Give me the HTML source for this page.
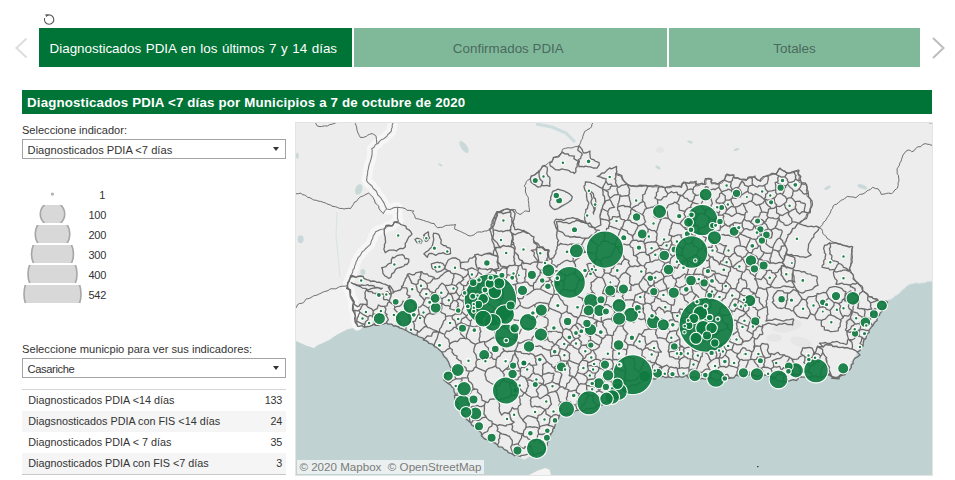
<!DOCTYPE html>
<html lang="es">
<head>
<meta charset="utf-8">
<title>Diagnosticados PDIA por Municipios</title>
<style>
html,body{margin:0;padding:0;background:#fff;}
body{width:955px;height:480px;position:relative;overflow:hidden;font-family:"Liberation Sans",sans-serif;color:#333;}
.abs{position:absolute;}
.tab{position:absolute;top:28px;height:39px;line-height:41px;overflow:hidden;text-align:center;font-size:13.4px;white-space:nowrap;}
.tab span{position:relative;}
.tab.on{background:#007336;color:#fff;}
.tab.off{background:#80b99a;color:#4b695d;}
#title{left:22px;top:90px;width:910px;height:24px;background:#007336;color:#fff;font-weight:bold;font-size:13.3px;line-height:25px;overflow:hidden;white-space:nowrap;letter-spacing:0.165px;}
#title span{position:absolute;left:5px;top:0;}
.lbl{font-size:11.05px;line-height:13px;color:#333;white-space:nowrap;}
.dd{left:22px;width:262px;height:18px;border:1px solid #a3a3a3;background:#fff;}
.dd span{position:absolute;left:4.6px;top:0;line-height:20px;font-size:11.15px;color:#333;white-space:nowrap;}
.dd i{position:absolute;right:5.8px;top:7px;width:0;height:0;border-left:3.5px solid transparent;border-right:3.5px solid transparent;border-top:4.5px solid #333;}
.leg{font-size:11.6px;color:#333;}
.row{position:absolute;left:22px;width:264px;height:21px;font-size:10.8px;line-height:21px;color:#333;white-space:nowrap;}
.row.s{background:#f5f5f5;}
.row b{font-weight:normal;position:absolute;left:6.3px;}
.row u{text-decoration:none;position:absolute;right:4.1px;letter-spacing:-0.3px;}
#map{left:295px;top:122px;width:638px;height:354px;overflow:hidden;background:#c1d2d3;}
#mapb{left:0;top:0;width:638px;height:354px;box-shadow:inset 0 0 0 1px #e3e5e5;pointer-events:none;}
</style>
</head>
<body>
<!-- reset icon -->
<svg class="abs" style="left:40px;top:11px" width="18" height="18" viewBox="0 0 18 18"><path d="M6.6 4.6 A4.7 4.7 0 1 1 4.6 7.2" fill="none" stroke="#555" stroke-width="1.1"/><path d="M5.2 3.2 L8.4 3.6 L6.3 6.2 Z" fill="#555"/></svg>
<!-- nav arrows -->
<svg class="abs" style="left:12px;top:34px" width="20" height="28" viewBox="0 0 20 28"><path d="M14.5 4.5 L4.5 14 L14.5 23.5" fill="none" stroke="#dedede" stroke-width="2.1"/></svg>
<svg class="abs" style="left:926px;top:34px" width="24" height="28" viewBox="0 0 24 28"><path d="M7 4 L17.5 14 L7 24" fill="none" stroke="#bdbdbd" stroke-width="2"/></svg>
<div class="tab on" style="left:39px;width:313px;"><span style="left:-2.2px;word-spacing:0.86px">Diagnosticados PDIA en los últimos 7 y 14 días</span></div>
<div class="tab off" style="left:354px;width:313px;"><span style="left:-2.2px">Confirmados PDIA</span></div>
<div class="tab off" style="left:669px;width:251px;"><span>Totales</span></div>
<div id="title" class="abs"><span>Diagnosticados PDIA &lt;7 días por Municipios a 7 de octubre de 2020</span></div>

<div class="abs lbl" style="left:22px;top:123.7px;">Seleccione indicador:</div>
<div class="abs dd" style="top:139px;"><span>Diagnosticados PDIA &lt;7 días</span><i></i></div>

<!-- size legend -->
<svg class="abs" style="left:20px;top:185px" width="120" height="125" viewBox="20 185 120 125" id="legend">
<defs>
<clipPath id="lc0"><rect x="20" y="205" width="70" height="18"/></clipPath>
<clipPath id="lc1"><rect x="20" y="225" width="70" height="18"/></clipPath>
<clipPath id="lc2"><rect x="20" y="245" width="70" height="18"/></clipPath>
<clipPath id="lc3"><rect x="20" y="265" width="70" height="18"/></clipPath>
<clipPath id="lc4"><rect x="20" y="285" width="70" height="18"/></clipPath>
</defs>
<circle cx="52.4" cy="194.1" r="1.7" fill="#b4b4b4"/>
<circle cx="52.5" cy="214" r="12.2" fill="#d8d8d8" stroke="#a6a6a6" stroke-width="1.6" clip-path="url(#lc0)"/>
<circle cx="52.5" cy="234" r="17.3" fill="#d8d8d8" stroke="#a6a6a6" stroke-width="1.6" clip-path="url(#lc1)"/>
<circle cx="52.5" cy="254" r="21.0" fill="#d8d8d8" stroke="#a6a6a6" stroke-width="1.6" clip-path="url(#lc2)"/>
<circle cx="52.5" cy="274" r="24.5" fill="#d8d8d8" stroke="#a6a6a6" stroke-width="1.6" clip-path="url(#lc3)"/>
<circle cx="52.5" cy="294" r="28.5" fill="#d8d8d8" stroke="#a6a6a6" stroke-width="1.6" clip-path="url(#lc4)"/>
<g font-family="Liberation Sans, sans-serif" font-size="11" fill="#333" text-anchor="end" letter-spacing="-0.3">
<text x="105.2" y="199">1</text>
<text x="106" y="219">100</text>
<text x="106" y="239">200</text>
<text x="106" y="259">300</text>
<text x="106" y="279">400</text>
<text x="106" y="299">542</text>
</g></svg>

<div class="abs lbl" style="left:22px;top:342.7px;font-size:11.17px;">Seleccione municpio para ver sus indicadores:</div>
<div class="abs dd" style="top:358px;"><span style="letter-spacing:-0.37px">Casariche</span><i></i></div>

<div class="abs" style="left:22px;top:389px;width:264px;height:1px;background:#d4d4d4;"></div>
<div class="row" style="top:390px;"><b>Diagnosticados PDIA &lt;14 días</b><u>133</u></div>
<div class="row s" style="top:411px;"><b>Diagsnosticados PDIA con FIS &lt;14 días</b><u>24</u></div>
<div class="row" style="top:432px;"><b>Diagnosticados PDIA &lt; 7 días</b><u>35</u></div>
<div class="row s" style="top:453px;"><b>Diagnosticados PDIA con FIS &lt;7 días</b><u>3</u></div>
<div class="abs" style="left:22px;top:474px;width:264px;height:1px;background:#c8c8c8;"></div>

<div id="map" class="abs">
<svg width="638" height="354" viewBox="0 0 638 354">
<rect width="638" height="354" fill="#ededed"/>
<path d="M0.1 216.8 1.7 217.8 3.6 218.8 6.0 219.4 7.7 220.6 9.3 221.4 11.7 222.1 13.3 223.2 14.8 223.7 17.0 224.4 18.9 225.4 20.7 224.0 22.0 222.0 24.3 221.5 26.7 221.1 28.3 220.1 29.6 219.2 31.7 218.4 34.2 217.6 35.9 216.5 37.5 215.1 39.3 213.7 41.0 212.6 43.3 211.2 45.5 210.1 46.8 209.3 48.4 208.5 50.6 207.6 52.8 206.4 54.8 205.6 56.8 205.6 59.8 204.8 62.2 203.6 63.9 203.8 66.4 203.6 69.1 204.0 71.0 203.9 73.6 203.1 76.3 202.8 77.9 202.2 79.9 202.3 82.7 202.2 85.0 201.5 87.0 201.3 89.6 200.9 91.7 200.9 93.4 201.2 96.3 201.6 98.7 202.5 101.0 202.7 103.4 203.8 105.0 204.6 106.8 205.2 109.3 206.4 110.9 207.0 112.5 207.8 114.7 208.9 116.4 209.5 117.8 210.5 120.0 211.4 121.9 212.0 123.4 213.1 125.8 214.2 127.9 215.2 129.3 216.6 131.5 217.4 133.4 218.7 134.6 219.9 136.6 221.0 138.6 222.5 139.8 223.7 141.3 224.6 143.1 226.0 144.3 227.2 145.8 228.4 147.9 230.2 149.0 232.0 150.1 233.7 152.3 235.8 153.2 237.8 153.6 239.1 154.7 240.7 155.9 242.9 156.8 245.2 157.0 247.6 156.6 249.6 154.9 251.2 152.0 252.1 151.5 253.6 150.9 255.7 150.1 258.1 152.1 260.0 153.9 261.1 156.0 262.9 157.3 264.7 159.5 266.4 159.9 269.2 160.5 271.7 160.4 273.5 160.7 275.5 161.2 278.1 162.2 280.0 163.3 281.8 163.5 283.5 164.1 285.3 165.5 287.4 166.3 289.5 166.8 291.3 168.5 292.4 170.6 294.0 171.8 295.8 173.2 297.3 175.6 299.3 177.0 301.1 178.0 302.4 180.0 304.2 181.7 305.5 182.7 306.6 184.3 308.2 186.0 309.9 187.2 311.8 188.4 314.2 190.2 316.2 191.8 316.7 194.0 317.8 196.5 318.2 198.2 319.1 200.4 319.8 202.4 321.0 203.5 322.7 205.1 323.8 207.3 325.0 208.8 326.5 210.7 327.5 212.8 328.9 214.1 330.3 216.1 331.4 218.5 332.6 220.0 333.4 222.0 334.2 224.3 335.4 226.0 336.0 228.6 337.4 231.1 336.7 232.6 335.5 234.7 334.5 237.2 334.4 239.3 334.6 240.9 335.2 243.1 335.1 244.4 333.1 246.2 331.1 247.4 330.0 248.8 328.2 250.2 326.0 250.8 324.5 252.1 322.5 252.6 320.1 253.8 318.5 254.2 316.2 255.3 313.2 255.7 311.2 257.0 309.2 257.5 307.0 258.7 305.6 259.4 303.9 260.4 301.6 261.3 300.0 262.0 298.4 263.2 296.0 264.0 293.5 265.0 290.6 266.7 290.8 269.2 291.5 271.0 291.7 272.8 290.9 275.6 290.8 278.2 289.5 279.8 288.3 281.7 288.2 284.5 287.8 286.8 287.8 288.4 287.3 290.5 286.3 293.0 286.2 294.9 286.1 296.8 285.4 298.8 284.6 300.7 283.6 302.6 282.7 304.3 282.4 306.1 281.9 308.1 280.6 310.2 279.5 312.0 278.9 313.3 277.8 315.4 275.8 317.7 274.6 319.4 274.0 321.3 272.3 322.8 270.6 324.2 269.9 326.4 269.0 328.4 267.4 329.7 266.0 331.4 265.3 332.8 264.3 334.7 263.2 337.1 262.2 339.2 262.2 340.9 261.8 342.8 260.5 345.1 259.7 347.3 259.3 349.0 258.6 350.9 257.9 353.2 256.9 355.4 255.9 357.1 255.6 359.2 255.8 361.5 255.1 363.2 254.8 365.1 254.6 367.8 254.3 370.7 254.5 372.9 253.6 375.7 253.9 377.7 253.9 379.9 254.0 382.7 254.6 385.0 254.0 387.6 253.7 390.3 252.4 392.0 253.4 393.7 254.6 396.4 254.2 398.3 254.7 400.1 254.9 402.8 255.1 404.9 255.5 406.6 255.3 409.0 255.5 411.2 255.7 412.7 255.5 415.0 256.1 417.4 256.3 419.0 256.5 421.0 257.3 423.4 257.0 425.2 256.5 426.7 256.3 428.9 255.6 431.4 255.5 433.2 255.8 435.1 255.3 437.2 254.5 439.2 254.0 440.8 253.3 442.8 253.1 445.3 253.2 447.7 252.8 449.4 252.7 452.1 252.5 454.4 252.3 456.1 252.8 458.7 252.8 461.1 252.9 462.9 253.1 465.2 252.5 467.7 252.5 469.3 252.5 473.4 253.6 475.4 254.4 477.4 255.5 480.1 256.6 481.7 257.3 484.0 258.7 486.7 258.5 488.6 258.8 491.1 258.4 493.7 258.0 495.3 258.2 497.6 257.4 500.5 257.0 502.4 256.1 504.0 254.7 506.5 254.5 509.3 254.0 510.9 253.7 512.7 253.8 515.2 253.6 517.0 253.4 518.5 253.9 520.9 253.9 523.2 253.9 524.9 254.1 527.0 253.4 529.5 253.0 531.3 253.0 532.7 252.6 534.9 252.8 536.9 254.6 537.8 256.1 540.3 256.0 542.9 255.9 544.7 254.1 546.8 252.8 548.9 252.1 550.8 249.9 552.5 247.6 554.1 246.3 554.9 243.1 556.2 240.6 557.7 238.4 559.6 235.7 560.6 233.9 561.9 231.1 562.9 229.2 564.3 227.6 565.3 225.3 566.9 223.8 567.5 221.1 568.5 218.0 569.5 216.6 570.7 214.4 571.5 212.2 572.8 210.5 573.4 208.2 574.8 205.7 575.4 204.2 576.9 202.4 577.9 200.5 579.2 199.3 580.6 197.7 581.4 195.5 583.2 193.6 584.2 192.0 585.9 189.7 586.9 188.3 588.6 186.7 589.4 184.3 590.4 182.6 591.5 180.9 592.2 178.5 594.7 177.3 596.7 176.9 598.2 175.6 600.0 173.8 601.8 173.0 603.8 171.7 606.1 169.1 607.8 167.5 609.6 166.3 610.9 164.6 613.1 163.3 615.3 162.0 617.4 161.9 618.9 161.2 621.3 160.8 623.9 161.2 625.8 161.0 627.8 160.8 630.2 160.6 632.2 159.5 634.1 159.3 636.9 159.2 639.4 158.6 639.0 160.5 638.9 162.2 638.8 164.6 638.6 167.0 639.0 168.7 638.9 170.4 639.3 172.8 639.3 174.9 639.1 176.4 639.2 178.2 638.6 180.7 638.9 182.8 638.6 184.5 639.0 186.7 639.2 189.2 639.1 191.0 639.4 192.6 638.9 194.8 639.0 197.0 638.7 198.6 638.6 200.3 639.0 202.8 638.9 205.1 639.4 206.8 639.2 208.8 639.2 211.3 639.0 213.3 638.6 214.8 638.9 216.8 638.6 219.1 639.1 220.9 639.1 222.5 639.2 224.8 639.4 227.3 638.9 229.1 639.0 230.9 638.6 233.3 638.8 235.5 638.9 237.1 639.0 238.8 639.4 241.2 639.1 243.2 639.3 244.8 638.9 246.9 638.7 249.4 638.8 251.4 638.6 253.1 639.2 255.4 639.1 257.7 639.3 259.3 639.3 260.9 638.9 263.2 639.0 265.4 638.5 267.1 638.9 269.0 638.9 271.5 639.1 273.7 639.4 275.3 639.1 277.4 639.3 279.8 638.8 281.6 638.8 283.1 638.8 285.2 638.7 287.6 639.2 289.4 639.1 291.2 639.4 293.6 639.2 296.0 639.0 297.6 638.9 299.5 638.5 301.9 638.9 303.9 638.8 305.3 639.2 307.3 639.3 309.7 639.1 311.7 639.3 313.4 638.7 315.7 638.9 318.2 638.7 319.9 638.8 321.6 639.2 323.9 639.1 326.1 639.5 327.6 639.1 329.4 639.0 331.8 638.8 334.0 638.6 335.6 638.9 337.8 638.8 340.3 639.3 342.2 639.2 343.8 639.2 345.9 639.2 348.2 638.7 349.9 638.9 351.5 638.6 353.9 636.8 354.3 635.1 354.4 632.8 354.0 630.8 354.0 629.3 353.8 627.3 353.5 624.9 354.0 623.0 354.1 621.3 354.1 618.8 354.4 616.6 354.1 615.0 353.7 613.1 353.9 610.7 353.7 609.1 353.9 607.5 354.4 605.1 354.2 602.8 354.2 601.2 354.2 599.0 353.6 596.5 353.7 594.8 353.9 593.2 353.8 590.9 354.3 588.9 354.4 587.4 354.0 585.3 354.1 582.8 353.8 581.0 353.6 579.2 354.0 576.7 354.1 574.6 354.2 573.1 354.5 571.1 354.0 568.8 353.8 567.2 353.9 565.5 353.6 563.0 353.9 560.8 354.3 559.1 354.1 557.0 354.3 554.5 354.1 552.9 353.6 551.3 353.8 548.9 353.9 546.9 353.9 545.4 354.4 543.3 354.3 540.7 354.0 538.9 354.1 537.1 353.7 534.7 353.6 532.6 354.0 531.2 354.0 529.2 354.2 526.9 354.4 525.2 354.0 523.4 353.8 520.9 353.9 518.7 353.6 517.1 354.0 514.9 354.3 512.6 354.1 511.0 354.3 509.3 354.1 507.0 353.6 505.0 353.8 503.4 353.8 501.2 353.9 498.7 354.4 496.9 354.3 495.1 354.0 492.7 354.1 490.7 353.6 489.3 353.6 487.2 354.0 484.9 354.0 483.2 354.3 481.4 354.4 478.8 353.9 476.7 353.9 475.1 353.8 472.9 353.6 470.6 354.1 469.1 354.2 467.4 354.1 465.0 354.4 463.0 354.0 461.4 353.6 459.0 353.9 456.6 353.8 454.9 353.9 453.1 354.4 450.7 354.2 448.8 354.1 447.4 354.1 445.2 353.6 442.9 353.7 441.2 354.0 439.3 353.9 436.7 354.3 434.7 354.4 433.1 353.9 430.9 353.9 428.7 353.8 427.2 353.6 425.4 354.1 423.0 354.2 421.0 354.2 419.3 354.4 416.9 354.0 414.5 353.7 412.9 353.9 411.1 353.7 408.8 354.0 406.9 354.4 405.4 354.2 403.2 354.2 400.8 354.1 399.1 353.6 397.2 353.8 394.6 354.0 392.7 353.9 391.2 354.4 389.0 354.3 386.8 353.9 385.3 354.0 383.4 353.7 380.9 353.6 378.9 354.1 377.2 354.1 374.9 354.2 372.5 354.4 371.0 353.9 369.2 353.7 366.8 353.9 365.0 353.7 363.5 354.0 361.1 354.4 358.8 354.1 357.1 354.2 355.1 354.0 352.6 353.6 350.7 353.8 349.2 353.9 347.0 353.9 344.9 354.4 343.3 354.3 341.4 353.9 338.8 354.0 336.9 353.6 335.2 353.7 332.8 354.1 330.6 354.1 329.1 354.2 327.2 354.4 324.9 353.9 323.1 353.8 321.5 353.8 319.0 353.6 316.7 354.1 315.0 354.3 313.0 354.1 310.6 354.3 308.8 354.0 307.3 353.6 305.1 353.9 302.9 353.9 301.3 354.0 299.3 354.5 296.7 354.2 294.8 354.0 293.1 354.0 290.8 353.6 288.6 353.7 287.2 354.1 285.3 354.0 282.9 354.3 281.1 354.4 279.4 353.8 276.9 353.8 274.6 353.8 273.0 353.6 271.0 354.2 268.6 354.3 266.9 354.1 265.4 354.3 263.1 353.9 260.9 353.6 259.3 353.9 257.2 353.8 254.6 354.0 252.8 354.5 251.1 354.2 248.8 354.0 246.7 354.0 245.3 353.6 243.3 353.8 240.9 354.1 239.1 354.0 237.3 354.4 234.8 354.3 232.6 353.8 231.0 353.9 229.0 353.7 226.7 353.7 225.0 354.2 223.4 354.2 221.1 354.2 218.9 354.3 217.3 353.8 215.1 353.6 212.6 353.9 210.8 353.8 209.1 354.1 206.8 354.5 204.8 354.1 203.4 354.1 201.3 354.0 198.9 353.5 197.1 353.8 195.3 354.1 192.7 354.0 190.6 354.4 189.1 354.3 187.1 353.8 184.7 353.9 183.1 353.7 181.5 353.7 179.0 354.2 176.8 354.2 175.2 354.2 173.0 354.3 170.5 353.8 168.9 353.7 167.2 353.9 164.9 353.7 162.9 354.1 161.4 354.4 159.3 354.1 156.8 354.1 155.0 353.9 153.2 353.5 150.7 353.9 148.6 354.0 147.2 354.0 145.1 354.5 142.8 354.2 141.2 353.9 139.5 353.9 136.9 353.6 134.8 353.7 133.2 354.2 130.9 354.1 128.5 354.3 126.9 354.3 125.3 353.7 122.9 353.7 121.0 353.9 119.4 353.7 117.2 354.2 114.7 354.4 113.0 354.1 111.1 354.2 108.6 353.9 106.7 353.5 105.2 353.9 103.2 354.0 100.9 354.1 99.2 354.5 97.4 354.1 94.8 353.9 92.7 353.9 91.1 353.6 88.9 353.8 86.6 354.2 85.0 354.1 83.3 354.3 81.0 354.3 79.0 353.7 77.4 353.8 75.1 353.8 72.6 353.7 70.9 354.3 69.1 354.3 66.7 354.1 64.8 354.2 63.3 353.8 61.2 353.6 58.9 353.9 57.2 353.9 55.3 354.1 52.7 354.5 50.7 354.1 49.1 353.9 46.9 353.9 44.6 353.5 43.1 353.9 41.4 354.2 39.0 354.1 37.0 354.4 35.4 354.2 33.0 353.7 30.6 353.8 28.9 353.8 27.1 353.7 24.7 354.3 22.9 354.3 21.4 354.1 19.2 354.2 16.9 353.7 15.2 353.6 13.2 353.9 10.7 353.9 8.7 354.2 7.1 354.5 4.9 354.0 2.7 354.0 1.2 353.9 -0.6 353.5Z" fill="#c1d2d3" stroke="#dde5e5" stroke-width="1"/>
<path d="M232.0 354.0 235.0 352.4 242.5 348.7 250.0 345.9 254.7 347.7 256.0 354.0Z" fill="#f4f4f4"/>
<polygon points="-1.0,184.0 8.0,180.0 22.0,173.0 34.0,168.0 45.0,165.0 52.5,163.2 54.4,168.8 57.2,176.3 59.0,188.0 62.0,205.0 52.0,207.5 43.0,212.0 33.0,218.5 22.0,223.5 19.0,226.0 11.0,223.5 -1.0,218.0" fill="#f1f1f1"/>
<ellipse cx="492.0" cy="204.0" rx="15" ry="6" fill="#e4e4e4" opacity="0.85" transform="rotate(-10 492.0 204.0)"/>
<ellipse cx="506.0" cy="220.0" rx="11" ry="5" fill="#e4e4e4" opacity="0.85" transform="rotate(15 506.0 220.0)"/>
<ellipse cx="479.0" cy="216.0" rx="8" ry="4" fill="#e4e4e4" opacity="0.85" transform="rotate(0 479.0 216.0)"/>
<ellipse cx="365.0" cy="28.0" rx="4" ry="3" fill="#e4e4e4" opacity="0.85" transform="rotate(0 365.0 28.0)"/>
<ellipse cx="556.0" cy="196.0" rx="5" ry="9" fill="#e4e4e4" opacity="0.85" transform="rotate(10 556.0 196.0)"/>
<ellipse cx="63.8" cy="67.5" rx="3.5" ry="5.5" fill="#c9d9d9" transform="rotate(20 63.8 67.5)"/>
<ellipse cx="2.3" cy="33.8" rx="1.5" ry="3.0" fill="#c9d9d9" transform="rotate(0 2.3 33.8)"/>
<ellipse cx="145.4" cy="42.8" rx="2.5" ry="1.0" fill="#c9d9d9" transform="rotate(30 145.4 42.8)"/>
<ellipse cx="67.9" cy="150.0" rx="2.5" ry="3.0" fill="#c9d9d9" transform="rotate(0 67.9 150.0)"/>
<ellipse cx="5.6" cy="117.2" rx="3.0" ry="4.0" fill="#c9d9d9" transform="rotate(0 5.6 117.2)"/>
<ellipse cx="169.0" cy="25.0" rx="3.0" ry="7.0" fill="#c9d9d9" transform="rotate(-35 169.0 25.0)"/>
<ellipse cx="532.5" cy="65.7" rx="3.5" ry="1.5" fill="#c9d9d9" transform="rotate(-30 532.5 65.7)"/>
<ellipse cx="567.2" cy="64.7" rx="5.0" ry="2.0" fill="#c9d9d9" transform="rotate(20 567.2 64.7)"/>
<ellipse cx="395.0" cy="20.0" rx="3.0" ry="1.2" fill="#c9d9d9" transform="rotate(20 395.0 20.0)"/>
<ellipse cx="441.5" cy="27.5" rx="3.0" ry="1.2" fill="#c9d9d9" transform="rotate(-20 441.5 27.5)"/>
<ellipse cx="363.0" cy="45.5" rx="3.0" ry="1.5" fill="#c9d9d9" transform="rotate(30 363.0 45.5)"/>
<path d="M241.0 2.0 L257.0 5.0 L271.0 11.0 L280.0 20.0" fill="none" stroke="#cddcdc" stroke-width="3"/>
<path d="M42.0 90.0 L41.0 113.0 L43.0 133.0 L45.0 155.0" fill="none" stroke="#d3dfdf" stroke-width="0.8"/>
<path d="M98.3 -1.0 98.2 0.5 97.2 2.9 97.2 5.5 96.4 7.0 96.4 9.1 94.6 11.0 93.0 12.4 92.1 13.8 90.1 15.8 88.5 16.9 86.5 17.6 84.2 19.6 83.2 21.4 81.8 21.9 80.2 22.9 79.0 25.2 76.8 26.8 77.2 28.4 77.1 31.1 76.9 33.5 76.5 35.0 75.8 37.8 75.0 40.4 74.4 42.0 73.6 44.9 73.3 47.4 72.7 49.0 72.6 52.0 72.0 54.3 71.9 55.8 71.5 58.3 73.0 60.7 74.7 62.2 77.0 64.0 77.8 65.8 78.8 67.0 81.2 69.0 82.2 71.3 82.8 73.0 84.7 74.7 86.4 76.7 86.9 77.8 87.8 79.1 89.2 81.4 90.2 84.0 91.1 85.8 91.6 87.0 94.9 87.5 97.2 86.5 98.9 85.6 102.4 85.3 102.7 87.3 102.6 90.1 102.3 92.1 102.6 93.7 102.4 96.3 103.5 99.1 100.8 99.8 99.1 101.0 97.7 103.6 95.9 104.2 93.8 104.0 91.8 104.7 90.1 106.3 88.4 107.0 86.5 107.2 84.4 107.9 82.4 108.9 80.6 109.8 79.8 111.6 78.0 114.3 77.7 116.7 76.7 118.1 76.1 119.8 75.4 122.4 73.7 123.9 72.6 124.9 70.3 127.0 68.9 128.6 67.0 130.0 65.7 132.7 64.5 134.4 63.1 135.5 62.3 137.8 61.1 139.8 60.8 141.4 59.6 144.1 59.3 146.3 58.0 147.6 57.7 149.9 56.7 152.2 55.9 153.5 55.4 155.5 54.3 158.1 54.0 159.6 52.8 161.1 52.5 163.6 53.0 166.1 55.0 168.3 55.4 170.6 55.4 173.0 56.4 174.7 57.1 176.0 58.7 180.0 58.1 182.6 58.4 184.4 58.4 185.6 58.8 187.7 60.1 190.1 60.1 192.2 60.5 193.9 60.7 195.9 60.8 198.3 61.8 200.2 61.9 201.5 62.5 203.5" fill="none" stroke="#f7f7f7" stroke-width="10" stroke-linejoin="round" stroke-linecap="round" opacity="0.95"/>
<path d="M98.3 -1.0 98.2 0.5 97.2 2.9 97.2 5.5 96.4 7.0 96.4 9.1 94.6 11.0 93.0 12.4 92.1 13.8 90.1 15.8 88.5 16.9 86.5 17.6 84.2 19.6 83.2 21.4 81.8 21.9 80.2 22.9 79.0 25.2 76.8 26.8 77.2 28.4 77.1 31.1 76.9 33.5 76.5 35.0 75.8 37.8 75.0 40.4 74.4 42.0 73.6 44.9 73.3 47.4 72.7 49.0 72.6 52.0 72.0 54.3 71.9 55.8 71.5 58.3 73.0 60.7 74.7 62.2 77.0 64.0 77.8 65.8 78.8 67.0 81.2 69.0 82.2 71.3 82.8 73.0 84.7 74.7 86.4 76.7 86.9 77.8 87.8 79.1 89.2 81.4 90.2 84.0 91.1 85.8 91.6 87.0 94.9 87.5 97.2 86.5 98.9 85.6 102.4 85.3 102.7 87.3 102.6 90.1 102.3 92.1 102.6 93.7 102.4 96.3 103.5 99.1 100.8 99.8 99.1 101.0 97.7 103.6 95.9 104.2 93.8 104.0 91.8 104.7 90.1 106.3 88.4 107.0 86.5 107.2 84.4 107.9 82.4 108.9 80.6 109.8 79.8 111.6 78.0 114.3 77.7 116.7 76.7 118.1 76.1 119.8 75.4 122.4 73.7 123.9 72.6 124.9 70.3 127.0 68.9 128.6 67.0 130.0 65.7 132.7 64.5 134.4 63.1 135.5 62.3 137.8 61.1 139.8 60.8 141.4 59.6 144.1 59.3 146.3 58.0 147.6 57.7 149.9 56.7 152.2 55.9 153.5 55.4 155.5 54.3 158.1 54.0 159.6 52.8 161.1 52.5 163.6 53.0 166.1 55.0 168.3 55.4 170.6 55.4 173.0 56.4 174.7 57.1 176.0 58.7 180.0 58.1 182.6 58.4 184.4 58.4 185.6 58.8 187.7 60.1 190.1 60.1 192.2 60.5 193.9 60.7 195.9 60.8 198.3 61.8 200.2 61.9 201.5 62.5 203.5" fill="none" stroke="#7d7d7d" stroke-width="1.1" stroke-linejoin="round"/>
<path d="M18.7 -1.4 20.5 0.5 21.2 2.2 22.1 3.9 25.0 4.6 26.6 4.5 29.4 3.9 32.4 4.0 34.3 2.8 37.3 2.1 40.3 1.0 41.9 0.4 43.6 -0.9" fill="none" stroke="#6e6e6e" stroke-width="1.0" stroke-linejoin="round"/>
<path d="M58.5 -1.2 60.5 1.8 61.1 3.7 61.6 5.0 62.0 8.3 63.4 11.9 64.3 13.5 65.3 15.4 68.6 15.4 71.6 14.2 72.8 13.1 74.6 12.3 77.2 11.5 78.9 12.6 80.6 13.5 81.2 14.9 81.4 17.3 81.8 20.0 81.7 21.8" fill="none" stroke="#6e6e6e" stroke-width="1.0" stroke-linejoin="round"/>
<path d="M-1.2 71.2 0.6 71.9 3.7 71.6 5.9 71.1 7.1 72.5 9.5 73.0 11.3 74.1 12.5 75.2 15.1 75.8 17.2 77.1 18.5 77.9 21.6 78.4 23.8 79.2 25.7 79.4 28.8 80.5 30.1 80.8 31.7 81.7 34.2 82.7 35.8 83.0 37.0 84.2 40.2 84.7 42.2 85.3 44.3 86.3 47.4 86.5 49.1 87.0 51.1 86.5 53.9 86.3 55.6 86.5 56.6 84.9 58.3 82.6 59.5 80.1 61.6 79.3 63.0 77.2 65.3 74.9 67.1 74.3 68.4 73.8 70.9 72.4 73.7 71.1 75.3 72.7 76.6 73.7 78.3 75.9 79.8 79.0 80.1 81.1 81.9 82.3 83.7 84.1 83.8 86.2 85.0 88.1 88.4 91.7 89.6 88.8 91.6 87.0" fill="none" stroke="#6e6e6e" stroke-width="1.0" stroke-linejoin="round"/>
<path d="M52.5 163.6 50.6 164.1 47.2 164.2 44.5 164.8 43.2 165.4 40.8 166.8 37.8 166.8 35.9 166.7 34.1 167.9 32.0 169.0 29.6 169.5 27.9 170.2 26.7 170.8 24.8 171.7 22.1 173.0 20.1 173.6 19.1 173.6 17.5 174.6 14.8 176.2 12.5 176.8 11.4 176.7 10.3 178.2 8.6 180.5 6.8 181.4 4.7 181.4 2.5 182.7 1.3 185.6 -0.8 186.7" fill="none" stroke="#6e6e6e" stroke-width="1.0" stroke-linejoin="round"/>
<path d="M102.4 85.3 105.2 85.6 108.0 85.9 110.8 86.9 112.1 88.4 114.9 88.3 117.2 89.0 118.7 88.8 117.6 90.4 118.8 92.3 119.7 93.9 120.4 96.4 121.9 96.7 124.7 97.2 127.1 98.1 128.6 98.4 131.6 99.6 133.8 100.0 136.1 101.2 139.3 101.6 140.4 103.8 142.6 105.7 145.2 105.4 147.4 105.3 150.4 103.6 152.3 103.3 153.6 103.4 155.7 103.0 158.5 103.0 160.5 102.4 159.6 105.3 159.8 107.2 162.1 108.0 164.2 109.0 165.3 109.3 167.3 110.4 169.6 111.4 170.8 111.9 172.7 113.3 175.3 114.0 176.8 113.5 178.6 113.0 180.5 111.5 182.5 110.1 184.8 109.9 186.6 110.1 189.2 109.1 191.9 108.9 193.4 108.3 195.3 107.4 197.5 106.1 197.6 103.5 198.3 102.0 198.3 99.9 199.2 97.1 199.7 95.8 201.1 94.4 201.8 91.8 202.8 90.0 205.4 89.6 207.8 89.2 209.3 87.8 212.6 86.7 215.5 87.6 217.3 87.4 220.4 87.7 221.1 90.3 222.3 91.0 225.0 92.5 227.3 91.3 229.1 89.5 230.5 88.9 234.5 89.6 234.4 87.9 234.1 85.2 233.7 82.8 233.8 81.3 233.3 78.7 233.3 75.4 231.8 73.4 231.1 71.9 230.3 69.0 230.7 65.8 229.3 63.8 230.7 61.9 231.4 59.5 232.5 58.2 234.5 57.7 235.4 55.9 236.8 54.1 238.6 53.5 240.0 52.3 242.5 50.0 244.1 48.6 245.7 47.0 247.2 45.4 248.1 44.5 249.9 43.8 252.2 42.2 254.0 40.3 256.0 39.7 257.5 38.4 258.7 36.0 261.0 34.9 262.8 34.4 264.6 32.5 266.6 30.5 267.5 27.4 269.1 26.6 270.7 26.3 273.2 25.7 275.3 25.9 277.0 25.9 279.6 24.8 282.2 24.4 283.7 24.2 284.6 22.9 285.6 20.6 286.2 18.1 287.5 16.9 287.8 14.3 289.0 11.3 289.5 9.6 291.2 8.6 293.0 7.4 295.1 6.3 296.5 4.9 296.9 2.4 298.1 0.3 298.8 -0.9" fill="none" stroke="#6e6e6e" stroke-width="1.0" stroke-linejoin="round"/>
<path d="M639.6 23.7 637.1 23.5 634.4 22.4 632.9 22.3 630.2 21.6 627.6 22.6 626.1 24.3 625.1 24.8 623.0 24.7 620.4 26.8 618.7 29.1 616.6 29.7 615.4 28.5 613.1 28.0 611.0 29.2 610.0 30.8 608.6 31.9 607.7 33.9 606.6 37.2 606.1 39.1 604.8 41.1 604.1 43.8 603.1 45.2 602.1 46.8 602.2 49.8 602.2 51.8 603.4 53.3 603.7 56.1 604.0 58.9 603.1 60.7 603.2 63.4 602.3 66.3 601.4 66.9 599.9 67.9 598.2 70.2 596.7 71.7 593.7 71.1 591.7 71.4 589.2 72.1 586.3 72.4 585.4 70.1 583.2 66.9 580.5 66.5 577.7 65.3 575.6 67.3 573.3 68.3 572.1 68.7 570.7 70.3 568.1 71.9 565.8 72.3 564.5 72.5 562.9 74.1 560.8 75.7 558.1 75.0 556.3 74.9 554.9 74.8 552.3 74.4 549.5 76.7 547.8 77.8 546.4 78.1 543.8 80.3 541.7 82.2 539.8 82.6 538.0 84.1 537.6 86.5 536.2 87.8 535.7 89.8 534.4 92.5 533.4 93.9 532.3 95.5 531.0 97.9 530.1 99.1 528.4 100.2 527.5 102.6 525.9 104.5 524.6 105.7 526.7 107.1 527.5 109.3 527.8 111.6 529.5 113.1 531.2 114.3 532.1 116.4 534.3 117.6 536.9 119.7 538.6 120.2 541.8 120.9 544.0 121.8 545.7 122.1 548.4 123.2 550.2 123.4 551.7 123.8 554.3 124.5 556.4 124.3 557.7 124.8 556.9 127.3 556.9 128.7 556.5 130.8 556.2 133.5 556.2 135.2 556.0 137.1 556.2 140.0 555.6 142.1 555.6 143.7 554.7 146.4 555.9 149.2 557.1 151.7 558.5 153.6 558.7 155.5 560.1 157.9 562.1 160.0 562.5 161.1 563.4 162.6 566.0 165.0 566.9 166.9 567.5 169.0 570.6 171.3 572.0 172.5 573.3 174.5 575.8 175.1 577.3 175.6 578.9 176.9 581.5 177.3 583.3 178.2 584.8 179.5 587.4 180.0 589.4 180.9 590.8 181.5" fill="none" stroke="#6e6e6e" stroke-width="1.0" stroke-linejoin="round"/>
<path d="M320.3 52.6 322.5 53.2 326.2 54.3 326.8 56.5 327.6 58.3 329.9 60.4 331.3 61.9 332.6 63.3 335.5 64.1 337.2 64.1 339.3 64.6 342.2 64.8 344.1 64.3 345.8 64.5 348.6 64.2 350.8 63.9 352.3 64.5 354.9 64.4 357.1 65.0 358.4 65.0 360.8 64.7 363.3 65.1 364.8 65.0 366.7 65.1 369.7 65.8 371.5 65.6 373.1 65.8 375.7 65.6 377.8 64.6 379.5 64.8 382.3 64.7 385.0 64.9 386.6 65.4 387.3 62.8 389.2 60.6 392.2 61.1 394.2 61.6 395.8 61.1 398.5 61.2 400.6 60.6 401.4 64.0 404.2 63.5 406.5 62.2 408.1 62.4 411.0 62.4 410.9 59.7 411.3 57.1 414.0 57.0 416.3 57.5 415.8 59.4 416.4 61.9 419.2 61.6 421.3 62.3 422.8 62.4 424.4 61.7 426.9 60.9 428.7 59.2 429.7 57.9 430.9 54.4 432.3 53.6 434.8 53.7 437.9 53.4 439.5 56.2 442.4 56.3 444.4 57.2 446.2 57.8 449.2 58.1 451.0 58.8 452.9 57.0 455.1 55.7 457.0 55.7 459.1 54.9 459.8 56.0 462.0 57.7 464.3 58.8 465.3 59.8 466.4 58.6 468.3 56.1 470.0 54.6 472.3 54.2 473.9 54.0 475.7 53.2 478.3 52.2 480.6 52.5 481.8 51.3 483.7 48.3 485.0 46.8 487.6 48.6 489.6 49.6 491.2 51.2 494.1 51.4 495.9 51.0 497.4 50.9 500.2 49.9 503.0 49.1 503.0 52.2 504.4 54.9 503.8 57.0 503.8 60.0 505.6 60.9 507.1 62.1 509.9 62.6 511.7 63.9 511.8 66.7 511.2 68.3 511.9 70.2 511.8 73.0 512.5 74.9 514.0 76.2 515.4 77.1 515.4 78.9 516.0 82.0 515.9 84.3 515.0 86.7 514.4 90.1 513.4 90.2 511.7 91.8 511.0 94.6 509.2 96.7 508.4 98.1 505.8 99.2 503.9 100.7 502.9 101.5" fill="none" stroke="#6e6e6e" stroke-width="1.0" stroke-linejoin="round"/>
<path d="M56.9 176.0 56.3 175.2 55.1 173.6 55.6 170.7 55.5 167.9 M55.4 170.7 55.5 167.9 M55.5 167.9 52.7 166.2 52.4 164.0 53.0 160.3 54.1 159.2 55.4 155.4 M54.9 171.0 55.3 174.9 55.8 175.8 58.5 180.3 M61.5 155.3 57.4 153.6 55.7 153.6 55.2 155.6 53.8 159.1 52.9 160.2 52.2 163.9 52.3 164.2 52.3 164.6 51.6 166.4 54.6 167.8 54.9 171.0 M56.9 176.0 56.2 175.2 55.1 173.7 55.4 170.7 M55.4 155.4 58.1 154.5 61.5 155.3 M55.4 155.4 57.0 154.2 59.7 155.1 61.7 155.3 61.5 155.3 M59.2 179.5 56.9 176.0 M59.2 179.6 56.9 176.0 M58.5 180.3 57.6 183.9 57.6 185.2 57.5 187.9 57.7 188.3 57.9 188.7 M59.2 179.6 58.5 180.3 M68.5 182.2 65.3 182.1 64.0 184.1 62.4 184.6 59.1 182.2 59.2 180.0 M57.9 188.7 61.1 188.3 62.3 189.0 63.7 188.4 M57.9 188.7 59.3 190.8 59.6 192.1 60.4 193.7 59.6 196.4 60.2 200.2 M60.2 200.2 60.7 201.0 62.3 203.1 62.4 203.5 62.4 203.9 62.6 203.8 62.7 204.3 62.8 204.3 63.0 204.3 64.0 204.3 67.2 203.7 69.4 205.3 M61.7 199.2 60.2 200.2 M61.5 155.3 62.5 154.5 65.4 154.0 68.2 154.5 68.8 156.3 71.7 157.6 74.7 158.4 75.5 159.5 78.2 159.0 80.9 159.6 81.7 160.4 84.0 160.1 87.0 161.3 87.9 161.8 89.8 162.1 92.9 163.7 94.1 163.8 93.3 165.1 95.2 168.6 96.4 171.9 M61.7 199.2 64.8 200.6 66.1 201.5 69.8 202.5 M65.0 190.3 63.4 193.2 63.4 194.2 62.3 195.9 61.7 199.2 M63.7 188.4 65.0 190.3 M68.5 182.2 66.4 184.7 65.5 187.3 63.7 188.4 M65.0 190.3 67.9 192.3 68.4 192.6 71.2 194.1 73.1 195.2 M72.2 182.4 68.5 182.2 M71.2 183.0 68.5 182.2 M69.8 202.5 69.4 205.3 M73.1 195.2 73.0 198.1 71.7 198.8 70.4 199.9 69.8 202.5 M69.4 205.3 70.1 205.1 70.3 205.0 74.1 204.3 77.3 203.4 78.2 202.1 80.6 203.4 M71.2 183.0 71.7 183.3 72.5 184.8 75.4 186.3 76.8 186.9 78.3 189.2 M72.2 182.4 71.2 183.0 M69.9 175.9 72.1 179.3 72.2 182.4 M69.9 175.9 71.9 178.1 72.2 182.4 M71.3 168.0 69.9 170.8 70.4 174.5 69.9 175.9 M89.4 172.4 86.2 171.9 84.1 172.5 83.1 171.4 79.8 171.5 77.7 170.9 76.7 169.6 73.4 169.6 71.3 168.0 M89.4 172.4 86.3 171.9 84.2 172.6 83.3 171.6 80.3 171.4 77.9 171.2 76.9 169.6 73.6 169.7 71.3 168.0 M73.1 195.2 74.7 193.4 77.4 194.1 M77.4 194.1 78.5 195.8 79.5 198.0 79.4 201.0 80.6 203.4 M77.9 192.4 77.4 194.1 M77.9 192.4 78.3 189.2 M78.3 189.2 79.3 188.0 82.1 186.6 83.4 183.0 84.8 183.7 86.1 184.4 89.4 184.4 M91.2 193.3 88.6 193.3 87.7 192.0 84.6 192.5 82.0 192.1 81.0 191.8 77.9 192.4 M80.6 203.4 83.0 203.4 84.8 202.5 87.9 202.2 91.7 200.8 M88.8 177.5 88.4 176.4 89.4 172.4 M88.8 177.5 88.4 176.3 89.4 172.4 M89.4 172.4 90.1 170.6 92.2 169.5 94.1 171.6 M94.1 171.6 91.2 170.8 90.4 171.6 89.4 172.4 M94.7 179.2 92.1 177.7 89.0 177.5 88.8 177.5 M94.7 179.2 91.9 177.6 88.8 177.5 M91.2 193.3 92.1 192.6 90.0 190.7 91.0 187.1 89.4 184.4 M89.4 184.4 92.0 183.9 92.7 181.0 94.6 179.7 M91.7 200.8 91.6 200.0 93.4 197.7 91.2 193.3 M91.7 200.8 93.0 202.2 96.7 202.2 98.6 204.0 100.6 203.8 103.7 205.1 M94.6 178.7 94.7 179.2 M94.6 178.7 94.7 179.2 M94.6 178.7 94.6 179.7 M96.1 173.0 95.9 174.5 94.5 178.1 M96.1 173.0 96.2 173.0 95.8 174.7 94.5 178.1 M94.6 179.7 94.8 180.1 97.7 182.1 99.5 183.8 99.9 185.4 M96.4 171.9 94.4 171.7 94.4 171.7 M96.4 171.9 94.4 171.7 M94.4 171.8 96.1 173.0 M106.6 164.4 106.8 166.3 105.3 168.0 102.1 168.9 99.9 169.3 98.0 171.1 97.9 171.2 98.1 168.4 96.8 166.4 95.8 164.8 95.5 164.6 95.4 164.4 95.2 164.2 95.0 164.1 94.8 163.9 94.6 163.8 94.4 163.5 94.3 165.3 95.8 169.5 96.4 171.9 M99.9 185.4 99.2 187.0 102.3 190.2 103.4 191.4 103.1 192.3 103.2 195.5 101.7 198.0 105.4 200.4 103.7 205.1 M107.8 179.7 107.2 182.0 104.6 184.3 102.6 184.2 99.9 185.4 M103.7 205.1 105.1 206.1 107.0 206.5 110.2 208.2 110.8 208.2 M114.1 174.8 115.3 174.0 113.3 173.4 111.7 172.0 112.6 168.7 111.6 165.8 108.1 165.7 106.6 164.4 M112.4 152.4 112.3 152.6 112.3 153.1 112.2 153.2 112.2 153.3 112.2 153.6 112.1 153.7 112.1 154.1 111.9 154.6 111.8 155.0 110.2 157.2 110.1 158.2 108.4 161.5 108.3 163.3 106.6 164.4 M111.6 189.6 112.1 187.8 111.6 186.7 110.0 185.3 108.9 182.7 107.8 179.7 M114.1 174.8 112.2 177.6 110.0 179.6 107.9 179.2 107.8 179.7 M110.8 208.2 111.5 208.8 114.4 210.5 115.9 210.6 116.8 211.8 120.0 213.0 122.0 213.1 M110.8 208.2 111.2 204.2 112.8 202.8 113.3 201.3 114.8 199.6 M111.2 190.6 113.6 194.0 114.3 195.9 115.1 197.1 114.8 199.6 M111.6 189.6 111.2 190.6 M114.8 199.6 115.1 197.1 114.4 195.9 114.0 193.9 111.5 190.7 M111.5 190.7 111.6 189.6 M111.6 189.6 115.0 189.6 117.8 188.8 118.4 187.9 119.4 186.6 122.5 185.6 M121.0 162.7 116.2 160.8 116.7 160.2 115.4 158.2 114.0 154.8 112.4 152.4 M125.3 149.9 122.8 150.3 120.8 150.8 119.6 152.5 117.3 152.8 114.1 151.7 112.4 152.4 M123.0 185.4 120.7 185.0 120.0 183.1 118.6 180.8 116.6 179.5 115.6 177.1 114.1 174.8 M114.8 199.6 118.1 199.6 M122.3 210.6 122.6 208.7 120.5 208.1 119.0 206.9 119.5 204.2 118.9 201.3 118.1 199.6 M118.1 199.6 120.4 199.0 120.6 197.7 122.4 194.4 122.7 193.3 124.2 192.0 M121.0 162.7 121.2 163.9 121.8 166.0 122.4 168.9 124.7 171.3 M125.7 157.2 123.3 158.2 123.0 161.7 121.0 162.7 M122.0 213.1 122.9 214.5 125.9 215.5 128.1 216.2 128.4 218.1 M122.0 213.1 122.3 210.6 M122.3 210.6 124.0 209.6 124.5 209.9 125.9 208.3 128.8 205.4 130.3 204.4 132.0 204.6 M124.2 192.0 123.4 187.8 122.5 185.6 M122.5 185.6 123.0 185.4 M127.6 182.6 125.5 184.8 123.0 185.4 M124.2 192.0 124.5 193.2 126.7 193.6 129.0 195.5 129.7 196.3 M124.7 171.3 124.6 171.3 125.0 172.3 124.8 173.2 127.7 175.9 129.4 178.7 M132.1 166.6 129.4 166.9 127.6 166.8 125.7 169.8 124.7 171.3 M125.7 157.2 124.9 155.4 126.2 152.1 125.3 149.9 M140.0 156.8 139.1 155.3 136.3 154.3 133.4 153.8 132.4 152.0 129.1 151.9 126.9 150.2 127.1 150.1 126.9 149.9 126.8 149.8 126.8 149.7 126.6 149.6 126.5 149.6 125.3 149.9 M131.4 161.3 129.8 159.3 128.8 158.9 125.7 157.2 M133.3 185.8 132.1 185.3 128.8 183.2 127.6 182.6 M129.4 178.7 128.3 181.2 127.6 182.6 M135.5 176.2 131.7 175.8 130.6 175.9 129.4 178.7 M128.4 218.1 130.9 218.6 132.9 219.9 133.6 221.3 137.4 222.1 139.3 224.3 M128.4 218.1 130.6 215.8 132.5 213.8 134.8 214.2 136.6 214.2 137.1 211.8 138.5 209.8 141.7 210.2 144.0 210.2 M132.0 204.6 129.3 200.5 129.4 197.5 129.7 196.3 M129.7 196.3 131.4 193.1 133.7 191.5 135.4 191.6 M144.0 210.2 140.7 208.6 138.6 207.9 137.6 207.5 134.5 205.8 132.6 205.6 132.0 204.6 M138.0 170.4 135.2 169.6 133.8 167.4 132.1 166.6 M132.1 166.6 132.5 163.6 131.4 161.3 M140.0 156.8 137.8 156.9 137.1 158.4 134.9 160.8 131.4 161.3 M133.3 185.8 134.6 188.7 135.4 191.6 M139.8 180.8 137.4 184.1 135.2 184.7 133.3 185.8 M135.5 176.2 136.5 177.0 137.7 178.8 139.8 180.8 M138.0 170.4 136.4 172.5 135.5 176.2 M135.4 191.6 137.9 192.3 140.7 191.3 144.2 189.6 145.5 189.0 M140.4 170.7 138.0 170.4 M139.3 224.3 139.7 224.7 142.4 225.9 143.9 227.6 146.7 230.0 M144.8 210.0 143.5 211.4 143.0 212.9 142.1 216.3 141.1 218.0 140.7 219.1 139.3 222.3 139.3 224.3 M147.0 181.2 143.9 181.6 142.5 180.2 139.8 180.8 M147.1 176.7 145.3 175.7 144.5 173.9 142.8 172.8 140.9 172.5 140.4 170.7 M150.2 163.5 149.6 163.1 146.9 161.1 144.3 164.0 143.3 166.0 142.1 166.6 140.4 168.7 140.4 170.7 M153.1 148.8 150.0 150.3 148.1 152.1 147.4 152.9 145.6 154.0 144.1 155.8 142.0 156.8 140.0 156.8 M150.5 194.7 150.6 197.4 149.0 198.7 148.5 199.2 147.9 201.6 146.5 204.1 146.5 204.9 144.7 206.9 144.4 210.0 M149.5 212.5 146.0 210.9 144.8 210.0 M145.5 189.0 146.4 190.7 148.8 191.7 150.4 192.4 150.5 194.7 M145.5 189.0 146.9 186.6 146.7 182.9 148.1 181.7 M148.1 181.7 147.0 181.2 M147.0 181.2 147.1 176.7 M146.7 230.0 148.3 232.9 149.0 234.5 151.7 236.7 152.6 238.7 153.2 239.3 153.8 240.9 155.0 244.4 156.5 246.0 156.4 248.2 M146.7 230.0 149.7 229.7 150.3 229.2 152.2 227.4 155.2 226.2 M152.9 171.3 152.7 172.6 150.6 174.9 148.9 175.5 147.1 176.7 M155.4 185.0 153.8 183.7 150.6 183.6 149.4 183.1 148.1 181.7 M154.7 221.9 153.9 219.1 153.7 217.5 152.1 216.4 149.9 214.7 149.6 213.4 149.5 212.5 M149.5 212.5 151.1 209.7 151.6 208.8 154.3 209.3 157.3 207.5 158.9 205.4 160.6 205.4 M152.9 171.3 153.6 170.0 151.5 166.8 150.2 163.5 M156.3 162.6 153.9 163.3 150.2 163.5 M150.5 194.7 153.5 193.9 157.4 193.9 M153.1 148.8 155.2 149.3 155.7 150.6 158.7 152.0 M166.0 146.3 165.5 144.2 165.4 140.5 164.5 138.0 163.0 137.2 162.6 137.3 160.9 135.9 157.1 136.0 153.2 138.0 152.5 139.5 151.1 142.3 149.7 145.9 150.1 146.9 153.1 148.8 M158.7 152.0 155.7 150.6 155.2 149.2 153.2 148.7 153.1 148.8 M153.4 171.3 152.9 171.3 M153.0 261.5 155.5 262.8 156.9 265.0 158.7 266.3 159.2 270.0 160.6 272.3 159.4 273.9 M156.4 248.2 155.8 248.8 155.1 250.6 151.9 251.6 151.4 251.6 151.3 251.8 150.9 251.8 150.8 252.0 150.3 252.8 150.0 255.1 148.9 258.2 149.1 258.4 149.3 258.5 149.5 258.7 149.9 258.7 150.1 258.8 152.1 260.8 153.0 261.5 M153.0 261.5 155.6 260.4 157.5 258.4 160.0 257.5 160.5 256.5 M158.1 178.4 157.8 176.2 156.6 173.0 153.4 171.3 M153.4 171.3 156.1 171.5 159.8 171.3 161.2 169.0 M161.6 178.8 163.5 181.6 162.6 182.7 163.7 183.9 162.3 184.8 160.7 187.3 159.2 188.2 157.4 187.5 154.7 186.7 155.4 185.0 M155.4 185.0 155.7 181.7 157.3 180.3 158.1 178.4 M174.3 249.1 171.3 248.7 171.3 246.9 170.6 245.3 167.4 244.2 166.1 241.4 166.1 239.2 163.8 238.1 161.5 236.0 161.8 235.5 162.1 234.2 159.3 233.0 157.0 230.0 157.4 227.7 155.2 226.2 M155.2 226.2 154.2 224.7 154.7 221.9 M170.4 216.7 168.8 216.1 165.3 216.4 162.9 219.0 162.1 219.7 160.1 219.1 156.8 220.4 154.7 221.9 M160.7 163.8 157.2 162.5 156.3 162.6 M156.3 162.6 157.8 159.0 157.6 157.7 158.9 155.5 158.7 152.0 M156.4 248.2 156.3 248.9 158.9 251.5 160.3 254.8 160.5 256.5 M161.4 204.7 160.8 201.9 159.9 198.6 157.5 196.9 157.1 195.9 157.4 193.9 M157.4 193.9 157.7 193.3 157.9 193.4 158.6 193.3 160.0 191.9 163.1 192.1 166.2 191.8 166.7 189.1 M158.7 152.0 160.6 151.5 162.5 152.2 165.2 153.2 167.0 154.2 167.6 156.0 M161.6 178.8 158.1 178.4 M159.4 273.9 159.9 276.5 159.6 278.8 161.2 280.0 163.3 281.5 162.7 283.5 162.8 285.8 164.6 287.8 M161.7 273.1 159.4 273.9 M161.2 169.0 162.4 167.0 162.6 165.8 160.7 163.8 M160.7 163.8 163.5 160.9 164.4 160.1 164.5 160.1 M164.5 160.1 163.6 160.9 160.7 163.8 M161.2 169.0 162.1 171.6 164.5 174.4 M160.6 205.4 161.3 206.1 164.6 207.9 165.7 210.8 166.0 212.3 168.8 214.7 170.4 216.7 M161.4 204.7 160.6 205.4 M160.5 256.5 162.6 256.9 165.8 256.8 166.9 256.0 M162.1 177.9 161.6 178.8 M166.2 200.6 162.5 202.3 161.4 204.7 M167.0 178.6 164.1 177.2 162.1 177.9 M164.5 174.4 164.2 176.1 162.1 177.9 M161.7 273.1 165.3 274.2 167.4 274.7 168.7 274.1 172.2 274.7 M166.9 256.0 167.0 259.1 165.4 260.2 165.4 261.9 164.0 265.2 163.8 266.6 162.8 268.0 162.2 271.4 161.7 273.1 M164.5 160.1 164.9 160.9 M167.1 171.8 164.5 174.4 M164.6 287.8 165.7 289.7 166.7 291.4 166.8 291.6 167.6 292.5 169.8 294.1 171.1 296.8 172.3 298.1 175.3 300.4 M164.6 287.8 167.3 286.6 168.4 285.7 169.8 284.9 172.5 285.1 175.1 284.4 M164.9 160.9 166.9 162.8 168.6 163.6 M164.9 160.9 166.3 159.4 168.7 157.0 M168.7 157.0 168.8 157.2 166.2 159.6 164.9 160.9 M174.2 203.9 172.1 203.3 169.1 201.8 168.4 201.9 166.2 200.6 M166.2 200.6 166.0 199.4 166.6 197.1 170.7 194.9 M172.3 147.6 170.3 148.0 169.2 146.9 166.0 146.3 M182.1 146.1 180.9 142.6 180.7 139.5 180.5 138.4 181.4 137.0 179.7 134.1 177.0 136.2 174.7 136.2 173.8 137.8 173.0 139.9 169.5 140.1 166.3 140.5 165.7 141.5 165.4 144.6 166.0 146.3 M167.1 171.8 167.9 174.0 170.7 175.0 M168.7 167.0 167.3 169.6 167.1 171.8 M166.7 189.1 168.9 191.8 171.7 194.0 M169.0 183.9 168.4 185.4 166.7 189.1 M174.7 170.6 173.0 169.1 169.7 168.7 168.7 167.0 M168.6 163.6 168.7 167.0 M169.0 183.9 169.1 180.9 167.0 178.6 M167.0 178.6 169.7 178.0 170.7 175.0 M166.9 256.0 169.0 255.8 172.6 255.6 M172.7 161.3 171.5 163.7 170.6 163.7 168.6 163.6 M167.6 156.0 168.7 157.0 M167.6 156.0 170.9 154.3 173.2 151.5 M174.8 180.9 172.1 181.3 170.6 181.9 169.0 183.9 M170.4 216.7 171.6 216.3 M170.7 194.9 171.6 195.5 173.5 197.7 175.6 199.1 M170.7 194.9 171.7 194.0 M170.7 175.0 172.5 174.1 M171.7 194.0 173.2 191.6 174.1 190.5 M175.1 284.4 173.2 281.4 172.9 279.1 172.2 278.1 172.4 277.0 172.2 274.7 M172.2 274.7 173.3 272.1 175.2 271.3 176.1 269.9 177.2 267.9 180.1 267.2 M180.1 267.2 177.8 265.9 177.7 263.1 176.4 261.1 173.6 258.9 173.3 256.3 172.6 255.6 M172.6 255.6 172.5 254.2 173.8 251.0 174.3 249.1 M171.6 216.3 174.4 218.0 175.5 219.4 175.5 219.6 177.9 221.1 180.7 222.4 M171.6 216.3 171.4 212.9 172.5 210.6 172.7 209.5 174.0 206.1 174.2 203.9 M173.2 151.5 174.7 155.0 175.5 156.9 M172.3 147.6 173.3 149.7 173.2 151.5 M172.5 174.1 173.0 176.9 175.9 178.8 M174.7 170.6 173.9 173.0 172.5 174.1 M172.3 147.6 176.5 145.9 176.8 145.9 M176.8 145.9 172.3 147.6 M172.5 160.4 172.8 160.3 174.7 158.6 175.5 156.9 M172.5 160.4 172.7 161.3 M172.7 161.3 172.4 160.8 172.5 160.4 M175.5 156.9 174.6 158.6 172.5 160.4 M172.7 161.3 175.1 162.9 177.3 163.3 178.3 162.5 181.8 162.7 M175.1 203.6 174.2 203.9 M174.3 249.1 174.7 249.1 176.4 249.2 178.2 248.3 179.2 246.0 180.6 244.9 M184.6 204.0 182.5 204.1 181.7 204.0 179.2 205.0 176.2 204.1 175.1 203.6 M175.6 199.1 175.4 202.1 175.1 203.6 M175.1 284.4 176.9 285.0 M176.9 285.0 175.5 287.2 175.5 288.1 174.8 290.7 174.6 293.8 174.9 295.0 174.5 296.9 175.3 300.4 M180.6 169.0 176.8 169.5 174.9 170.1 174.7 170.6 M176.5 183.0 174.8 180.9 M175.9 178.8 174.8 180.9 M175.7 300.8 176.4 302.3 176.6 303.0 179.5 304.6 181.8 305.9 181.7 306.2 183.0 308.1 186.5 311.0 186.4 313.7 M175.7 300.8 177.6 299.6 178.0 297.7 179.9 298.1 183.3 298.7 185.6 297.4 186.3 296.4 188.0 295.7 191.0 295.0 M175.6 199.1 177.3 197.0 178.7 194.9 M175.9 178.8 178.3 177.5 179.6 177.3 M182.2 186.9 181.1 186.6 179.4 186.8 176.4 188.2 175.0 187.8 M174.1 190.5 175.0 188.2 175.0 187.8 M175.0 187.8 176.5 183.0 M174.1 190.5 177.6 191.9 179.3 193.2 M182.8 148.3 180.2 147.5 177.5 146.1 176.8 145.9 M176.5 183.0 178.3 183.9 181.9 183.8 M180.5 156.1 175.5 156.9 M176.9 285.0 177.8 284.3 180.3 284.1 182.8 283.4 184.0 284.3 186.2 284.7 189.5 283.1 M178.7 194.9 179.5 197.5 182.9 198.3 184.2 200.6 185.3 202.4 M179.3 193.2 178.7 194.9 M183.2 190.8 179.9 192.4 179.3 193.2 M179.6 177.3 180.4 176.3 180.0 172.8 180.6 169.0 M182.1 169.4 180.6 169.0 M183.1 162.5 181.4 160.6 179.6 158.4 180.5 156.1 M183.4 150.1 182.1 153.2 181.1 154.5 180.5 156.1 M180.7 222.4 179.6 224.6 178.9 227.7 179.0 228.8 178.6 229.7 181.0 232.8 181.6 236.4 182.2 237.9 M184.9 220.5 181.5 221.7 180.7 222.4 M190.5 279.6 188.9 278.9 187.1 278.3 186.7 276.0 186.3 273.3 184.1 271.6 182.4 270.1 182.7 268.2 181.8 267.1 180.1 267.2 M179.6 177.3 180.8 177.4 M181.9 183.8 182.2 186.9 M180.8 177.4 181.7 180.9 181.9 183.8 M184.1 178.1 180.8 177.4 M180.6 244.9 184.0 246.7 185.1 247.2 187.9 248.3 191.0 249.6 M180.6 244.9 181.3 243.9 180.8 241.2 181.5 238.8 182.2 237.9 M181.8 162.7 183.3 166.1 182.1 169.4 M181.8 162.7 183.1 162.5 M184.7 145.9 182.1 146.1 M182.1 146.1 181.0 142.3 180.5 139.2 180.8 138.2 181.2 136.3 179.6 133.0 182.8 132.1 184.1 132.9 186.6 133.6 189.4 132.2 190.2 132.0 M182.2 237.9 183.2 237.4 186.3 237.4 189.1 235.7 190.5 235.0 192.9 236.1 195.7 235.6 196.7 235.1 M183.1 162.5 185.6 162.5 186.2 160.2 M182.1 169.4 184.7 169.9 188.1 172.5 M183.4 150.1 182.8 148.3 M184.7 145.9 182.8 148.3 M182.2 186.9 182.6 187.2 M193.8 192.9 192.2 193.9 188.2 194.0 185.8 194.7 185.6 192.4 183.2 190.8 M183.2 190.8 182.6 187.2 M186.2 160.2 186.5 157.6 187.4 156.8 186.8 155.6 187.1 152.7 183.4 150.1 M184.1 178.1 184.9 179.6 187.6 180.0 M187.9 172.7 186.1 173.9 186.0 176.9 184.1 178.1 M182.6 187.2 187.8 186.4 M192.3 148.0 191.1 146.9 189.4 147.1 186.0 146.9 184.7 145.9 M184.9 220.5 184.1 217.7 184.2 216.4 185.0 214.6 184.8 211.4 186.0 209.2 185.2 208.5 185.1 206.9 184.6 204.0 M185.3 202.4 184.6 204.0 M189.6 219.7 188.4 219.6 184.9 220.5 M194.6 205.4 191.6 204.3 189.0 204.4 188.1 202.8 185.3 202.4 M185.3 202.4 187.9 201.7 189.1 199.6 190.4 197.5 192.0 197.3 192.1 196.1 193.8 192.9 M195.5 190.6 194.7 190.4 193.4 189.4 190.3 188.0 189.3 188.0 187.8 186.4 M187.8 186.4 187.0 183.0 187.6 180.0 M190.9 162.1 186.2 160.2 M188.1 172.5 188.5 171.4 189.9 169.7 193.5 169.0 196.1 168.5 M192.4 175.9 189.9 174.4 187.9 172.9 187.9 172.7 M186.4 313.7 189.9 317.2 190.2 317.1 190.4 317.3 190.6 317.2 191.6 317.5 193.9 319.2 197.1 319.2 197.9 320.3 200.2 321.2 202.4 323.0 M186.4 313.7 188.4 311.3 189.6 310.6 192.5 309.5 193.7 306.1 195.5 304.6 196.7 304.3 197.2 302.1 M187.6 180.0 189.8 180.9 191.7 180.0 M191.0 295.0 190.8 294.2 188.9 292.0 189.2 289.0 189.5 287.1 189.3 285.6 189.5 283.1 M189.5 283.1 190.5 279.6 M196.7 235.1 197.2 232.1 195.7 230.5 193.2 229.5 193.3 228.0 193.5 226.1 191.3 224.4 189.7 222.2 189.6 219.7 M198.9 215.7 197.5 216.1 196.8 216.4 193.6 218.7 190.5 220.2 189.6 219.7 M190.9 162.1 191.5 164.0 191.9 166.0 195.6 167.7 M193.8 158.8 191.9 159.6 190.9 162.1 M201.5 276.4 200.6 277.2 197.9 276.8 194.8 277.5 193.5 279.8 192.7 280.6 190.5 279.6 M200.2 263.9 199.0 262.4 198.1 262.3 195.2 260.7 193.9 259.8 192.9 259.4 191.2 257.7 191.0 255.8 189.9 252.6 190.5 250.3 191.0 249.6 M191.0 249.6 191.5 248.1 193.9 246.3 196.8 245.7 198.7 244.9 200.8 243.5 M197.2 302.1 197.0 299.3 194.0 298.3 192.2 296.6 191.0 295.0 M199.3 94.8 198.6 96.3 198.5 96.3 197.0 99.6 197.2 101.4 196.2 102.4 196.2 105.5 194.7 107.0 194.5 107.2 194.3 107.3 194.2 107.4 195.6 109.4 196.7 113.7 197.3 116.2 196.8 116.9 197.1 118.7 199.0 122.4 199.3 125.2 199.8 126.5 198.4 129.9 198.5 132.3 197.3 132.3 195.3 131.0 192.0 131.3 190.2 132.0 M190.2 132.0 192.8 131.5 196.2 132.2 197.3 132.8 M190.2 132.0 192.6 131.6 195.9 132.1 197.0 132.9 197.3 132.8 M199.3 186.2 199.3 186.2 197.7 184.5 197.2 184.0 194.7 182.8 191.9 180.8 191.7 180.0 M191.7 180.0 191.9 180.8 194.7 182.9 197.2 184.0 197.7 184.5 199.3 186.2 M192.4 175.9 191.7 180.0 M196.1 173.8 193.9 175.0 192.4 175.9 M203.9 146.1 200.8 147.1 198.6 147.9 197.3 146.8 194.9 146.7 192.3 148.0 M197.7 147.4 195.5 146.6 192.3 148.0 M199.9 158.8 197.6 159.5 194.7 159.7 193.8 158.8 M197.7 147.7 197.0 147.6 195.6 150.0 192.4 152.2 190.7 152.3 192.1 154.3 192.7 156.7 193.8 158.8 M193.8 192.9 194.9 191.9 M194.6 205.4 195.1 206.8 197.9 207.4 200.3 209.3 200.0 210.2 M194.9 191.9 194.1 194.9 195.2 197.9 194.7 199.1 195.5 202.0 194.6 205.4 M196.1 168.5 195.2 169.8 196.1 173.8 M195.6 167.7 196.1 168.5 M195.6 167.7 197.6 165.2 199.1 164.2 M195.7 191.6 194.9 191.9 M194.9 191.9 195.7 191.6 195.7 191.6 M205.7 179.0 204.4 178.0 201.5 177.4 200.8 175.5 199.4 175.1 196.1 173.8 M195.7 191.6 195.8 191.3 195.5 190.6 M195.5 190.6 198.3 188.2 199.1 186.4 199.3 186.2 M200.5 190.5 197.0 191.2 195.7 191.6 M196.7 235.1 198.0 237.0 201.3 237.6 M215.8 107.1 214.0 108.7 212.6 108.3 210.3 108.8 207.5 109.8 206.7 108.8 204.3 109.3 201.3 108.3 200.5 108.1 198.1 108.0 M198.5 117.5 197.8 115.5 198.7 111.9 198.3 110.0 198.1 108.0 M198.1 108.0 197.9 104.9 199.1 103.1 199.3 102.2 200.0 99.2 200.8 96.8 201.0 96.0 M198.1 108.0 197.9 104.9 199.1 103.1 199.4 102.2 200.1 99.2 201.0 96.9 201.1 96.1 M203.9 146.1 199.9 147.6 197.7 147.4 M201.5 303.1 198.0 301.7 197.2 302.1 M199.0 148.6 197.7 147.7 M197.3 132.8 202.4 134.4 M197.3 132.8 202.7 133.9 M204.9 125.4 203.0 122.4 202.0 120.5 200.7 119.5 198.5 117.5 M204.9 125.4 203.0 122.4 202.0 120.5 200.7 119.5 198.5 117.5 M199.9 158.8 199.0 162.5 199.1 164.2 M202.0 156.7 199.9 158.8 M199.1 164.2 201.9 164.8 204.3 165.4 204.7 167.1 206.9 167.3 M199.3 186.2 201.3 187.0 M200.5 190.5 200.3 192.4 201.4 194.1 203.7 196.0 204.5 196.9 205.2 198.8 206.7 202.2 208.3 204.5 M201.3 187.0 200.5 190.5 M200.0 210.2 200.0 213.0 198.9 215.7 M198.8 215.8 202.1 215.9 204.7 216.6 205.8 215.4 208.9 215.8 211.7 215.6 212.6 215.5 215.3 216.9 218.0 216.9 218.8 217.8 221.1 218.2 M210.4 229.1 208.2 227.4 208.3 226.3 207.2 224.0 204.2 221.1 203.5 219.7 203.5 218.5 200.9 216.6 198.8 215.8 M199.3 94.8 201.0 96.0 M228.6 109.4 233.7 111.4 230.0 109.4 229.6 109.1 229.4 108.8 229.2 108.7 228.9 108.6 228.7 108.3 228.5 108.3 228.5 108.3 227.9 108.8 225.5 107.8 222.7 107.0 221.6 107.7 219.8 107.5 219.4 105.0 218.4 104.0 218.8 102.2 217.9 99.3 218.9 97.6 219.1 96.9 219.5 94.8 220.1 91.7 219.0 90.1 219.0 89.9 219.0 89.8 218.6 89.5 218.7 89.4 218.3 89.0 218.4 88.9 218.0 88.7 217.6 88.4 217.3 88.3 217.0 88.1 216.8 88.0 216.5 88.0 215.1 88.2 212.0 86.9 208.7 87.7 207.8 88.1 207.7 88.1 205.1 89.3 202.6 89.7 202.3 89.7 202.2 89.8 201.9 89.7 201.8 89.8 200.6 92.1 199.3 94.8 M199.0 148.6 201.2 150.1 201.3 153.8 202.0 156.7 M212.0 146.5 209.8 146.1 207.3 145.6 205.9 147.2 204.7 148.7 202.1 148.4 199.0 148.6 M201.3 237.6 201.1 239.0 201.0 240.3 200.8 243.5 M201.3 237.6 202.4 235.1 204.4 234.2 205.0 234.1 206.1 231.5 208.9 229.0 210.4 229.1 M200.8 243.5 201.4 245.7 204.4 246.4 205.8 248.6 207.6 249.8 M202.7 133.9 202.8 133.9 202.2 131.3 200.7 128.0 200.9 126.2 200.2 125.4 M202.7 133.9 202.1 131.3 200.6 128.0 200.9 126.2 200.2 125.4 M200.2 125.4 204.9 125.4 M200.2 125.4 204.9 125.5 204.9 125.4 M201.3 187.0 203.8 185.0 204.4 181.8 M208.3 204.5 207.4 205.2 205.1 206.0 203.0 208.2 202.1 209.5 200.0 210.2 M200.2 263.9 201.6 267.4 201.5 270.1 202.5 271.1 201.6 273.5 201.5 276.4 M208.6 258.6 207.6 258.5 205.3 261.4 203.6 263.7 200.2 263.9 M205.3 310.9 203.1 309.3 202.0 308.8 203.0 306.7 201.5 303.1 M201.5 303.1 203.2 303.3 204.7 302.7 208.1 303.4 210.9 304.2 211.7 302.9 213.7 302.7 216.6 302.0 M211.4 159.4 208.4 159.2 207.4 158.2 203.8 157.3 202.0 156.7 M201.5 276.4 202.2 277.1 M201.0 96.0 202.3 93.5 202.0 90.6 M201.1 96.1 202.4 93.5 202.0 90.6 M202.4 134.4 202.7 133.9 M202.4 134.4 203.2 134.8 202.7 137.4 M202.7 137.4 202.9 135.6 202.3 134.5 202.4 134.4 M202.2 277.1 205.4 277.9 207.5 276.6 208.5 276.6 208.7 276.7 211.7 275.7 214.9 274.8 215.6 273.1 M213.5 291.5 209.6 290.6 208.5 291.3 206.7 293.1 204.5 289.3 204.4 286.9 204.0 286.1 204.6 284.0 204.2 280.9 202.4 278.8 202.2 277.1 M202.4 323.0 203.5 324.8 207.4 325.2 208.6 327.0 209.7 327.7 212.4 328.8 213.2 330.7 215.6 331.3 216.0 331.3 219.3 333.5 M202.4 323.0 203.9 320.3 203.6 317.3 204.9 316.2 204.4 314.2 205.3 310.9 M202.0 90.6 205.7 90.1 207.6 91.4 209.3 91.3 212.7 90.3 214.5 90.1 215.2 88.9 M202.0 90.6 206.1 90.3 208.0 91.8 211.0 90.7 214.3 90.3 215.2 88.9 M202.7 137.4 202.0 140.3 203.1 141.8 202.7 143.0 203.9 146.1 M202.6 137.6 202.2 140.5 203.1 141.9 202.7 143.1 203.9 146.1 M205.5 144.0 205.2 142.5 203.0 140.2 202.6 137.6 M205.5 144.0 205.2 142.4 202.9 139.9 202.9 137.1 202.6 137.6 M214.6 314.2 213.5 314.2 211.5 313.0 208.3 312.1 207.2 312.2 205.3 310.9 M205.3 310.9 207.2 312.2 208.1 312.1 211.3 312.9 213.4 314.2 214.3 314.2 214.6 314.2 M215.9 124.7 214.7 124.6 214.0 124.1 211.4 124.3 208.6 123.7 207.2 124.2 205.3 125.8 204.9 125.4 M204.9 125.4 207.3 124.0 208.5 123.4 211.1 124.3 213.9 124.0 214.7 124.5 215.9 124.7 M213.8 144.2 212.0 145.1 208.7 144.3 206.7 144.2 205.5 144.0 M215.7 190.7 215.5 189.1 214.2 187.4 211.4 187.0 210.3 185.3 208.8 183.9 205.7 183.5 204.4 181.8 M204.4 181.8 205.8 180.9 205.7 179.0 M205.7 179.0 208.0 176.0 M206.9 167.3 208.3 170.2 208.3 174.1 207.9 175.9 208.0 176.0 M208.0 176.0 208.2 174.2 208.3 170.3 206.9 167.3 M206.9 167.3 208.5 166.5 209.4 164.0 211.3 161.6 211.8 161.2 M207.6 249.8 207.8 250.6 209.2 252.4 208.9 256.1 208.6 258.6 M211.0 246.8 207.6 249.8 M209.3 203.8 208.3 204.5 M215.3 261.7 214.4 260.3 210.8 259.4 208.6 258.6 M220.6 216.8 219.6 214.5 219.6 212.0 216.6 211.1 214.3 209.4 214.6 207.9 212.9 207.6 209.9 205.8 209.3 203.8 M209.3 203.8 211.2 201.2 212.2 200.8 214.9 200.1 218.0 196.9 M210.4 229.1 212.7 229.8 213.5 229.1 215.9 229.4 219.2 228.8 220.7 227.9 M211.0 246.8 212.5 247.3 214.7 246.8 218.4 248.3 220.0 248.4 222.1 248.8 225.7 249.0 M219.8 230.2 219.6 232.6 218.1 233.3 217.6 235.8 216.6 238.9 215.5 239.9 215.0 241.9 213.3 244.8 213.1 245.4 211.0 246.8 M211.8 161.2 211.4 159.4 M211.4 159.4 211.2 155.7 212.1 154.1 211.9 152.3 M211.8 161.2 213.1 161.9 214.4 161.7 217.6 162.8 219.4 162.5 220.4 162.4 M211.9 152.3 211.8 149.0 212.1 147.1 212.0 146.5 M213.8 144.2 212.0 146.5 M221.0 154.7 217.8 153.9 216.5 153.2 215.1 153.5 211.9 152.3 M219.5 143.1 217.0 143.7 214.5 143.4 213.8 144.2 M213.5 291.5 214.8 292.1 215.2 294.9 216.5 298.5 219.1 300.1 219.1 300.3 M219.1 300.3 217.2 299.2 215.3 296.7 215.1 293.6 214.6 291.9 213.5 291.5 M222.8 286.6 219.0 287.0 217.3 285.5 215.9 288.8 213.5 291.5 M216.9 322.9 217.3 321.4 217.3 318.5 215.0 315.7 214.6 314.2 M215.6 273.1 216.7 270.2 216.2 269.0 215.8 267.2 215.5 264.2 214.4 262.5 215.3 261.7 M215.3 261.7 216.1 261.1 M215.6 273.1 216.8 273.5 220.4 273.1 222.1 274.5 223.7 274.3 M215.2 88.9 216.0 91.7 215.6 94.6 217.1 95.9 216.7 97.9 217.1 101.5 216.4 103.6 215.7 104.6 215.8 107.1 M215.8 107.1 215.4 109.9 216.9 110.9 216.8 112.7 217.8 116.3 216.6 118.7 216.8 120.1 216.0 123.2 218.7 122.1 218.1 120.3 217.1 119.6 218.2 117.5 217.9 114.0 218.0 111.6 M215.8 107.1 215.3 109.8 216.8 110.8 216.7 112.1 217.6 115.3 217.1 118.1 216.5 119.4 216.5 121.5 215.9 124.7 M219.5 309.8 219.4 309.7 216.9 307.6 217.7 304.5 216.6 302.0 M216.6 302.0 217.6 304.6 216.9 307.8 219.5 309.8 M219.1 300.3 216.6 302.0 M229.0 271.0 226.6 268.8 225.7 267.8 225.2 267.1 222.4 265.3 220.0 264.6 219.9 264.1 218.8 262.2 216.1 261.1 M216.1 261.1 218.0 258.6 221.3 257.8 223.0 257.7 223.3 255.7 225.8 253.7 M218.0 196.9 216.7 194.6 216.6 193.7 215.7 190.7 M215.7 190.7 218.2 188.1 219.6 187.5 222.5 185.7 224.1 183.8 225.2 183.2 M215.9 124.7 218.8 126.2 219.4 127.3 219.4 129.6 M225.7 199.8 223.9 198.3 220.7 198.2 219.4 198.0 218.0 196.9 M219.4 129.6 219.9 127.7 220.3 125.9 218.9 122.9 218.6 120.6 217.1 119.8 218.1 117.9 217.9 114.2 218.0 111.6 M218.0 111.6 219.9 112.7 220.7 112.5 222.7 111.2 225.4 110.7 227.0 109.8 228.6 109.4 M216.9 322.9 216.8 323.5 215.7 324.9 216.4 327.7 217.7 330.2 218.1 331.7 219.3 333.5 M223.2 321.7 219.2 322.7 216.9 322.9 M219.3 333.5 219.5 333.7 220.3 332.9 222.6 333.7 225.1 334.5 226.1 333.5 227.9 333.3 231.4 332.7 233.7 331.6 234.5 332.5 236.5 333.1 239.2 332.5 M219.4 142.6 219.5 143.1 M219.4 129.6 219.4 132.8 218.6 135.3 219.5 136.2 218.9 138.4 220.1 141.4 219.4 142.6 M219.5 142.6 219.5 143.1 M228.3 311.6 225.9 311.7 222.9 311.0 222.1 309.8 219.9 309.8 219.5 309.8 M219.5 309.8 222.0 309.8 222.8 311.0 225.8 311.8 228.3 311.6 M223.9 143.9 221.0 143.4 219.5 142.6 M219.4 129.6 219.4 132.8 218.7 135.3 219.6 136.2 219.0 138.4 220.2 141.4 219.5 142.6 M228.5 141.7 228.0 139.6 226.8 138.3 224.7 137.9 223.6 136.0 223.1 133.2 221.3 131.5 219.4 129.6 M227.4 138.8 225.5 138.2 223.8 136.8 223.3 133.7 221.5 131.7 219.4 129.6 M223.3 161.1 221.4 159.0 222.1 157.3 221.0 154.7 M223.9 143.9 223.0 145.1 223.3 146.4 222.0 149.5 222.3 151.5 221.3 152.3 221.0 154.7 M223.0 220.1 222.9 222.2 221.8 225.3 221.1 226.5 220.7 227.9 M220.4 228.6 222.5 229.9 225.6 229.7 226.5 231.1 229.1 231.6 232.4 231.6 233.9 232.5 235.0 231.4 M220.4 228.6 219.8 230.2 M225.3 247.8 223.6 245.0 223.3 243.2 222.2 241.4 223.4 238.7 222.8 236.3 221.6 235.2 220.9 233.6 219.8 230.2 M220.4 162.4 220.9 165.4 220.7 166.6 220.9 168.4 221.4 171.8 220.8 173.8 221.4 174.8 221.7 175.2 223.2 176.7 M223.3 161.1 220.4 162.4 M221.1 218.2 221.0 217.9 220.6 216.8 M228.5 206.0 226.6 206.7 225.9 208.0 224.7 211.1 223.1 212.7 222.6 213.8 220.6 216.8 M223.0 220.1 221.1 218.2 M222.8 286.6 223.2 288.2 223.3 290.2 224.2 292.7 225.4 295.1 227.3 297.2 228.0 298.7 M223.7 274.3 225.1 277.3 225.0 280.8 225.8 282.4 223.6 284.1 222.8 286.6 M223.2 321.7 223.5 322.9 226.1 325.5 229.2 326.5 229.7 325.0 232.0 324.5 236.0 324.0 235.8 325.4 236.4 327.8 237.6 330.2 239.0 332.3 239.2 332.5 M228.2 313.2 226.6 313.5 226.6 315.9 224.9 318.5 224.5 319.4 223.2 321.7 M236.7 218.1 233.0 217.8 231.2 218.4 230.0 218.7 227.2 220.4 224.6 221.3 223.0 220.1 M229.8 159.8 227.5 160.7 226.6 160.9 223.3 161.1 M225.2 183.2 225.3 180.8 223.2 176.7 M223.2 176.7 226.7 176.7 228.0 175.9 228.9 173.5 230.9 172.4 232.7 172.5 235.3 170.8 237.9 168.6 238.4 168.2 238.7 167.9 M226.5 142.7 223.9 143.9 M225.7 249.0 225.3 247.8 M225.3 247.8 226.4 245.4 228.0 245.4 229.9 245.7 231.8 243.4 234.6 241.3 235.3 243.0 237.2 243.4 M225.8 253.7 225.1 251.7 225.2 250.8 225.7 249.0 M223.7 274.3 227.2 273.8 229.0 271.0 M239.5 183.5 239.1 182.7 236.9 184.2 233.5 186.1 231.5 186.2 231.1 186.1 228.9 185.7 225.6 183.7 225.2 183.2 M225.7 199.8 225.1 201.4 225.9 203.5 228.5 206.0 M242.7 193.6 241.2 195.8 240.0 197.6 237.2 197.4 234.2 195.5 233.5 195.1 230.6 193.6 228.6 193.8 227.7 196.6 225.8 199.1 225.7 199.8 M226.5 142.7 227.0 145.1 227.5 146.9 230.9 147.5 231.1 148.5 230.7 151.0 230.9 154.3 229.5 156.0 230.1 157.2 229.8 159.8 M227.4 138.8 226.5 142.7 M225.8 253.7 228.7 255.0 229.9 255.0 230.6 256.4 M228.5 141.7 227.4 138.8 M228.5 206.0 230.3 206.9 231.6 206.2 235.0 206.9 236.7 206.5 238.0 206.6 239.3 206.4 242.6 206.6 244.0 206.6 246.2 207.0 249.7 205.7 251.2 205.7 M228.3 311.6 228.2 313.2 M230.9 305.6 230.3 307.0 228.9 308.2 228.3 311.6 M242.2 316.5 239.5 319.2 238.4 318.4 235.1 317.6 233.1 316.8 232.0 315.0 229.1 314.7 228.2 313.2 M230.9 305.6 231.1 301.5 228.5 299.3 228.0 298.7 M228.0 298.7 229.3 296.3 232.7 293.7 235.1 294.1 M228.6 109.4 232.0 111.3 234.0 111.4 235.5 112.9 237.0 114.2 239.0 114.9 238.4 117.4 M242.8 139.3 241.9 140.0 239.2 140.0 236.7 141.0 235.3 142.3 233.2 141.6 230.1 141.1 228.5 141.7 M229.6 270.7 230.4 271.3 232.6 273.2 235.9 275.0 236.4 275.8 M231.6 258.2 233.0 261.4 232.7 262.9 233.6 263.7 231.7 267.2 231.5 269.5 229.6 270.7 M229.8 159.8 232.5 160.3 233.7 162.1 235.0 163.5 238.3 164.0 M244.4 306.5 241.7 305.4 238.8 304.8 237.8 305.3 235.5 304.6 232.2 305.2 230.9 305.6 M231.6 258.2 230.6 256.4 M230.6 256.4 233.3 256.1 234.8 255.1 236.7 252.2 238.9 250.5 M248.1 262.5 245.9 261.2 242.9 261.2 241.9 260.2 240.3 259.1 237.1 259.2 235.7 258.1 234.6 257.9 231.6 258.2 M235.1 294.1 235.3 294.2 236.2 294.3 238.8 295.3 241.7 296.4 242.6 296.3 M242.6 296.3 241.7 296.4 238.6 295.2 236.1 294.4 235.1 294.1 M240.0 234.7 239.8 234.2 238.1 232.3 235.0 231.4 M235.0 231.4 236.0 227.8 237.9 226.8 239.2 224.1 M239.2 224.1 238.0 221.2 237.3 220.2 236.7 218.1 M236.7 218.1 237.2 215.6 239.2 213.6 239.5 213.7 M239.5 213.7 237.4 215.6 236.7 218.1 M236.4 275.8 235.3 278.6 236.1 279.9 235.5 281.6 236.5 284.8 239.0 284.6 239.8 284.0 242.1 284.9 245.0 284.5 245.8 285.2 250.2 287.6 M236.4 275.8 238.2 275.1 240.7 274.9 242.7 274.4 M238.7 167.9 238.3 164.0 M238.3 164.0 238.8 160.9 240.8 160.2 241.0 158.8 243.0 155.8 243.2 154.8 244.9 153.2 245.3 149.7 M238.9 250.5 239.9 252.2 243.2 252.2 245.7 254.0 247.0 254.1 M237.2 243.4 238.6 246.3 238.1 249.3 238.9 250.5 M237.2 243.4 241.8 242.8 240.6 239.8 240.9 237.1 239.9 236.1 240.0 234.7 M239.5 213.7 240.5 213.9 242.3 215.4 245.3 216.3 246.1 217.0 248.9 218.7 252.9 216.9 M239.2 332.5 240.4 332.7 241.7 331.8 245.0 330.5 247.8 331.2 248.3 331.0 249.3 328.7 250.7 325.8 250.6 325.6 250.5 325.0 M254.1 129.1 254.2 128.8 254.1 128.6 254.1 128.3 253.9 128.2 253.8 127.9 253.6 127.9 253.2 127.6 250.0 127.3 248.9 126.1 247.9 124.8 244.9 124.6 243.7 122.9 243.8 122.6 242.5 121.3 239.6 120.0 238.4 117.4 M238.4 117.4 239.2 121.0 242.0 122.8 242.1 123.4 M238.4 117.4 238.4 117.0 238.9 120.7 241.9 122.8 242.1 123.4 M238.7 167.9 241.5 167.2 245.6 167.1 M247.3 225.1 244.0 223.7 242.7 224.4 239.2 224.1 M239.5 183.5 240.3 185.0 241.2 187.2 243.3 189.8 242.5 191.9 242.7 193.6 M253.9 182.6 252.1 181.5 248.5 180.8 247.3 181.0 244.8 180.3 241.3 181.4 239.5 183.5 M251.4 239.3 250.8 237.6 249.4 235.6 247.3 233.0 246.4 232.2 244.2 232.9 240.0 234.7 M242.1 123.4 242.1 124.9 244.1 125.6 M242.1 123.4 242.1 125.0 M242.1 125.0 241.5 128.7 241.9 131.4 242.7 132.8 243.2 135.7 243.7 138.5 242.8 139.3 M242.8 139.3 242.7 138.9 241.2 136.9 238.8 133.5 239.4 131.1 238.9 130.0 236.2 128.5 240.6 127.7 242.1 125.0 M242.1 125.0 244.1 125.6 M251.6 272.8 251.2 272.9 249.0 274.2 245.2 276.7 242.7 274.4 M242.7 274.4 243.3 271.9 241.4 268.9 241.5 267.7 242.8 266.4 245.4 263.4 247.8 262.4 248.2 262.8 M242.6 296.3 242.0 298.1 243.6 300.0 244.3 303.4 244.6 305.9 M242.6 296.3 243.2 293.4 246.0 292.6 247.2 291.3 250.2 287.6 M250.5 325.0 250.2 324.7 248.7 323.2 246.7 321.6 245.7 320.8 244.4 318.9 242.2 316.5 M242.2 316.5 242.6 313.5 243.6 312.0 M245.2 148.3 242.9 146.5 241.8 144.5 242.9 141.2 242.8 139.3 M252.7 138.4 252.4 138.5 250.8 138.6 248.4 140.2 244.3 140.3 242.8 139.3 M252.7 138.4 251.1 138.6 249.9 139.3 246.9 140.7 243.8 140.0 242.8 139.3 M243.6 312.0 243.1 308.4 244.4 306.5 M244.6 305.9 244.4 306.5 M244.7 49.1 244.0 50.9 244.2 54.5 245.1 57.2 246.2 58.3 247.7 59.8 246.6 62.8 M249.3 195.0 248.2 194.5 245.9 193.5 242.7 193.6 M253.5 303.3 253.0 302.5 251.3 302.8 247.6 303.7 245.1 304.5 244.6 305.9 M255.8 312.2 255.0 311.8 252.1 311.9 249.9 311.1 249.1 312.0 246.7 312.5 243.6 312.0 M245.2 148.3 245.3 149.7 M256.6 142.0 255.4 143.3 254.9 143.9 252.4 144.4 249.0 145.1 247.6 146.2 247.3 147.8 245.2 148.3 M245.6 167.1 246.1 167.7 248.3 168.5 250.9 170.1 251.5 170.2 254.4 171.8 257.1 172.4 258.1 173.2 M245.6 167.1 246.3 165.0 247.0 164.1 248.7 162.7 249.3 160.2 251.4 159.4 253.8 159.3 254.9 157.0 M244.1 125.6 247.1 125.7 248.3 126.9 249.7 128.3 253.0 128.4 M245.3 149.7 246.3 150.4 249.5 152.4 251.5 153.0 251.9 154.4 254.5 156.1 M248.0 226.6 248.1 226.4 247.3 225.1 M247.3 225.1 248.0 226.6 M247.8 252.4 247.7 252.0 247.7 249.0 247.5 247.9 248.0 246.7 247.8 243.3 M247.8 243.3 247.6 242.9 249.0 241.6 250.9 240.9 251.4 239.3 M251.4 239.3 250.9 240.9 248.9 241.7 247.8 243.3 M246.6 62.8 245.9 64.6 242.6 65.0 240.1 63.0 239.1 62.4 236.3 60.4 235.7 58.8 235.3 56.8 236.3 53.8 238.4 53.4 240.0 52.7 243.4 50.0 244.7 48.7 246.2 46.8 247.3 44.2 249.7 43.4 249.9 44.5 252.1 45.2 252.4 47.8 251.8 51.4 252.7 53.4 252.8 54.1 254.8 55.6 255.0 58.7 254.5 61.4 255.0 62.8 254.8 64.4 253.0 63.7 251.8 63.3 248.5 63.8 246.6 62.8 M248.1 262.5 248.9 258.7 247.0 255.3 247.0 254.1 M247.0 254.1 247.8 252.4 M255.1 228.1 252.5 228.0 249.1 226.7 248.0 226.6 M249.1 263.4 248.2 262.8 M247.8 252.4 251.2 251.7 253.4 250.7 255.4 251.1 258.5 251.3 258.8 251.2 M258.8 251.2 256.3 251.5 254.1 250.6 252.7 251.1 250.6 251.8 247.8 252.4 M250.2 287.6 250.9 289.2 251.0 291.9 253.7 293.4 256.1 294.9 M250.2 287.6 251.7 286.8 253.0 286.6 254.8 283.8 256.5 282.3 256.5 282.2 256.1 281.4 255.6 279.1 255.1 275.5 253.7 273.4 251.6 272.8 M249.1 263.4 251.1 264.1 252.1 266.0 253.0 269.0 253.0 271.4 M256.9 259.5 256.6 260.0 254.8 260.9 251.3 262.0 249.1 263.4 M251.2 205.7 251.1 204.6 252.7 203.7 253.0 200.9 253.1 197.7 251.9 196.0 249.3 195.0 M249.3 195.0 251.3 191.7 251.6 189.5 253.5 188.7 254.2 185.9 M251.8 210.1 251.2 205.7 M250.5 325.0 252.1 323.6 252.5 320.1 254.2 318.8 254.2 317.2 255.5 313.7 255.8 312.2 M252.9 216.9 253.3 218.5 254.7 219.7 257.5 220.0 258.4 221.8 260.0 222.5 M252.9 216.9 252.2 213.3 252.9 211.9 251.8 210.1 M253.0 128.4 253.1 129.0 M253.0 128.4 252.9 129.1 M252.9 129.1 252.5 131.9 252.8 135.3 251.6 137.0 252.7 138.4 M251.4 239.3 251.7 239.2 254.6 241.8 256.7 242.7 256.5 244.0 258.4 245.9 M253.1 129.0 252.5 131.9 252.8 135.3 251.6 137.0 252.7 138.4 M254.1 129.1 253.1 129.0 M251.8 210.1 254.8 209.4 256.0 209.8 257.7 209.0 261.2 209.2 263.1 210.3 264.3 210.2 267.4 211.2 M253.0 271.4 251.6 272.8 M255.7 136.9 254.3 137.2 253.7 133.8 253.2 131.2 254.1 129.1 M254.2 185.9 253.3 183.4 253.9 182.6 M258.1 173.2 257.1 175.6 255.8 176.2 255.7 178.0 254.0 181.2 253.9 182.6 M253.0 271.4 256.6 270.0 259.2 269.7 259.9 269.1 M254.9 157.0 254.5 156.1 M254.5 156.1 257.1 153.7 257.7 152.9 259.5 150.8 260.2 148.9 261.0 148.7 262.7 149.0 265.6 150.1 266.7 151.7 268.3 151.9 270.8 153.3 M253.5 303.3 257.8 304.3 259.2 306.4 M256.1 294.9 254.7 296.6 254.7 299.4 253.5 303.3 M256.7 159.4 254.9 157.0 M266.6 192.0 264.5 190.2 263.9 190.1 260.9 188.9 258.6 187.8 257.6 187.6 254.2 185.9 M255.1 228.1 255.4 230.5 255.9 234.6 259.5 233.0 261.0 233.3 263.7 233.1 M260.0 222.5 258.9 223.7 256.9 224.9 256.7 227.4 255.1 228.1 M264.8 293.3 263.4 293.6 261.2 292.5 258.3 293.1 256.9 294.7 256.1 294.9 M255.7 136.9 257.2 138.6 256.6 142.0 M262.6 123.8 261.8 125.7 262.2 126.5 260.8 128.8 260.9 131.7 259.9 132.9 259.1 134.2 259.2 134.5 258.5 135.7 255.7 136.9 M255.8 312.2 255.9 311.8 257.7 309.7 257.7 307.0 259.2 306.4 M268.8 159.0 265.0 158.6 262.9 158.5 261.7 158.2 258.5 159.7 256.7 159.4 M259.0 172.3 259.0 170.2 259.3 169.0 258.8 167.2 258.9 164.7 256.9 162.7 256.1 161.3 256.7 159.4 M278.0 139.0 275.6 139.7 272.5 138.3 271.6 138.3 269.6 139.0 266.6 141.0 264.9 142.3 262.5 143.2 261.8 145.4 259.4 143.0 256.6 142.0 M264.6 263.8 263.0 262.0 260.4 261.5 256.9 259.5 M256.9 259.5 256.8 259.4 258.2 257.0 258.2 253.9 259.1 252.8 258.8 251.2 M258.1 173.2 259.0 172.3 M258.4 245.9 260.2 246.6 259.9 248.5 261.0 249.6 264.9 250.2 M266.0 239.3 264.4 240.4 263.2 240.6 261.5 243.8 258.4 245.9 M259.2 306.4 259.6 305.0 260.4 301.9 261.7 300.6 261.9 299.3 263.7 296.0 263.7 295.6 264.8 293.3 M259.0 172.3 262.1 172.2 M262.4 105.4 261.0 105.7 M261.0 105.7 262.5 108.7 261.7 110.4 262.1 111.0 261.5 113.0 262.1 116.3 263.6 118.8 262.6 120.0 262.6 123.8 M289.9 101.0 289.9 100.4 288.2 99.2 285.5 98.3 282.1 96.7 282.0 96.8 281.9 96.7 281.8 96.9 281.7 97.0 281.7 97.1 280.5 96.7 277.7 95.7 275.6 96.2 274.5 96.3 271.9 96.7 268.6 98.3 267.3 98.0 266.5 97.3 264.0 97.6 261.5 97.2 261.3 97.1 261.0 97.4 260.9 97.4 260.5 97.8 260.4 97.9 260.2 98.3 260.1 98.3 259.9 98.7 259.7 99.1 259.4 99.6 259.3 99.9 259.2 100.2 259.2 100.5 260.1 102.7 261.0 105.7 M265.8 280.5 264.0 278.7 264.2 277.5 263.6 276.1 263.1 273.7 261.9 270.8 259.9 269.1 M259.9 269.1 262.0 268.7 263.8 266.3 265.5 264.7 M264.9 226.4 263.9 226.0 263.9 224.0 260.6 222.2 M267.5 214.0 265.7 216.9 264.2 217.6 262.7 218.8 260.6 222.2 M276.2 121.9 272.8 123.0 271.0 122.3 270.2 122.4 267.9 122.2 265.4 121.5 264.4 122.8 262.6 123.8 M263.0 108.6 262.4 105.4 M262.4 105.4 262.6 103.9 262.0 102.8 261.5 99.7 M273.8 114.3 270.2 113.7 268.5 111.4 267.6 110.4 264.0 109.2 263.0 108.6 M263.0 108.6 262.5 105.5 262.7 104.0 262.1 102.8 261.5 99.7 M272.6 184.2 271.6 183.4 269.6 182.9 268.4 181.0 267.6 179.1 265.9 177.8 264.4 175.5 263.6 173.1 262.1 172.2 M262.1 172.2 264.8 171.5 265.6 170.2 266.5 168.3 269.1 167.5 M261.5 99.7 265.0 99.5 266.2 99.6 268.2 100.6 271.6 100.4 273.5 101.5 275.0 101.4 277.8 99.8 279.9 99.3 281.4 98.3 M263.7 233.1 265.1 235.2 266.0 239.3 M263.7 233.1 263.5 232.1 265.0 229.0 264.9 226.4 M264.6 263.8 264.2 262.0 265.1 258.7 265.3 257.1 265.9 255.9 266.9 252.8 266.8 252.4 264.9 250.2 M264.9 250.2 266.7 252.4 266.8 252.8 265.7 255.8 265.3 257.0 265.0 258.7 264.1 262.0 264.6 263.8 M264.9 250.2 267.2 248.8 267.8 247.6 269.3 244.8 270.2 243.9 270.9 243.0 272.4 239.7 M265.5 264.7 264.6 263.8 M264.8 293.3 265.3 292.2 M265.5 264.7 267.9 264.8 269.3 266.7 M265.8 280.5 263.8 283.2 264.5 285.9 265.9 287.3 264.8 289.4 265.3 292.2 M265.3 292.2 265.3 291.9 265.4 291.7 268.9 292.4 271.3 292.5 271.3 292.3 271.4 292.1 272.4 291.2 276.0 291.9 279.0 290.5 279.7 289.2 279.6 288.8 284.2 288.1 M270.1 228.0 269.9 228.1 268.6 227.7 264.9 226.4 M272.0 279.1 269.9 279.8 268.2 280.5 265.8 280.5 M272.4 239.7 271.4 239.2 268.2 238.8 266.0 239.3 M267.5 214.0 268.4 215.2 269.7 216.8 272.2 219.2 273.0 220.0 275.5 222.1 M267.4 211.2 267.5 214.0 M266.6 192.0 265.9 195.6 264.9 196.6 264.8 200.0 265.8 202.7 265.7 203.5 267.0 204.9 268.3 208.0 M271.9 189.2 270.7 189.9 269.6 190.5 266.6 192.0 M268.3 208.0 267.4 211.2 M268.8 159.0 269.0 160.5 268.8 163.3 267.9 166.3 269.1 167.5 M270.8 153.3 269.9 156.6 268.8 159.0 M268.3 208.0 271.1 206.6 274.0 207.9 M269.1 167.5 272.3 167.6 273.8 168.9 274.8 168.5 277.7 168.4 279.8 168.9 M280.4 150.3 277.1 151.7 273.8 152.7 272.9 154.0 270.8 153.3 M269.3 266.7 271.7 267.2 273.8 267.9 M269.3 266.7 271.3 265.0 271.9 261.6 274.3 260.3 274.9 258.4 277.2 255.3 277.9 254.5 M273.6 238.2 274.6 236.9 274.3 232.9 274.9 231.4 272.3 229.3 270.1 228.0 M270.1 228.0 272.1 225.1 273.0 223.0 275.8 223.0 M282.8 196.9 282.0 195.0 279.0 194.5 277.5 193.3 276.1 191.5 273.0 191.0 271.9 189.2 M271.9 189.2 272.6 184.2 M272.6 184.2 272.6 184.4 271.9 189.2 M280.8 283.1 278.0 282.6 276.3 281.0 275.5 279.8 272.0 279.1 M273.8 267.9 272.5 271.2 272.4 274.5 271.3 275.8 272.0 279.1 M272.8 239.2 272.4 239.7 M285.2 115.2 281.5 115.3 280.4 114.6 276.8 115.0 274.8 115.0 273.8 114.3 M285.2 115.2 282.1 115.1 280.9 115.3 279.6 114.4 276.4 115.1 274.7 114.9 273.8 114.3 M281.3 268.0 279.4 268.3 276.2 269.1 274.2 269.1 273.8 267.9 M277.9 254.5 274.1 253.5 275.0 251.8 274.6 248.5 275.3 246.0 274.1 244.6 273.0 242.1 272.8 239.2 M272.8 239.2 273.6 238.2 M280.1 216.8 278.4 215.3 277.2 212.3 276.4 209.7 275.5 208.8 274.0 207.9 M274.0 207.9 275.9 206.9 278.0 203.9 280.0 202.8 280.3 203.3 M273.6 238.2 277.2 239.8 278.4 240.3 280.6 241.2 284.0 242.4 M275.8 223.0 275.5 222.1 M275.5 222.1 276.7 219.5 279.4 217.9 280.1 216.8 M275.8 223.0 278.2 224.0 278.4 225.1 281.5 226.8 283.8 227.2 M286.4 123.3 285.0 123.1 283.2 121.9 279.7 122.5 278.2 122.0 276.5 122.1 M276.5 122.1 276.8 124.4 276.9 125.4 275.7 127.5 276.6 131.1 276.4 133.5 277.9 134.4 278.3 136.2 278.0 139.0 M279.2 255.8 277.9 254.5 M278.0 139.0 279.2 140.8 M279.8 168.9 280.0 171.3 280.7 173.0 283.7 175.0 284.8 175.3 286.8 176.2 M279.8 168.9 280.4 166.4 281.8 165.6 281.8 163.4 283.5 160.3 283.6 159.1 284.8 157.8 M284.8 157.8 284.4 156.4 281.4 154.2 279.8 151.5 280.4 150.3 M280.4 150.3 280.2 149.5 280.9 146.9 280.4 143.9 280.5 142.9 279.2 140.8 M284.0 263.0 282.9 260.2 281.4 257.4 280.2 256.3 279.2 255.8 M279.2 255.8 281.0 253.1 282.5 250.4 M279.2 140.8 280.1 138.4 282.6 136.8 283.8 136.0 285.5 133.6 287.5 131.2 287.8 131.0 289.5 130.3 M280.1 216.8 281.2 216.4 283.1 216.2 M284.4 287.9 281.8 286.8 280.8 283.1 M280.8 283.1 282.3 280.2 282.0 279.1 283.2 277.8 283.5 274.8 283.9 272.9 284.9 272.1 M280.3 203.3 281.5 204.4 282.2 205.4 284.0 207.9 284.0 211.2 283.4 213.2 285.4 214.0 285.4 214.1 M285.4 214.1 283.5 213.2 283.9 211.4 284.1 208.1 282.2 205.5 281.5 204.4 280.3 203.3 M280.3 203.3 281.7 201.0 M284.9 272.1 281.3 270.3 281.3 268.0 M281.3 268.0 282.1 265.7 282.5 265.0 284.0 263.0 M281.4 98.3 284.0 98.9 287.0 100.3 288.0 100.2 289.9 101.0 M281.4 98.3 284.0 98.9 287.0 100.3 287.9 100.2 289.9 101.0 289.9 101.0 M281.7 201.0 283.5 201.6 285.8 203.1 286.7 205.0 288.6 205.4 291.7 207.0 M281.7 201.0 282.1 198.0 282.8 196.9 M285.2 193.3 282.8 196.9 M282.5 250.4 285.6 251.7 287.3 251.9 288.3 252.4 M284.0 242.4 284.4 243.1 283.0 244.8 283.3 247.8 282.4 249.4 282.5 250.4 M283.8 227.2 283.9 227.5 283.9 230.2 286.5 232.8 288.2 234.9 287.6 237.5 M283.8 227.2 284.7 226.3 286.4 223.4 M288.0 238.3 286.9 238.4 285.2 240.5 284.0 242.4 M290.3 261.5 289.2 262.1 285.6 261.6 284.0 263.0 M283.1 216.2 284.9 218.5 286.6 220.0 285.8 221.4 286.4 223.4 M283.1 216.2 285.4 214.1 M284.9 272.1 286.5 272.9 287.2 271.7 289.8 271.2 292.5 271.4 M284.2 288.1 284.4 287.9 M293.5 273.0 292.4 276.1 291.1 277.2 290.9 279.0 289.1 282.0 288.9 282.7 286.9 283.5 286.0 286.4 284.4 287.9 M284.2 288.1 286.7 289.0 288.2 288.8 291.0 286.9 293.4 286.8 294.3 286.4 297.0 286.3 300.2 285.8 301.7 283.5 M284.8 157.8 288.3 158.1 289.1 155.5 290.8 154.6 292.2 152.2 293.0 149.4 294.9 148.8 M291.7 116.1 288.4 116.1 287.1 116.3 285.2 115.2 M291.7 116.1 288.4 116.1 287.1 116.3 285.2 115.2 M285.2 193.3 288.5 193.7 290.0 194.1 291.4 194.0 294.8 195.6 296.5 195.7 297.9 196.4 M289.2 182.5 289.0 182.8 287.7 184.3 287.4 186.2 286.4 189.8 286.1 191.1 285.2 193.3 M289.5 130.3 288.1 125.6 286.4 123.3 M291.7 116.1 289.8 117.1 288.9 118.7 287.0 122.1 286.4 123.3 M286.8 176.2 287.8 178.1 289.0 180.3 289.2 182.5 M297.6 170.0 294.4 172.3 293.3 172.0 292.5 172.1 290.6 174.6 288.9 176.6 286.8 176.2 M286.4 223.4 290.7 223.0 M287.6 237.5 288.0 238.3 M287.6 237.5 290.1 236.0 291.4 233.0 293.8 231.9 295.7 230.8 296.4 228.6 M292.8 239.8 291.5 238.9 288.0 238.3 M301.1 132.0 297.6 130.8 295.8 131.0 294.3 130.6 290.8 130.0 289.5 130.3 M289.2 182.5 291.2 183.2 294.2 183.6 295.3 183.1 296.7 184.1 299.9 184.2 M288.3 252.4 291.1 254.3 292.2 255.6 292.2 258.0 M288.3 252.4 291.2 250.8 293.1 248.4 M289.9 101.0 292.3 101.6 M290.7 223.0 292.3 225.3 294.3 226.2 296.4 228.6 M295.7 218.1 293.9 218.7 293.6 220.5 292.3 222.6 290.7 223.0 M291.7 207.0 291.1 208.8 291.2 209.9 291.2 212.0 M291.2 212.0 290.9 212.2 291.2 209.9 291.0 208.7 291.7 207.0 M302.9 198.7 301.1 199.8 298.5 202.4 296.3 202.9 293.7 203.1 292.7 205.3 291.7 207.0 M290.3 261.5 291.7 263.3 M292.2 258.0 291.7 260.7 290.3 261.5 M292.3 101.6 294.9 101.0 296.9 104.3 299.1 105.6 M292.3 101.6 293.1 102.6 294.3 104.7 298.2 105.7 299.1 105.6 M307.3 66.3 304.6 65.1 302.4 63.8 301.8 63.5 298.9 61.7 296.6 61.3 295.7 60.4 290.4 59.8 290.2 62.9 288.9 64.4 289.2 65.4 289.8 67.9 291.9 70.7 291.4 72.6 291.6 74.7 292.1 78.1 293.4 80.2 293.9 81.3 292.9 84.0 292.4 86.6 290.8 87.5 290.7 89.9 290.0 92.4 290.1 93.9 289.8 95.0 289.7 97.7 291.5 101.0 292.3 101.6 M293.1 116.2 291.7 116.1 M293.1 116.2 291.7 116.1 M291.2 212.0 295.3 214.6 M291.7 263.3 295.0 264.0 296.5 263.8 297.5 265.0 300.7 265.1 M291.7 263.3 291.6 267.4 293.2 269.9 292.5 271.4 M292.5 244.2 292.8 239.8 M301.3 237.1 299.9 237.5 296.4 239.4 293.8 240.7 292.8 239.8 M292.5 271.4 293.5 273.0 M295.8 113.9 293.1 116.2 M295.1 115.4 293.1 116.2 M300.3 257.0 298.2 257.0 294.2 257.5 292.2 258.0 M293.1 248.4 295.6 248.8 297.1 250.8 300.6 251.1 M293.1 248.4 293.3 247.3 292.5 244.2 M292.5 244.2 295.9 243.4 297.4 244.0 298.9 244.4 302.3 244.4 303.8 245.9 M298.7 150.5 295.9 150.4 294.9 148.8 M294.9 148.8 293.3 147.0 292.8 144.3 291.8 142.3 293.6 141.5 296.9 141.1 298.8 139.6 299.2 137.8 300.9 137.2 M303.2 123.7 300.7 121.8 299.7 120.6 297.2 119.4 295.1 116.7 295.1 115.4 M295.8 113.9 295.1 115.4 M296.9 274.0 293.5 273.0 M295.7 218.1 295.3 214.6 M295.3 214.6 297.6 212.1 298.9 211.4 M304.4 223.5 301.4 221.6 300.1 221.2 299.0 220.1 296.6 218.5 295.7 218.1 M302.3 108.4 300.3 110.6 298.8 113.1 296.3 113.2 295.8 113.9 M296.4 228.6 298.1 228.2 M301.7 283.5 301.0 282.2 299.2 280.5 297.7 278.6 298.5 276.5 296.9 274.0 M296.9 274.0 298.9 272.9 301.1 271.8 301.5 269.8 304.0 268.8 M301.6 182.6 302.3 180.4 300.8 177.4 300.1 175.9 299.7 174.8 299.7 171.7 297.6 170.0 M302.8 155.2 299.7 157.9 298.6 159.6 298.0 159.5 296.0 160.6 296.5 164.2 295.7 166.1 296.2 167.5 297.6 170.0 M302.8 155.2 300.4 153.7 300.0 152.5 298.7 150.5 M298.7 150.5 298.2 147.7 299.3 144.8 299.0 143.9 300.0 141.3 300.0 138.2 300.9 137.2 M299.1 105.6 300.2 107.6 302.3 108.4 M299.1 105.6 300.9 108.0 M299.7 106.1 299.6 106.0 299.1 105.6 M299.1 105.6 299.7 106.1 M297.9 196.4 298.8 193.3 298.4 190.2 299.8 189.1 299.4 187.3 299.9 184.2 M299.9 184.2 301.6 182.6 M297.9 196.4 301.2 198.2 302.9 198.7 M301.3 237.1 300.8 235.9 301.1 233.5 299.2 230.3 298.1 228.2 M298.1 228.2 300.6 227.6 302.0 226.8 304.5 224.8 304.4 223.5 M300.3 257.0 299.8 253.9 300.6 251.1 M300.6 251.1 301.5 250.6 303.4 248.7 303.9 246.4 M300.3 257.8 300.3 257.0 M298.9 211.4 302.3 213.4 303.9 213.8 305.2 215.1 308.1 216.6 M298.9 211.4 300.3 207.9 300.0 205.8 301.6 204.5 301.4 200.9 303.0 199.0 M301.1 132.0 300.9 134.4 302.0 136.9 M303.2 123.7 302.4 125.0 302.2 128.6 301.4 130.5 301.1 132.0 M307.5 256.6 306.6 257.2 305.3 256.9 302.2 258.0 300.3 257.8 M300.3 257.8 299.2 259.3 300.6 261.9 300.7 265.1 M300.7 265.1 303.0 266.6 304.1 268.7 M306.0 102.8 302.7 104.5 299.8 106.0 M300.9 108.0 303.9 108.1 304.8 109.3 306.2 110.4 309.3 110.5 M300.9 108.0 302.3 108.4 M305.7 238.6 302.9 237.3 301.3 237.1 M300.9 137.2 302.0 136.9 M301.6 182.6 302.6 184.0 306.1 183.4 308.4 184.0 M301.7 283.5 303.6 283.0 307.4 283.0 M302.0 136.9 306.1 138.8 M306.6 155.3 305.9 155.6 302.8 155.2 M310.0 119.4 307.9 119.4 306.3 119.9 305.6 122.3 303.2 123.7 M303.0 199.0 306.5 200.2 M308.1 216.6 306.6 217.5 306.3 220.6 304.5 222.8 304.4 223.5 M303.8 245.9 303.9 246.4 M305.7 238.6 304.9 241.4 305.3 244.7 303.8 245.9 M303.9 246.4 304.0 246.4 306.6 246.6 309.8 248.5 M304.1 268.7 305.1 267.5 306.2 264.1 307.7 262.1 308.4 261.0 310.4 257.9 M304.0 268.8 307.4 270.4 M317.0 238.4 314.5 237.2 313.7 237.5 311.0 237.3 308.2 236.5 307.4 239.0 305.7 238.6 M305.3 96.8 305.6 100.0 305.6 101.5 306.0 102.8 M306.0 102.8 305.6 101.5 305.7 100.0 305.4 96.7 M309.6 150.8 308.8 149.2 309.8 148.5 308.3 146.6 306.9 143.4 306.1 140.7 305.5 139.7 306.1 138.8 M306.1 138.8 307.4 136.5 308.3 135.7 311.6 135.7 314.9 135.0 315.7 134.4 316.4 131.8 318.0 131.0 318.7 128.0 320.7 125.1 M304.9 94.9 305.3 96.8 M305.4 96.7 308.7 97.5 309.9 97.7 313.7 98.7 M305.4 96.7 304.9 94.9 M304.9 94.9 305.3 93.6 306.0 89.7 306.4 87.7 M306.4 87.7 306.4 87.8 306.7 88.8 306.7 89.0 305.1 92.2 304.9 94.9 M306.5 200.2 306.2 197.2 306.5 194.6 306.2 193.6 307.1 190.7 307.1 187.7 308.4 186.6 308.4 184.0 M313.0 212.9 312.3 211.5 311.6 209.4 311.1 207.2 309.1 205.0 307.6 202.6 308.5 201.0 306.9 200.1 M306.9 200.1 308.9 198.3 310.5 197.6 313.6 196.8 316.5 197.1 M307.5 66.3 307.3 66.3 M307.3 66.3 307.2 66.4 307.5 66.3 M310.8 59.2 310.2 60.7 308.1 64.8 307.8 64.8 308.0 65.0 308.1 65.1 308.0 65.2 308.1 65.3 308.2 65.4 307.3 66.3 M307.4 270.4 307.7 273.2 306.3 276.5 307.0 277.7 306.4 279.7 307.4 283.0 M307.4 283.0 310.2 279.7 310.3 279.8 312.5 280.0 314.1 277.5 M307.0 87.1 306.4 87.7 M306.4 87.7 307.0 87.1 M308.1 83.0 307.0 87.1 M308.1 216.6 310.0 215.0 310.4 213.4 313.0 212.9 M312.7 89.4 311.5 89.0 308.4 87.2 307.0 87.1 M307.0 87.1 308.1 83.0 M309.9 164.7 310.9 163.6 309.9 161.0 308.8 158.1 307.9 156.2 306.6 155.3 M309.6 150.8 308.4 153.2 306.6 155.3 M313.4 271.1 309.2 271.1 307.4 270.4 M312.0 173.7 310.0 171.9 307.8 171.4 307.6 171.4 M307.6 171.4 309.8 171.8 312.0 173.7 M307.6 171.4 307.6 171.3 308.3 168.8 309.5 165.7 309.9 164.7 M309.9 164.7 309.5 165.7 308.2 169.0 307.6 171.4 M308.1 83.0 309.1 81.3 309.7 79.7 M309.8 80.9 308.1 83.0 M307.4 66.9 308.1 70.2 307.9 72.8 309.4 74.2 309.7 76.6 309.7 79.7 M307.4 66.9 310.2 68.2 M309.7 79.7 309.7 76.6 309.4 74.2 307.9 72.9 308.2 70.2 307.4 66.9 M308.4 184.0 310.1 182.3 M307.5 256.6 310.4 257.9 M309.8 248.5 308.8 251.1 308.5 254.2 308.0 255.3 307.5 256.6 M309.3 110.5 309.6 111.7 309.8 114.2 308.7 117.4 310.0 119.4 M309.3 110.5 311.2 108.9 311.7 106.5 313.6 106.1 313.7 104.1 M309.8 248.5 310.3 248.4 312.0 247.8 315.8 247.3 318.2 245.5 318.3 245.3 M309.7 79.7 309.8 80.9 M314.8 77.7 310.7 78.8 309.8 80.9 M310.4 257.9 312.7 258.8 313.4 258.6 315.8 258.8 M320.2 123.4 318.7 121.9 315.7 121.5 314.5 121.0 313.2 119.5 310.0 119.4 M314.2 151.4 309.6 150.8 M316.1 184.6 315.0 184.5 313.0 182.7 310.1 182.3 M310.1 182.3 310.2 180.8 311.1 179.4 311.6 176.0 312.0 173.7 M310.2 68.2 313.2 70.1 313.1 73.0 315.0 76.2 M310.2 68.2 313.4 67.8 315.2 66.5 315.5 64.7 317.3 63.8 M322.6 164.0 319.3 164.4 317.3 164.2 316.0 165.5 312.6 165.3 309.9 164.7 M312.0 173.7 313.5 174.0 315.7 174.1 319.0 174.4 319.6 171.1 321.6 169.8 321.7 167.8 M310.8 59.2 313.0 62.5 M320.7 51.9 322.0 49.7 321.4 48.1 321.6 44.4 317.5 46.4 316.1 46.9 314.7 45.9 311.6 48.6 309.3 51.1 308.1 50.8 306.6 51.2 304.6 53.5 302.3 54.4 306.0 55.1 307.2 56.0 311.1 56.9 310.8 59.2 M313.0 62.5 310.9 59.2 310.8 59.2 M314.1 277.5 314.0 274.9 313.7 273.0 313.4 271.1 M315.8 267.7 315.6 269.9 313.4 271.1 M317.3 63.8 316.2 62.2 313.0 62.5 M314.5 98.2 314.1 95.1 312.6 91.8 313.2 90.5 312.7 89.4 M312.7 89.4 314.7 86.4 317.0 85.7 319.5 85.3 317.4 82.5 316.1 79.3 314.8 77.7 M313.7 98.7 314.8 101.1 313.7 104.1 M314.5 98.2 313.7 98.7 M317.0 213.6 313.0 212.9 M325.0 93.8 322.4 95.1 319.0 94.6 317.6 94.7 316.9 97.1 314.5 98.2 M322.9 156.7 321.1 155.5 320.5 154.1 317.6 154.0 314.9 152.4 314.2 151.4 M320.6 141.7 318.9 145.0 318.0 146.4 316.4 146.8 316.2 149.7 314.2 151.4 M315.0 76.2 314.8 77.7 M313.7 104.1 315.9 104.3 319.2 105.9 320.2 105.9 322.5 107.0 325.7 108.0 M314.1 277.5 317.9 275.0 319.8 275.5 320.8 273.7 M315.0 76.2 317.7 74.3 319.6 72.8 321.1 72.9 323.4 72.5 M316.5 197.1 317.5 198.9 318.3 199.2 320.6 200.7 322.0 202.5 323.3 203.5 M316.5 197.1 317.7 194.2 318.7 192.2 319.9 191.2 M315.8 258.8 317.0 261.7 317.2 265.1 317.5 266.7 M319.9 257.1 317.2 258.9 315.8 258.8 M317.4 215.9 317.0 213.6 M317.0 213.6 317.2 216.0 317.4 215.9 M323.3 203.5 321.0 207.0 320.6 208.5 318.7 210.1 318.4 213.1 317.0 213.6 M320.8 273.7 320.9 271.7 318.1 268.8 315.8 267.7 M317.5 266.7 315.8 267.7 M319.9 191.2 318.9 187.9 316.1 184.6 M328.2 179.2 325.0 179.3 324.2 179.0 321.5 178.8 319.3 181.3 318.5 183.6 316.1 184.6 M318.3 245.3 317.8 244.2 318.4 242.1 317.0 238.4 M319.1 237.7 317.0 238.4 M330.1 265.1 326.0 264.7 323.9 264.3 322.9 266.2 319.9 266.4 317.5 266.7 M318.3 245.7 319.5 246.3 322.7 247.1 324.6 247.0 325.4 248.4 328.2 248.8 330.7 248.6 M319.9 257.1 318.2 253.6 318.1 251.8 316.9 249.2 318.3 245.7 M322.0 63.4 321.8 64.1 317.3 63.8 M317.4 215.9 317.3 219.2 316.7 221.5 317.0 222.5 316.4 225.7 319.0 227.8 M319.1 237.7 317.9 236.7 317.6 233.9 318.0 230.8 317.7 229.3 319.0 227.8 M319.0 227.8 320.0 228.2 322.7 226.8 325.1 226.3 325.8 227.0 328.1 226.8 331.6 227.8 M328.4 236.2 326.7 236.2 323.9 237.8 322.3 238.0 321.6 237.4 319.1 237.7 M330.1 258.4 327.7 257.1 326.7 256.5 323.4 256.5 321.3 255.9 319.9 257.1 M319.9 191.2 321.2 189.9 324.4 189.8 327.1 189.3 327.9 189.2 M320.1 124.6 320.2 123.4 M325.7 108.0 324.2 110.8 324.1 111.7 322.9 114.2 322.5 117.2 321.6 118.1 320.7 120.2 320.2 123.4 M332.3 62.0 330.6 60.6 328.1 57.8 327.3 55.5 326.8 53.7 326.7 53.4 326.6 53.4 326.4 53.3 322.6 51.8 320.7 51.9 M320.7 51.9 320.9 55.3 319.8 56.9 320.9 57.9 320.6 60.9 322.0 63.4 M322.0 63.4 323.0 64.8 M320.7 125.1 323.3 126.7 323.8 129.0 324.4 130.3 327.5 132.5 329.2 135.0 328.8 135.9 330.8 137.1 M320.7 125.1 320.1 124.6 M320.1 124.6 323.2 124.7 326.0 124.5 327.3 122.6 329.2 122.2 331.9 123.0 333.4 122.6 334.5 122.6 M320.6 141.7 321.0 141.6 324.8 141.9 M324.8 141.9 320.6 141.7 M320.8 273.7 323.2 270.6 324.6 270.8 327.3 270.5 329.7 267.9 330.1 265.9 M321.7 167.8 322.6 164.0 M322.6 164.0 323.1 162.8 324.6 159.4 322.9 156.7 M321.7 167.8 323.1 170.2 327.2 171.3 328.1 173.1 M323.4 72.5 322.7 70.3 321.9 66.8 323.0 64.8 M323.0 64.8 324.1 65.2 326.2 63.5 328.9 62.9 330.3 62.5 332.2 62.1 M330.5 150.4 328.8 151.1 328.5 151.1 326.2 152.9 324.7 155.7 322.9 156.7 M323.4 72.5 325.4 73.1 M322.9 84.9 322.5 85.3 322.8 88.1 324.1 89.0 324.1 90.7 325.0 93.8 M325.4 73.1 324.8 74.4 324.4 77.9 323.7 80.5 323.0 81.8 322.9 84.9 M322.9 84.9 326.5 83.7 328.9 83.4 329.7 84.5 332.4 84.3 335.0 85.0 M323.3 203.5 327.3 204.0 M330.1 99.0 329.1 97.6 326.5 97.3 325.0 95.5 325.0 93.8 M330.8 137.1 329.1 137.3 326.7 140.3 326.3 142.3 324.8 141.9 M333.6 72.8 332.6 73.9 330.8 73.7 327.7 74.1 326.3 74.4 325.4 73.1 M326.3 105.6 325.7 108.0 M332.8 222.8 331.0 220.4 329.2 219.4 330.9 215.8 331.0 213.5 332.8 211.8 331.2 210.0 328.4 206.8 328.2 205.0 327.3 204.0 M327.3 204.0 328.6 203.1 330.1 199.5 330.7 197.7 M337.6 115.2 336.8 113.1 334.8 112.4 332.6 111.2 332.3 109.1 331.0 108.6 327.8 107.4 326.3 105.6 M326.3 105.6 327.7 104.7 328.2 102.8 329.1 99.8 330.1 99.0 M328.1 173.1 327.1 174.4 328.3 176.2 328.2 179.2 M328.1 173.1 329.3 171.5 331.2 169.0 334.4 168.4 336.0 168.3 335.8 165.1 336.5 162.6 M328.1 189.4 329.0 187.4 329.1 184.1 329.5 181.9 329.5 181.3 328.2 179.2 M339.2 179.1 337.8 177.7 334.6 177.9 332.4 177.9 331.2 177.8 328.2 179.2 M327.9 189.2 329.0 191.7 330.0 194.8 331.6 196.8 330.7 197.7 M328.1 189.4 327.9 189.2 M328.4 236.2 328.7 239.8 328.1 242.3 329.5 243.0 330.2 245.2 330.7 248.6 M330.9 234.0 330.3 235.8 328.4 236.2 M336.6 187.0 335.6 187.1 334.2 188.2 330.9 189.9 328.1 189.4 M330.1 265.9 330.1 265.1 M330.1 265.1 330.0 263.0 330.4 259.6 330.1 258.4 M330.7 248.6 331.1 249.5 331.1 249.8 M331.1 249.8 330.7 248.6 M330.1 99.0 332.5 98.0 M330.1 265.9 333.0 265.8 335.3 264.0 337.4 262.3 338.9 262.9 340.6 263.1 343.3 261.5 345.6 260.4 347.3 259.6 349.5 259.2 M330.1 258.4 333.2 258.2 334.1 259.2 336.9 258.3 340.1 258.2 M331.1 249.8 330.1 251.2 330.0 253.2 330.0 256.6 330.1 258.4 M330.9 234.0 331.6 231.1 331.7 229.2 331.6 227.8 M331.6 227.8 332.8 225.5 332.8 222.8 M335.4 144.3 333.2 140.7 334.2 139.2 332.9 138.1 330.8 137.1 M330.7 197.7 332.5 199.2 335.8 199.6 337.4 199.6 338.6 200.6 M338.6 200.6 338.3 200.6 337.0 199.4 333.5 199.5 330.7 197.7 M336.5 162.6 335.4 162.1 334.5 160.9 334.9 157.8 334.6 155.2 335.7 154.3 333.9 152.6 330.5 150.4 M330.5 150.4 332.4 146.8 333.1 145.9 335.4 144.3 M344.8 249.9 343.3 248.6 340.5 247.2 339.3 247.1 339.2 246.9 339.5 243.8 339.9 240.7 339.0 239.3 339.0 236.5 336.6 236.1 334.7 234.9 330.9 234.0 M332.8 222.8 335.0 222.6 338.7 223.5 M353.4 64.0 351.0 63.5 350.9 63.3 348.2 63.3 344.8 63.1 343.4 63.6 340.0 64.1 338.0 63.6 336.7 64.1 333.1 62.7 332.3 62.0 M332.2 62.1 332.7 63.8 334.6 67.4 334.1 70.4 334.6 71.3 333.6 72.8 M332.5 98.0 335.4 98.5 336.4 100.4 338.4 100.8 341.8 101.9 342.8 103.4 344.4 103.6 M337.1 87.1 335.6 88.5 335.7 91.8 334.0 93.6 334.1 94.7 332.5 98.0 M333.6 72.8 334.4 75.9 334.6 77.9 335.0 79.0 335.8 81.6 335.0 85.0 M335.0 85.0 336.6 86.6 M345.9 143.2 342.7 144.7 339.6 143.7 338.7 144.5 335.4 144.3 M334.5 122.6 335.8 125.0 337.9 125.8 337.9 127.1 338.5 130.2 338.5 133.3 340.0 133.7 M334.5 122.6 336.5 119.2 338.3 118.3 M336.5 162.6 338.1 163.7 339.5 162.5 343.9 161.8 M337.1 87.1 336.6 86.6 M336.6 86.6 338.4 85.2 341.3 83.7 343.4 83.0 343.6 82.2 345.3 80.8 348.4 79.4 M347.1 92.4 346.0 92.0 343.3 90.6 340.7 89.5 340.2 88.9 337.1 87.1 M340.6 188.4 336.6 187.0 M339.4 179.9 337.9 182.2 337.4 185.9 336.6 187.0 M337.6 115.2 338.3 118.3 M344.4 103.6 342.4 105.3 342.1 106.5 340.3 109.7 339.8 111.8 338.5 112.6 337.6 115.2 M338.7 223.5 341.2 224.3 341.6 225.1 344.1 226.8 346.3 227.0 347.2 228.7 M338.7 223.5 338.9 220.9 340.5 218.6 341.3 218.0 342.1 215.7 343.7 212.6 343.9 211.6 346.4 212.6 M338.3 118.3 342.0 118.1 343.1 119.5 345.9 119.0 348.9 119.8 M339.2 179.1 339.4 179.9 M348.7 169.3 347.0 170.5 343.5 171.8 341.1 173.1 340.4 172.9 339.5 176.4 339.2 179.1 M338.6 200.6 341.7 196.2 M341.7 196.2 340.8 195.4 340.0 192.6 340.6 188.4 M340.6 188.4 341.9 188.6 342.4 188.8 345.0 187.4 348.6 186.2 M348.8 182.4 345.8 181.8 345.0 181.7 342.4 180.0 339.4 179.9 M342.4 255.9 342.1 257.0 340.2 258.3 340.1 258.2 M340.1 258.2 342.1 256.9 342.4 255.9 M345.9 143.2 344.2 141.5 341.9 138.3 342.6 135.5 341.7 134.6 340.0 133.7 M340.0 133.7 343.3 131.9 344.6 130.6 345.1 130.7 347.5 130.4 350.7 130.2 M349.8 196.6 346.1 197.6 344.6 196.9 341.7 196.2 M343.9 161.8 344.4 164.2 345.5 166.1 347.4 168.3 348.7 169.3 M343.9 161.8 345.1 159.9 346.1 159.1 347.8 156.0 348.3 154.9 M342.4 255.9 345.6 257.1 348.3 258.8 349.5 259.2 M342.4 255.9 343.7 253.0 343.7 250.6 344.8 249.9 M346.3 247.9 344.8 249.9 M344.4 103.6 347.3 102.6 348.7 101.9 M349.2 143.9 347.1 143.6 345.9 143.2 M354.4 250.6 352.1 249.1 350.2 249.4 346.3 247.9 M346.3 247.9 346.5 244.7 348.0 243.8 348.0 241.8 349.7 238.7 349.7 237.8 M351.7 222.8 350.6 220.7 350.0 217.1 350.0 214.7 347.3 214.1 346.4 212.6 M346.4 212.6 348.2 210.4 349.3 208.0 351.8 207.5 354.3 206.8 M348.6 186.2 348.1 190.0 349.0 191.4 349.9 192.7 349.8 196.6 M348.6 186.2 348.0 183.8 348.8 182.4 M348.4 79.4 349.9 81.2 350.0 83.4 351.9 86.4 M348.4 79.4 347.2 78.1 347.9 76.5 347.6 73.2 M348.7 101.9 350.6 99.7 349.3 96.9 348.8 94.0 347.1 92.4 M351.9 86.4 350.1 87.1 349.5 88.4 348.3 91.3 347.1 92.4 M349.3 121.8 348.9 119.8 M348.9 119.8 349.6 117.0 350.4 116.2 351.3 113.6 351.8 110.8 353.0 109.9 353.2 107.3 M350.4 181.6 348.8 182.4 M347.2 228.7 347.3 230.0 346.8 233.7 350.1 235.8 349.7 237.8 M347.2 228.7 350.2 226.1 M348.3 72.7 348.1 72.6 347.6 73.2 M347.6 73.2 348.3 72.7 M353.2 107.3 351.5 104.8 349.6 102.7 348.7 101.9 M348.3 154.9 349.8 157.4 352.2 158.9 352.8 160.3 353.5 162.8 356.5 164.1 M350.8 151.9 349.7 154.2 348.3 154.9 M349.5 169.6 348.7 169.3 M350.8 151.9 350.9 148.6 351.5 146.7 349.9 145.8 349.2 143.9 M355.5 139.6 353.8 140.3 351.3 140.7 349.2 143.9 M351.0 199.7 349.8 196.6 M348.3 72.7 350.1 71.7 350.3 70.1 351.8 66.8 352.5 65.3 353.4 64.0 M355.4 182.1 352.1 181.0 350.4 181.6 M350.4 181.6 349.6 178.3 350.2 177.0 349.1 175.1 350.0 171.6 349.5 169.6 M349.5 259.2 352.4 258.9 354.7 256.4 356.6 256.2 M350.7 130.2 351.1 132.2 352.4 132.8 M350.7 130.2 350.8 127.1 350.0 124.5 350.4 123.6 349.3 121.8 M350.2 226.1 353.0 226.0 353.7 227.3 355.0 227.9 357.9 228.0 359.2 229.5 360.2 229.8 363.3 230.2 M350.2 226.1 350.6 223.7 351.7 222.8 M360.8 120.0 358.0 120.0 356.6 119.6 355.6 120.2 352.7 120.4 349.3 121.8 M349.5 169.6 350.1 169.9 M349.7 237.8 352.7 238.9 355.3 239.1 356.3 240.6 359.8 240.3 360.2 240.2 M351.0 199.7 351.2 200.8 351.6 201.4 352.2 203.5 354.3 206.8 M361.2 196.5 359.2 196.4 358.4 196.8 355.7 196.6 352.7 197.9 351.0 199.7 M350.1 169.9 353.4 171.5 355.5 171.7 356.8 173.5 360.1 174.2 361.1 175.1 M356.5 164.1 354.6 165.0 353.0 166.6 352.2 169.2 350.1 169.9 M356.8 151.3 354.6 150.4 350.8 151.9 M357.9 85.2 356.3 85.2 355.2 85.6 351.9 86.4 M363.3 230.2 366.4 230.0 364.3 227.5 362.9 224.3 363.0 222.3 362.3 221.2 361.9 219.1 357.9 219.2 356.4 219.9 355.5 220.9 351.7 222.8 M353.2 107.3 354.1 107.1 357.0 108.7 359.7 108.7 360.9 110.0 M352.4 132.8 354.5 133.6 354.7 136.0 355.5 139.6 M352.4 132.8 355.0 131.7 358.1 130.2 359.0 129.1 359.6 128.5 362.1 127.6 364.7 126.1 M354.3 206.8 355.7 207.4 358.0 207.0 361.4 208.1 M364.4 64.2 360.9 63.2 358.5 64.2 357.1 63.8 353.4 64.0 M356.5 254.8 355.8 253.0 354.4 250.6 M360.2 240.2 359.7 241.8 357.5 243.6 357.1 247.3 354.8 248.5 354.4 250.6 M355.5 139.6 357.1 139.9 360.0 138.2 362.1 138.1 364.1 137.5 M359.5 189.2 357.8 188.3 356.5 186.2 357.0 184.4 355.4 182.1 M361.1 175.1 359.7 176.6 359.2 179.6 356.7 180.8 355.4 182.1 M358.7 162.3 356.5 164.1 M356.5 254.8 356.6 256.2 M367.5 245.1 365.3 245.0 364.3 246.2 362.1 249.3 359.8 250.8 359.1 251.2 357.2 253.0 356.5 254.8 M356.6 256.2 357.0 256.3 357.2 256.5 360.0 257.1 362.4 256.0 363.0 255.9 364.8 255.0 M358.7 162.3 359.2 159.1 358.0 158.0 357.1 156.8 357.0 153.8 356.8 151.3 M365.9 150.0 364.3 150.5 361.1 149.2 358.9 151.1 356.8 151.3 M363.9 169.6 363.3 167.8 361.7 166.5 359.7 165.2 358.7 162.3 M358.7 162.3 360.1 160.9 361.9 160.5 363.6 159.1 366.8 157.2 368.9 156.5 M357.9 85.2 359.6 88.2 359.7 90.1 360.5 91.4 359.2 94.6 361.2 95.9 364.5 96.2 365.6 98.1 M362.8 82.5 360.4 83.6 357.9 85.2 M361.2 196.5 361.1 192.4 360.6 190.3 359.5 189.2 M359.5 189.2 361.5 188.1 363.0 185.7 364.6 185.2 M361.4 208.1 360.6 210.8 360.7 212.3 361.8 213.4 362.6 216.2 364.7 215.7 366.9 216.2 371.1 217.2 M361.4 208.1 361.7 206.1 M367.5 245.1 364.5 243.2 362.0 242.3 360.4 239.8 M360.4 239.8 362.0 236.4 361.8 235.3 363.4 233.5 363.3 230.2 M363.1 123.2 362.7 121.5 360.8 120.0 M360.9 110.0 362.1 111.2 362.0 114.2 361.3 115.3 361.9 116.8 360.8 120.0 M361.1 175.1 361.8 175.7 M361.7 206.1 362.8 206.3 366.3 207.7 368.9 207.1 370.2 207.5 373.6 206.9 372.3 204.5 372.5 203.5 372.2 200.9 M364.9 198.3 364.9 199.3 363.3 201.9 363.3 205.1 361.7 206.1 M370.1 88.1 369.3 87.8 368.1 86.0 365.4 85.1 364.4 84.5 362.8 82.5 M362.8 82.5 362.5 77.6 M360.9 110.0 362.1 108.1 362.4 107.1 363.2 104.0 363.9 101.7 364.5 100.9 365.6 98.1 M361.8 175.7 363.1 176.7 365.5 177.1 366.4 179.0 367.6 179.1 371.0 179.6 372.8 181.4 373.7 182.0 376.3 183.0 M361.8 175.7 362.0 174.4 363.4 171.1 363.9 169.6 M364.9 198.3 361.2 196.5 M364.4 64.2 362.9 67.4 363.0 69.5 361.4 70.5 361.5 73.7 359.8 76.0 362.5 77.5 362.5 77.6 M362.5 77.6 365.3 78.1 366.4 77.7 368.6 74.8 371.5 74.5 372.9 71.8 M369.0 65.3 366.8 64.3 364.4 64.2 M364.7 126.1 364.5 125.7 363.1 123.2 M375.8 118.1 373.7 119.8 371.1 120.2 369.3 119.7 368.2 121.4 366.3 123.6 363.1 123.2 M366.4 127.1 364.7 126.1 M364.1 137.5 367.1 139.5 368.5 140.0 369.7 141.4 M366.4 127.1 365.4 130.0 365.4 131.2 364.6 132.2 363.8 134.9 364.1 137.5 M372.0 166.4 370.5 167.8 366.3 168.9 363.9 169.6 M372.2 200.9 371.3 198.8 368.7 198.2 366.7 196.6 364.9 198.3 M364.6 185.2 364.7 185.3 366.3 186.8 368.5 188.0 369.5 190.8 M369.5 190.8 368.4 188.0 366.0 186.8 364.6 185.2 M373.7 128.6 372.6 127.8 369.4 127.9 367.4 126.7 366.4 127.1 M365.6 98.1 367.2 96.2 370.9 96.0 373.4 96.7 M364.8 255.0 368.0 254.3 370.6 255.7 373.2 254.8 373.5 254.8 M364.8 255.0 365.7 253.5 365.1 252.2 366.5 248.8 366.3 246.5 367.7 245.2 M365.9 150.0 368.4 153.2 368.9 155.7 M369.7 141.4 369.7 142.0 368.0 144.4 367.8 147.1 366.5 147.8 365.9 150.0 M374.6 245.6 372.0 243.1 368.9 244.3 367.7 245.2 M368.9 156.5 368.2 158.0 368.8 160.5 371.2 163.5 371.4 165.3 372.0 166.4 M368.9 156.5 368.9 155.7 M372.9 71.8 370.2 68.0 370.4 66.5 369.0 65.3 M388.9 60.1 388.7 60.2 388.5 60.3 386.6 62.2 386.4 65.1 385.0 64.2 381.2 64.4 379.0 63.6 377.6 63.5 374.3 64.9 371.9 64.8 371.3 65.4 369.0 65.3 M368.9 155.7 370.3 154.3 373.8 153.9 376.9 153.0 M369.5 190.8 371.9 188.8 375.9 189.4 M371.1 217.2 371.1 217.6 372.0 219.2 374.7 221.2 M371.1 217.2 372.1 214.8 373.0 211.6 374.4 210.8 374.7 209.1 376.0 209.6 379.6 208.6 381.8 209.2 M369.7 141.4 375.1 139.7 M373.4 96.7 372.6 92.8 372.2 89.5 370.1 88.1 M380.9 80.7 379.1 80.2 378.5 81.4 376.0 82.2 373.3 83.0 372.5 84.9 370.1 88.1 M386.3 73.5 382.7 72.5 382.1 70.2 378.3 70.8 376.3 69.5 375.7 70.3 372.9 71.8 M372.3 166.4 372.1 168.7 373.1 171.7 374.8 173.6 375.9 174.6 378.3 175.7 M380.4 162.9 379.6 164.8 376.9 166.8 373.8 166.1 372.3 166.4 M373.4 96.7 373.9 96.6 375.1 98.0 377.3 99.9 M378.9 197.6 375.1 198.0 372.2 200.9 M373.7 128.6 373.8 130.7 375.6 132.6 377.8 134.6 M376.0 122.8 375.7 124.7 373.8 127.9 373.7 128.6 M373.5 254.8 376.7 255.5 377.6 254.7 379.9 254.5 383.0 255.1 383.2 255.0 383.4 254.7 M374.6 245.6 373.1 248.5 373.5 249.4 372.5 251.4 373.5 254.8 M380.4 145.3 377.2 144.6 374.9 141.9 375.1 139.7 M375.1 139.7 375.7 136.5 377.8 134.6 M374.7 221.2 373.7 225.1 374.0 226.8 373.1 229.2 374.1 230.8 M384.9 217.0 382.6 218.1 379.1 220.4 377.4 220.5 376.9 220.1 374.7 221.2 M382.3 246.5 381.1 245.5 379.3 245.8 375.9 244.9 374.6 245.6 M374.1 230.8 374.6 234.6 377.5 235.2 378.4 235.4 380.3 236.8 383.5 236.7 M374.1 230.8 375.4 229.6 377.8 229.3 380.7 228.6 382.0 227.4 382.3 226.2 384.6 225.2 M376.1 113.7 373.9 112.8 373.7 112.9 M373.7 112.9 376.1 113.7 M377.3 99.9 377.4 101.2 376.0 104.3 376.3 106.5 374.8 107.3 374.7 109.7 373.9 112.7 373.7 112.9 M375.9 189.4 376.1 190.7 M375.9 189.4 376.2 186.7 376.3 183.0 M376.0 122.8 377.1 121.2 375.8 118.1 M375.8 118.1 376.7 114.8 376.1 113.7 M376.9 153.0 377.2 153.9 378.4 156.1 380.8 157.2 M376.9 153.0 376.9 151.9 378.6 149.5 378.6 146.3 380.4 145.3 M376.3 183.0 378.5 183.2 379.1 182.2 379.9 178.0 378.3 175.7 M376.1 113.7 378.7 114.7 379.8 113.9 383.0 112.8 386.4 112.9 385.9 114.3 386.9 116.4 389.9 119.3 390.8 120.6 390.4 121.3 M384.9 101.5 384.0 101.7 380.9 101.1 378.3 100.1 377.3 99.9 M377.8 134.6 378.3 134.1 380.1 132.9 383.7 132.6 385.9 133.8 387.1 132.6 M388.1 126.9 386.9 126.4 383.7 125.0 381.9 125.1 381.1 124.0 378.3 122.9 376.0 122.8 M376.1 190.7 377.4 191.9 377.6 194.9 378.9 197.6 M384.4 188.5 383.1 190.8 379.8 190.7 376.1 190.7 M385.3 201.2 382.2 199.5 380.2 199.3 378.9 197.6 M378.3 175.7 381.4 175.6 382.4 173.0 383.2 171.2 385.1 171.7 M390.7 137.1 390.0 138.1 387.7 140.6 386.6 141.4 383.6 142.9 382.3 146.3 380.4 145.3 M380.4 162.9 380.4 161.5 381.6 160.1 380.8 157.2 M380.8 157.2 383.1 155.4 384.1 156.1 385.8 154.7 389.6 151.8 391.3 152.7 M385.2 165.8 382.8 165.0 380.4 162.9 M381.8 209.2 381.5 212.4 383.6 214.7 384.5 216.3 384.9 217.0 M382.8 207.9 381.8 209.2 M390.0 89.6 388.1 88.8 384.4 88.1 384.0 85.3 384.0 82.8 380.9 80.7 M380.9 80.7 382.6 79.9 383.6 78.2 384.6 75.0 386.3 73.5 M383.4 254.7 384.2 254.0 383.2 251.9 382.5 248.6 382.3 246.5 M384.3 246.4 382.3 246.5 M383.5 236.7 384.8 238.0 M384.6 225.2 384.7 227.3 384.5 230.5 384.2 231.7 384.2 233.4 383.5 236.7 M383.4 254.7 384.6 254.6 387.8 255.3 391.1 253.2 393.3 255.6 M382.8 207.9 384.7 206.9 388.3 207.1 389.9 206.6 391.7 206.1 M385.3 201.2 384.2 202.3 384.4 204.7 382.8 207.9 M384.9 217.0 384.9 220.0 384.7 222.9 387.4 224.5 M385.1 171.7 384.5 169.0 385.2 165.8 M392.4 160.9 389.6 163.6 386.9 165.2 386.4 164.6 385.2 165.8 M386.4 198.2 385.3 201.2 M387.3 196.1 387.5 195.3 385.3 192.4 384.4 188.5 M384.4 188.5 385.1 186.8 M384.3 246.4 384.5 242.6 383.8 240.0 384.8 238.0 M384.8 238.0 385.8 236.6 389.7 234.6 M393.9 245.5 390.8 246.1 388.2 246.2 387.2 245.7 384.3 246.4 M384.6 225.2 387.4 224.5 M385.1 171.7 388.6 173.1 M387.4 73.5 386.3 73.5 M389.6 105.4 389.0 105.4 387.7 104.4 384.9 101.5 M390.7 95.0 388.0 97.9 387.2 98.4 384.9 101.5 M385.1 186.8 385.4 186.9 389.6 187.9 391.8 186.3 M391.8 186.3 389.4 187.9 385.1 186.8 M396.8 79.4 394.0 78.9 393.4 78.0 391.8 76.3 389.4 76.1 388.9 74.9 387.4 73.5 M387.4 73.5 388.4 72.3 390.5 69.9 390.7 69.2 392.4 67.8 M392.6 201.5 389.4 199.8 386.4 198.2 M387.3 196.1 386.4 198.2 M387.4 224.5 389.7 226.5 M387.1 132.6 389.2 134.9 390.7 137.1 M387.1 132.6 386.8 129.5 388.2 128.0 388.1 126.9 M395.5 192.1 392.0 194.8 389.4 195.8 387.3 196.1 M391.8 186.3 391.7 183.4 393.4 182.5 393.5 181.0 392.1 179.6 389.8 178.2 389.1 175.6 388.6 173.1 M388.6 173.1 390.6 173.2 392.1 172.3 394.6 169.8 397.7 169.9 M390.4 121.3 390.0 122.9 388.1 126.9 M400.9 60.1 401.0 59.6 401.1 59.3 401.0 59.4 401.2 59.2 401.1 59.2 400.9 59.4 398.4 60.2 395.1 60.0 394.2 61.3 392.3 60.8 389.2 60.1 388.9 60.1 M392.4 67.8 392.2 64.9 390.4 61.4 388.9 60.1 M389.7 234.6 389.1 233.9 388.3 232.2 388.9 229.3 388.4 227.5 389.7 226.5 M389.7 226.5 391.4 225.7 394.9 225.0 396.3 224.5 M389.7 234.6 391.9 235.6 392.6 236.7 395.4 236.8 M395.6 85.2 393.0 86.0 390.5 88.2 390.0 89.7 390.0 89.6 M390.0 89.6 389.0 91.7 390.7 95.0 M399.5 114.2 397.5 112.9 395.4 111.2 395.3 108.9 393.5 108.3 390.2 107.1 389.6 105.4 M389.6 105.4 391.6 106.0 394.4 104.4 396.6 102.3 398.2 103.0 400.6 102.8 M399.6 98.7 399.0 97.1 396.2 96.8 394.2 96.3 393.6 94.9 390.7 95.0 M390.7 137.1 391.1 137.2 M391.3 152.7 390.0 155.8 390.8 158.7 390.7 159.7 392.4 160.9 M392.0 152.8 391.3 152.7 M391.8 186.3 392.0 189.0 393.9 190.9 396.1 191.4 M390.4 121.3 394.0 122.1 397.6 120.2 M391.1 137.2 392.3 138.1 M391.1 137.2 392.6 136.6 396.5 135.7 398.8 133.7 399.2 133.2 401.7 133.6 M392.4 160.9 394.5 162.7 396.1 163.3 M392.6 201.5 391.1 204.5 391.7 206.1 M397.1 200.7 393.8 200.1 392.6 201.5 M391.7 206.1 395.2 208.8 M392.3 138.1 395.1 139.7 396.1 140.4 397.0 140.8 400.0 142.6 401.6 142.8 M392.0 152.8 392.4 150.9 393.4 147.5 392.8 145.4 393.4 144.1 392.0 141.1 392.3 138.1 M398.2 152.6 397.0 153.0 394.0 152.4 392.0 152.8 M392.4 67.8 395.1 67.0 398.2 67.3 M394.0 248.9 393.9 245.5 M395.4 236.8 395.2 238.5 394.8 242.1 394.5 243.7 393.9 245.5 M393.3 255.6 393.2 256.0 393.6 255.9 397.2 254.5 398.4 255.2 400.1 255.2 403.3 255.8 404.6 256.9 404.6 256.8 M394.0 248.9 394.2 251.9 392.9 252.8 393.3 255.6 M395.5 192.1 394.6 195.0 395.9 199.0 397.1 200.7 M396.1 191.4 395.5 192.1 M402.3 94.1 402.3 92.1 399.5 89.3 397.0 88.3 397.4 86.9 395.6 85.2 M395.6 85.2 396.0 83.4 397.8 80.2 M395.2 208.8 395.4 212.8 M399.5 201.9 398.3 203.4 397.2 206.2 397.0 207.4 395.2 208.8 M401.6 248.3 400.0 247.3 396.5 247.3 394.0 248.9 M395.4 236.8 398.2 237.1 M398.3 191.2 396.1 191.4 M395.4 212.8 394.7 213.6 395.2 214.8 397.2 217.4 397.6 220.8 398.3 222.8 M395.4 212.8 397.5 212.7 400.6 212.3 401.8 211.0 402.6 211.8 405.5 212.3 M397.7 169.9 396.8 167.3 396.1 163.3 M396.1 163.3 398.5 162.6 401.3 161.7 M404.3 127.9 402.7 126.1 401.6 124.6 399.0 123.9 397.6 121.8 397.6 120.2 M397.6 120.2 397.6 117.5 399.3 116.7 399.5 114.2 M397.9 228.4 396.3 224.5 M396.3 224.5 398.3 222.8 M396.8 79.4 397.8 80.2 M401.3 73.3 399.5 74.0 399.1 76.7 397.7 78.8 396.8 79.4 M398.2 67.3 397.8 69.5 398.4 71.2 401.3 73.3 M400.9 60.1 400.7 63.7 398.7 65.2 398.2 67.3 M397.8 80.2 399.8 81.4 400.5 81.3 403.3 82.1 405.8 83.4 M397.7 169.9 399.1 171.6 401.1 172.8 M397.1 200.7 399.5 201.9 M398.2 237.1 399.2 238.1 401.7 238.7 404.3 240.4 M398.2 237.1 397.5 234.0 398.3 231.4 397.7 230.5 397.9 228.4 M398.3 222.8 399.6 221.6 402.5 220.6 405.4 219.3 406.8 219.8 407.0 219.6 M408.6 229.1 407.1 229.5 403.8 228.9 402.1 228.6 401.1 229.3 397.9 228.4 M401.6 142.8 401.6 146.0 399.9 148.5 399.9 149.5 398.2 152.6 M408.5 153.5 405.5 152.0 404.2 152.5 400.6 152.1 398.2 152.7 M401.3 161.7 400.7 158.2 399.1 156.0 399.1 154.9 398.2 152.7 M399.5 114.2 400.8 112.3 402.2 112.4 403.1 110.5 M398.3 191.2 400.8 192.5 402.6 194.0 402.7 195.9 403.9 196.5 406.3 197.2 M401.8 186.3 400.4 187.7 398.3 191.2 M406.2 198.9 402.5 202.8 399.5 201.9 M399.6 98.7 400.6 102.8 M402.3 94.1 401.1 96.8 399.6 98.7 M401.3 73.3 403.4 73.2 404.4 72.2 M401.3 161.7 403.8 161.5 M408.0 178.5 406.2 176.6 403.7 175.6 403.3 174.8 401.1 172.8 M401.1 172.8 399.0 176.3 398.3 178.1 396.3 179.8 399.2 181.6 400.3 184.8 401.8 186.3 M400.6 102.8 402.6 103.6 403.4 105.3 404.0 106.3 M405.3 250.2 402.5 248.5 401.6 248.3 M401.6 248.3 401.8 246.6 403.0 243.2 403.5 241.7 404.3 240.4 M423.6 61.3 422.0 61.8 420.7 61.0 416.6 60.6 416.1 59.3 417.1 58.1 417.1 57.9 417.0 57.8 416.9 57.5 416.8 57.4 416.7 57.2 414.1 56.5 411.2 56.7 411.0 56.6 410.8 56.5 410.7 56.6 410.4 56.7 409.5 59.4 409.9 62.4 408.3 62.0 406.9 61.1 404.3 62.0 401.6 62.5 400.9 60.1 M403.1 143.0 402.8 142.8 401.6 142.8 M401.6 142.8 403.1 143.0 M405.9 184.9 401.8 186.3 M404.3 138.8 405.1 135.9 403.7 135.2 401.7 133.6 M401.7 133.6 402.6 130.6 402.8 128.7 404.3 127.9 M410.4 90.6 408.6 92.2 406.4 91.6 404.4 91.7 402.3 94.1 M404.3 240.4 405.4 237.3 405.6 235.2 407.2 234.4 407.2 231.8 408.6 229.1 M404.3 138.8 403.2 142.8 403.1 143.0 M403.1 143.0 404.4 141.8 404.3 138.8 M403.1 110.5 406.4 111.7 408.1 114.0 408.9 114.8 411.3 115.9 M404.0 106.3 403.1 110.5 M403.8 161.5 406.5 165.5 407.5 166.9 411.4 168.7 M410.1 154.1 409.3 156.6 407.1 159.4 405.6 159.6 403.8 161.5 M404.3 127.9 407.4 126.6 408.1 123.2 409.2 122.0 409.7 120.1 410.9 116.8 411.3 115.9 M404.0 106.3 406.0 105.8 409.6 105.1 411.5 103.6 411.9 101.9 413.6 100.1 413.8 96.4 M411.0 191.2 410.1 189.8 407.6 187.6 406.1 186.8 405.9 184.9 M408.0 178.5 407.9 181.8 406.0 182.6 405.9 184.9 M405.8 83.4 406.2 83.7 406.7 85.2 409.2 87.7 410.7 89.5 M408.3 76.9 408.1 77.9 406.5 81.4 405.8 83.4 M406.2 198.9 406.5 201.4 406.9 203.3 409.8 204.3 411.8 206.4 412.0 207.8 M406.3 197.2 406.2 198.9 M404.6 256.8 406.1 253.3 405.3 250.2 M414.0 246.8 410.8 247.2 408.9 248.6 407.4 250.4 405.3 250.2 M404.6 256.8 406.9 256.3 410.4 257.1 411.6 256.0 414.8 256.6 M404.4 72.2 408.4 75.7 408.3 76.9 M415.2 68.0 413.2 67.2 413.0 65.2 410.9 64.7 408.7 67.9 407.5 69.6 406.2 69.9 404.4 72.2 M404.3 138.8 407.8 138.4 411.1 138.1 412.1 139.0 413.9 137.7 M408.1 198.1 406.3 197.2 M407.0 219.6 406.7 216.1 407.5 213.2 405.5 212.3 M405.5 212.3 409.0 211.1 410.2 209.4 411.4 208.3 M407.0 219.6 409.9 219.1 412.4 217.9 413.6 218.2 M409.7 176.8 408.0 178.5 M415.5 201.0 413.6 200.9 412.5 199.5 409.3 198.4 408.1 198.1 M408.1 198.1 409.2 195.0 410.1 192.5 411.0 191.2 M409.7 229.7 409.3 229.0 408.6 229.1 M408.5 153.5 410.1 154.1 M414.7 144.2 410.5 146.7 408.5 146.2 407.7 149.1 408.1 152.2 408.5 153.5 M408.3 76.9 410.4 78.1 414.1 77.5 415.9 76.8 M411.1 154.7 410.1 154.1 M410.7 89.5 410.8 89.3 411.1 87.0 413.4 87.5 416.1 86.4 M410.7 89.5 410.4 90.6 M413.8 96.4 414.3 95.5 412.1 94.3 409.9 92.4 410.4 90.6 M409.7 229.7 411.1 231.3 412.8 232.3 413.8 234.3 414.7 237.2 416.3 238.8 M417.4 225.8 416.5 225.7 413.7 228.0 411.3 230.1 409.7 229.7 M409.7 176.8 412.1 178.0 414.6 179.1 415.1 179.2 M411.4 169.4 411.3 170.4 410.8 173.4 410.0 175.9 409.7 176.8 M411.4 168.7 411.4 169.4 M411.4 168.7 412.7 165.8 414.5 163.3 M419.3 173.9 418.1 172.2 416.4 172.1 413.2 170.9 412.1 169.5 411.4 169.4 M411.3 115.9 414.1 116.4 M412.1 189.1 411.0 191.2 M414.5 163.3 414.3 162.6 412.8 160.6 412.2 157.1 411.1 154.7 M411.1 154.7 413.5 155.5 416.7 154.0 418.5 151.8 419.4 151.9 M411.4 208.3 412.0 207.8 M412.0 207.8 412.7 205.0 414.6 201.9 415.5 201.0 M411.4 208.3 414.5 208.8 416.3 210.7 417.6 211.2 420.7 212.3 M418.7 194.8 417.4 193.3 415.7 191.8 412.1 189.1 M412.1 189.1 414.7 186.3 416.2 185.2 415.8 181.4 415.1 179.2 M412.4 242.5 413.9 245.7 414.0 246.8 M414.0 246.8 414.0 245.8 412.4 242.9 412.4 242.5 M416.3 238.8 415.0 240.1 412.4 242.5 M416.5 249.9 414.6 247.4 414.0 246.8 M420.6 151.5 419.9 149.4 416.3 148.5 414.9 146.8 414.7 144.2 M413.9 137.7 414.5 140.1 414.2 141.1 414.7 144.2 M414.1 116.4 414.3 117.4 417.2 119.2 418.9 120.5 418.7 121.1 M414.1 116.4 414.7 112.5 416.7 111.3 418.0 109.8 418.3 109.9 M418.3 109.9 416.9 111.4 414.7 112.5 414.1 116.4 M414.5 163.3 418.0 165.1 420.0 165.5 420.2 167.4 423.0 168.9 M419.2 97.7 415.6 96.9 413.8 96.4 M415.6 134.9 413.9 137.7 M413.6 218.2 415.8 220.8 416.9 223.7 417.4 225.8 M420.7 212.3 417.6 214.9 416.3 217.1 413.6 218.2 M414.8 256.6 417.5 256.5 418.4 256.6 420.7 258.1 424.3 257.9 425.6 257.7 M416.5 249.9 415.5 253.4 415.7 255.2 414.8 256.6 M415.9 76.8 415.8 73.7 416.3 72.6 416.1 71.0 415.2 68.0 M423.9 65.3 420.8 67.0 419.9 67.9 418.8 66.8 415.2 68.0 M415.9 76.8 417.1 80.4 417.4 81.8 416.1 83.1 416.1 86.4 M416.1 86.4 418.5 86.8 418.8 88.6 420.5 90.0 422.9 90.4 423.5 92.2 M417.7 135.0 415.6 134.9 M418.7 121.1 417.1 123.5 416.8 125.6 414.6 125.1 411.3 125.6 409.8 128.4 411.9 130.2 413.2 132.3 414.1 133.9 415.6 134.9 M415.1 179.2 418.5 178.1 M418.0 200.9 415.5 201.0 M416.3 238.8 419.2 237.0 420.4 236.5 421.8 235.9 M421.3 250.4 420.1 249.3 416.5 249.9 M417.7 135.0 418.1 135.1 418.4 137.0 419.3 137.7 422.5 139.3 424.3 141.5 424.5 142.4 M424.5 142.4 424.2 142.6 424.2 141.6 422.2 139.2 419.0 137.8 418.3 137.0 417.7 135.0 M417.4 225.8 418.7 226.5 M418.0 200.9 420.6 202.8 420.7 203.1 M420.7 203.1 419.8 202.5 418.0 200.9 M418.0 200.9 418.9 197.6 418.2 195.9 418.7 194.8 M419.2 97.7 419.1 98.7 419.7 101.2 418.4 103.8 418.8 105.1 419.1 106.8 419.5 110.0 M420.6 97.5 419.2 97.7 M419.5 110.0 418.3 109.9 M418.5 178.1 422.1 178.0 423.2 178.9 426.4 179.3 M418.5 178.1 418.7 175.1 419.3 173.9 M424.0 191.0 423.1 191.9 421.7 194.0 418.7 194.8 M421.8 235.9 421.0 235.3 421.9 233.0 420.9 229.5 420.2 227.2 418.7 226.5 M418.7 226.5 421.3 225.2 424.7 223.4 425.5 222.5 M425.3 106.1 425.5 103.1 424.7 101.5 421.4 100.3 420.4 98.3 420.6 97.5 M424.3 93.1 422.9 93.3 421.4 95.5 420.6 97.5 M418.7 121.1 420.1 121.3 M419.5 110.0 422.1 109.1 423.0 108.8 M423.0 108.8 422.9 108.7 422.0 109.2 419.5 110.0 M423.0 168.9 420.4 172.4 419.3 173.9 M428.3 161.6 424.2 161.1 422.7 159.0 420.9 157.3 420.1 154.3 419.4 151.9 M419.4 151.9 420.6 151.5 M425.5 222.5 425.1 221.4 423.8 219.0 421.4 216.8 421.2 214.7 421.0 212.2 M421.0 212.2 421.9 212.4 423.5 210.7 M421.1 78.4 421.4 80.6 424.3 81.1 M424.3 81.1 421.4 80.8 421.0 78.8 421.1 78.4 M421.1 78.4 422.5 76.8 422.7 76.7 424.4 74.6 424.7 71.7 426.3 70.7 M428.3 131.8 427.5 131.9 424.7 130.8 422.2 130.0 421.7 129.3 422.7 127.7 421.0 124.2 420.1 121.3 M420.1 121.3 424.1 121.7 M420.6 151.5 421.3 151.5 424.1 151.5 426.6 153.0 427.4 153.2 430.3 153.7 432.6 154.8 M423.5 210.7 423.1 207.2 421.4 204.9 420.7 203.1 M426.6 252.3 423.8 251.7 421.3 250.4 M421.3 250.4 423.2 248.4 423.4 245.5 425.4 244.6 M421.8 235.9 424.2 237.0 424.4 239.7 424.7 242.9 425.4 244.6 M424.2 235.6 421.8 235.9 M423.0 168.9 426.2 169.5 M423.5 210.7 424.6 209.4 426.3 208.0 428.2 208.4 431.3 206.9 432.5 203.9 M424.1 121.7 425.6 121.8 428.4 123.6 431.5 123.7 429.9 125.3 429.9 126.5 428.7 129.6 428.3 131.8 M424.1 121.7 424.5 118.6 425.0 116.4 424.6 115.6 425.6 113.2 428.7 112.4 429.7 113.3 433.2 113.1 435.3 113.8 435.4 113.9 M423.9 65.3 425.8 68.4 426.7 69.8 M423.6 61.3 424.2 62.4 423.9 65.3 M423.0 108.8 425.0 108.1 425.3 106.1 M423.5 92.2 424.3 93.1 M424.3 81.1 425.5 84.1 424.7 85.5 424.9 88.7 423.5 92.2 M424.2 235.6 425.4 232.9 424.9 229.8 426.1 228.8 425.7 225.8 427.0 222.9 M430.1 233.1 428.2 234.9 426.8 236.0 424.2 235.6 M428.0 58.4 423.6 61.3 M427.8 80.9 426.8 81.1 424.3 81.1 M426.9 193.5 424.0 191.0 M427.1 184.3 426.7 184.6 424.6 187.5 425.3 190.0 424.0 191.0 M424.3 93.1 427.6 92.8 M425.6 257.7 425.4 254.5 426.6 252.3 M425.6 257.7 426.5 257.5 429.1 255.9 431.5 255.7 432.7 256.6 432.8 256.6 435.8 256.0 M435.6 144.9 434.0 145.0 430.9 143.6 430.0 143.4 428.2 142.9 425.1 141.7 M425.1 141.7 425.7 139.2 427.8 138.6 428.7 135.8 430.7 134.1 M435.8 256.0 433.9 255.1 432.5 252.3 429.5 253.2 427.6 253.6 426.6 252.3 M425.8 222.4 425.5 222.5 M425.4 244.6 429.2 244.4 431.0 245.4 432.9 244.4 433.8 243.1 M426.4 179.3 427.4 182.0 427.1 184.3 M431.0 173.1 430.2 176.0 427.9 177.2 426.4 179.3 M431.1 102.7 428.7 103.7 425.3 106.1 M426.2 169.5 427.9 170.4 431.6 171.2 M426.2 169.5 427.7 166.9 427.3 163.1 428.3 161.6 M425.8 222.4 427.0 222.9 M434.5 217.7 432.7 218.5 431.0 220.2 427.6 221.8 425.8 222.4 M426.3 70.7 426.7 69.8 M426.7 69.8 429.2 68.9 431.9 68.2 433.2 67.1 436.1 68.4 M430.4 78.0 430.2 75.9 430.3 74.0 427.9 71.9 426.3 70.7 M427.7 199.4 427.7 196.7 426.9 193.5 M426.9 193.5 429.5 193.0 430.9 193.7 433.4 193.0 436.7 191.0 M433.4 202.1 431.0 202.0 428.6 200.3 427.7 199.4 M427.7 199.4 428.6 200.3 430.7 201.9 433.2 202.1 433.4 202.1 M431.1 102.7 429.4 101.6 428.9 99.2 428.0 96.2 428.9 94.2 427.6 92.8 M427.6 92.8 430.4 90.8 M430.6 158.7 429.4 161.1 428.3 161.6 M427.1 184.3 428.6 185.6 432.3 185.1 433.6 186.0 M427.0 222.9 429.8 225.3 430.2 226.7 431.9 228.6 M435.8 60.0 433.6 60.0 430.6 58.6 429.6 58.3 428.0 58.4 M439.0 54.8 438.9 53.1 438.9 52.9 438.7 53.0 438.4 53.0 434.7 53.2 432.2 52.1 430.8 53.3 430.8 53.7 430.6 53.8 430.3 54.0 430.4 54.4 430.5 54.8 429.3 57.7 428.0 58.4 M428.3 131.8 430.7 134.1 M431.4 88.7 431.5 86.2 429.3 82.9 427.8 80.9 M430.4 78.0 429.8 79.9 427.8 80.9 M430.4 90.8 430.9 91.6 433.9 92.3 436.0 94.1 437.2 94.2 M437.2 94.2 436.9 94.3 435.9 94.1 433.7 92.3 430.8 91.7 430.4 90.8 M430.4 90.8 431.4 88.7 M433.9 237.1 433.6 236.0 430.1 233.1 M430.1 233.1 433.5 236.0 433.6 237.2 433.9 237.1 M431.9 228.6 430.7 231.7 430.1 233.1 M434.0 104.1 432.5 104.2 431.1 102.7 M430.7 134.1 434.2 134.8 M431.6 171.2 431.2 172.8 431.0 173.1 M431.0 173.1 431.6 171.2 M431.6 171.2 432.3 171.2 434.0 168.7 435.2 166.5 436.6 166.3 M436.6 166.3 435.9 165.0 435.1 163.2 431.4 160.1 430.6 158.7 M432.6 154.8 431.7 157.0 430.6 158.7 M436.2 76.9 434.4 78.1 430.4 78.0 M431.4 88.7 433.4 86.8 436.1 84.4 438.8 84.9 M432.6 154.8 433.5 153.0 433.6 150.5 435.4 148.9 435.6 144.9 M437.9 212.6 437.0 210.1 435.4 208.7 433.3 206.5 432.5 203.9 M432.5 203.9 433.4 202.1 M437.2 227.3 434.6 227.9 431.9 228.6 M433.8 243.1 436.7 244.4 437.6 244.3 439.7 245.0 442.8 246.2 M433.8 243.1 433.8 241.2 434.2 240.1 433.9 237.1 M436.8 144.3 436.9 143.4 436.3 141.8 435.7 138.9 433.6 136.4 434.2 134.8 M434.2 134.8 435.4 134.6 437.1 132.5 440.2 130.6 M433.6 186.0 435.1 188.0 437.0 188.9 M442.8 177.7 440.3 176.7 438.1 177.3 436.9 179.5 435.3 181.8 435.2 182.8 433.6 186.0 M434.5 217.7 434.3 219.1 436.8 220.7 439.2 221.4 M435.0 217.3 435.2 217.1 435.4 214.2 436.7 212.8 437.9 212.6 M437.9 212.6 436.7 212.9 435.5 214.5 435.0 217.3 M435.4 113.9 435.4 112.6 436.3 110.0 435.1 106.6 435.4 105.2 434.0 104.1 M438.1 101.6 434.0 104.1 M434.0 104.1 438.0 102.0 M435.4 113.9 436.7 114.4 439.9 114.6 441.6 115.6 442.8 114.6 M437.5 67.7 435.5 64.3 436.2 61.2 435.8 60.0 M439.0 54.8 438.0 55.5 437.3 58.5 435.8 60.0 M435.6 144.9 436.8 144.3 M442.4 200.2 441.2 198.4 437.8 198.0 436.5 197.0 437.0 194.2 436.7 191.0 M436.7 191.0 437.0 188.9 M435.8 256.0 438.8 255.8 439.9 254.6 440.8 253.1 M436.1 68.4 436.8 69.5 438.4 71.2 437.8 73.6 437.4 75.8 M437.5 67.7 436.1 68.4 M436.2 76.9 436.2 79.7 438.2 83.1 438.8 84.9 M437.4 75.8 436.2 76.9 M437.0 188.9 439.5 189.3 440.1 188.3 441.2 186.2 M442.2 233.2 442.2 231.5 439.2 230.3 436.9 228.2 437.2 227.3 M437.2 227.3 437.6 225.3 439.2 221.4 M441.8 65.7 440.4 65.7 437.5 67.7 M437.0 144.5 438.9 146.3 441.4 146.6 442.1 148.3 445.2 149.4 447.9 150.1 M447.3 136.9 445.7 138.9 444.3 139.5 442.9 140.3 439.8 143.0 438.2 144.8 437.0 144.5 M447.1 100.6 444.6 101.3 441.7 100.7 440.7 101.0 439.8 100.4 438.1 101.6 M445.4 111.3 443.6 110.4 443.2 109.7 441.9 107.8 439.7 106.4 438.7 104.9 438.0 102.0 M440.9 167.0 436.6 166.3 M441.6 91.2 439.7 92.5 437.2 94.2 M439.2 221.4 440.3 221.7 442.2 222.9 445.3 222.4 446.4 222.7 447.3 220.7 M437.4 75.8 440.5 76.4 443.6 74.7 445.3 74.9 M438.8 84.9 439.8 85.0 M442.6 209.2 437.9 212.6 M454.9 54.9 453.1 55.3 451.5 58.0 449.4 57.1 445.8 57.4 444.7 56.9 442.8 55.7 439.4 55.8 439.0 54.8 M440.2 130.6 441.1 132.2 442.2 133.7 445.9 134.5 447.3 136.9 M440.2 130.6 439.3 129.5 439.6 126.1 442.2 123.9 445.4 123.6 M444.5 170.6 441.1 168.2 440.9 167.0 M446.3 155.8 443.5 157.5 443.7 160.8 442.2 162.1 442.0 163.6 440.9 167.0 M439.8 85.0 440.8 86.9 441.6 91.2 M439.8 85.0 441.8 84.9 445.2 83.4 447.2 81.3 448.5 81.5 M449.9 93.0 445.9 92.5 444.2 91.4 441.6 91.2 M442.8 246.2 443.1 247.3 441.8 250.3 442.1 252.2 440.8 253.1 M442.8 246.2 442.6 245.4 443.9 243.4 443.5 240.3 444.6 239.0 444.7 237.8 M440.8 253.1 445.7 254.4 447.9 254.1 448.8 253.8 451.2 254.0 453.8 252.7 454.6 252.7 M441.2 186.2 444.5 187.6 446.3 188.5 447.4 188.7 450.6 190.4 M441.2 186.2 442.5 184.5 442.3 182.0 443.9 178.5 M451.1 191.1 448.2 193.6 446.8 194.2 444.5 195.2 443.0 198.5 442.4 200.2 M447.3 220.7 447.9 218.0 446.3 216.6 445.4 215.7 444.3 213.9 443.8 211.0 442.6 209.2 M442.2 200.5 441.4 201.6 442.1 204.3 441.6 206.7 443.0 207.4 442.6 209.2 M443.9 178.5 442.8 177.7 M442.8 177.7 444.6 175.4 444.9 171.9 M442.2 200.5 444.2 200.5 447.3 202.0 448.0 202.6 450.1 203.0 453.2 204.4 M444.7 237.8 441.7 234.5 442.2 233.2 M456.9 230.1 454.1 228.3 451.3 228.1 450.7 226.4 448.0 225.7 446.2 227.6 444.7 230.9 443.2 231.4 442.2 233.2 M446.1 73.2 446.4 70.2 445.0 67.5 441.8 65.7 M453.3 64.6 449.6 63.2 449.1 61.3 447.0 59.2 444.7 62.6 444.1 64.8 441.8 65.7 M441.8 65.7 444.1 64.8 444.8 62.9 447.0 59.5 447.5 59.4 449.1 61.6 449.7 63.2 453.3 64.6 M445.4 123.6 445.0 120.2 444.4 117.7 444.1 116.7 442.8 114.6 M442.8 114.6 445.5 111.9 M444.9 171.9 444.5 170.6 M444.5 170.6 446.3 169.2 448.1 166.4 449.5 166.2 450.8 166.4 451.2 166.3 M443.9 178.5 448.6 181.0 M451.2 125.9 449.1 124.6 446.1 124.1 445.4 123.6 M451.8 174.2 450.6 173.8 447.5 173.3 445.8 171.8 444.9 171.9 M453.4 238.2 451.0 238.1 447.9 238.4 447.0 237.4 444.7 237.8 M445.4 111.3 446.7 110.6 449.0 107.3 M445.5 111.9 448.7 113.5 449.5 113.5 451.8 114.9 454.6 115.6 455.3 116.2 M446.3 155.8 447.0 157.6 449.5 158.0 450.8 158.8 451.4 160.6 452.0 163.3 451.2 166.3 M447.9 150.1 446.3 153.7 446.3 155.8 M446.1 73.2 445.4 74.6 445.3 74.9 M445.3 74.9 446.1 73.2 M449.0 107.3 447.2 104.4 447.3 103.0 447.1 100.6 M447.1 100.6 449.0 97.1 M447.7 136.6 447.3 136.9 M447.9 150.1 448.0 150.1 449.5 149.8 451.0 147.1 M453.0 69.2 450.0 70.7 446.1 73.2 M450.6 190.4 448.2 188.1 448.5 186.3 447.9 183.4 448.6 181.0 M448.6 181.0 450.0 180.4 450.5 180.6 M447.3 220.7 449.0 219.4 451.0 218.9 453.2 219.0 455.4 217.8 456.6 215.7 457.6 215.2 M447.7 136.6 448.7 138.7 450.4 141.5 451.6 143.8 451.0 144.7 M453.7 130.3 452.1 131.6 450.6 134.2 448.2 135.3 447.7 136.6 M448.5 81.5 448.6 83.1 449.9 85.4 450.8 88.0 452.3 89.9 450.5 90.5 449.9 93.0 M448.5 81.5 451.0 81.7 454.6 79.3 456.0 79.2 M459.2 103.4 457.7 107.6 454.2 108.0 451.9 106.6 451.2 106.7 449.0 107.3 M449.0 97.1 449.7 95.7 449.9 93.0 M449.0 97.1 451.4 98.9 454.7 99.0 455.8 100.5 M455.6 183.4 454.2 184.5 453.8 187.9 451.7 189.6 451.0 190.7 M451.1 191.1 451.9 191.9 452.3 193.3 455.0 195.5 456.0 198.4 455.0 199.4 M451.2 125.9 451.0 127.6 452.6 128.8 453.7 130.3 M455.3 116.2 454.7 118.6 453.1 121.4 452.6 122.5 451.2 125.9 M451.0 147.1 454.0 148.0 455.3 150.3 455.4 151.5 457.8 152.5 460.4 154.7 M451.0 144.7 451.0 147.1 M450.5 180.6 454.4 182.7 455.6 183.4 M451.8 174.2 451.9 176.5 450.5 180.6 M458.1 73.0 455.8 71.1 453.7 70.8 453.0 69.2 M453.3 64.6 453.5 65.1 452.9 68.0 453.0 69.2 M451.0 144.7 454.4 144.3 457.1 144.0 458.0 142.1 459.7 140.7 462.8 141.5 M451.2 166.3 454.6 167.0 455.3 168.9 456.5 169.8 459.2 170.9 M459.2 170.9 457.0 172.7 453.9 174.8 451.8 174.2 M458.2 63.0 456.1 63.4 454.8 63.9 453.3 64.6 M458.1 212.5 455.2 210.5 451.9 208.6 453.5 205.8 453.2 204.4 M453.2 204.4 455.0 199.4 M454.9 251.5 454.8 250.4 451.8 249.3 450.6 246.3 451.9 243.0 452.6 241.8 453.4 238.2 M453.4 238.2 456.0 237.3 M456.2 131.0 453.7 130.3 M455.0 199.4 455.8 199.8 458.5 201.4 461.3 201.8 462.1 202.5 464.1 204.1 M454.9 251.5 454.6 252.7 M464.0 246.3 463.0 246.9 460.0 247.1 457.5 249.6 456.7 251.8 454.9 251.5 M454.6 252.7 456.0 253.4 459.3 253.2 461.3 254.3 462.6 254.4 465.8 253.4 468.6 253.5 M458.2 63.0 457.1 61.2 457.3 59.0 457.3 56.7 454.9 54.9 M472.7 53.4 469.2 54.5 468.9 54.6 468.6 54.6 468.8 54.7 467.7 55.1 465.6 57.2 465.4 58.9 465.1 58.6 462.7 57.9 460.0 55.6 460.0 54.1 459.9 54.3 460.0 54.0 459.8 54.1 459.5 54.6 454.9 54.9 M455.6 183.4 456.7 184.3 M464.1 82.4 461.3 83.4 458.3 80.5 456.0 79.2 M456.0 79.2 457.3 78.3 457.6 76.2 458.1 73.0 M460.8 117.5 457.0 116.8 455.3 116.2 M463.5 137.6 462.0 135.3 461.5 134.3 459.5 133.5 456.6 131.7 456.2 131.0 M456.2 131.0 457.5 129.8 458.0 127.4 460.3 126.4 462.1 126.3 463.6 124.1 M455.8 100.5 457.8 101.9 459.2 103.4 M463.7 95.1 459.1 94.9 458.6 95.8 456.7 98.3 455.8 100.5 M456.0 237.3 455.7 235.5 456.7 232.0 456.9 230.1 M461.9 224.1 459.7 224.3 459.4 226.4 457.9 229.4 456.9 230.1 M456.0 237.3 457.3 237.3 M463.1 188.3 461.0 187.3 460.4 185.6 458.5 185.3 456.7 184.3 M456.7 184.3 456.7 184.1 457.0 181.5 458.9 179.0 459.3 178.1 461.2 174.8 M458.1 73.0 459.8 72.6 460.3 71.6 460.5 71.6 M460.5 71.6 459.8 72.5 458.1 73.0 M457.6 215.2 458.1 212.5 M458.1 212.5 458.2 209.4 459.7 208.4 460.8 208.0 461.7 205.8 464.1 204.1 M457.3 237.3 459.0 238.6 460.0 240.4 460.9 241.6 462.6 243.4 464.0 246.3 M469.6 235.1 466.6 234.9 462.9 234.4 461.8 236.5 460.9 237.7 457.3 237.3 M469.7 63.1 467.4 64.2 463.8 63.7 462.7 65.1 461.4 64.7 458.2 63.0 M457.6 215.2 460.4 216.8 M459.2 103.4 459.6 103.7 M459.8 171.8 459.2 170.9 M459.6 103.7 460.6 106.2 462.8 107.5 464.3 109.1 464.5 111.6 466.4 112.7 M468.6 100.5 467.8 101.9 466.7 102.8 463.5 103.8 460.5 104.2 459.6 103.7 M459.8 156.6 460.5 156.0 460.4 154.7 M460.4 154.7 461.2 151.7 462.6 149.7 462.7 148.7 464.5 145.8 M461.9 224.1 461.8 224.0 459.4 224.1 458.8 225.6 459.1 223.7 459.7 222.6 459.1 219.5 459.8 216.7 460.2 216.8 460.4 216.8 M460.4 216.8 461.9 216.8 463.7 214.6 464.9 212.4 465.9 212.6 466.2 212.6 466.6 212.6 466.6 212.5 467.0 212.5 467.1 212.4 467.2 212.2 467.6 212.2 467.7 211.9 467.8 211.7 467.8 211.4 466.7 207.6 467.8 205.0 M460.8 117.5 460.7 118.5 462.1 121.3 463.6 124.1 M466.1 113.5 463.0 114.5 462.6 116.2 460.8 117.5 M461.2 174.8 459.8 171.8 M459.8 171.8 461.3 171.4 461.8 168.9 462.9 166.0 M462.9 166.0 463.4 165.0 462.4 162.8 461.7 159.3 459.6 156.9 459.8 156.6 M468.1 154.7 467.3 156.2 466.1 157.7 462.9 156.9 459.8 156.6 M460.5 71.6 463.8 73.4 466.0 74.5 466.5 75.1 468.9 77.0 M468.6 185.7 467.1 182.7 465.4 181.4 465.0 180.9 464.3 179.2 464.5 175.9 461.2 174.8 M464.5 145.8 463.7 143.2 462.8 141.5 M462.8 141.5 463.5 137.6 M465.4 224.2 462.7 224.1 462.3 224.0 M468.7 100.4 469.1 99.6 466.8 97.6 463.8 96.9 463.7 95.1 M463.7 95.1 465.1 92.3 465.2 90.9 466.9 90.0 M464.1 204.1 463.0 203.1 463.9 200.4 463.7 197.0 464.7 195.6 462.5 193.9 462.4 190.9 463.1 188.3 M468.6 185.7 465.5 187.5 463.1 188.3 M463.6 124.1 465.2 123.9 465.7 127.4 466.9 129.3 468.8 130.0 M471.6 166.9 470.1 167.1 468.9 167.3 465.6 165.8 462.9 166.0 M475.1 141.0 474.3 141.0 473.0 139.4 470.8 139.0 467.5 138.3 466.5 137.4 463.5 137.6 M468.8 130.0 468.2 132.6 466.0 135.4 465.4 136.1 463.5 137.6 M464.0 246.3 466.4 246.2 M467.8 205.0 464.1 204.1 M466.9 90.0 465.6 86.3 464.1 82.4 M464.1 82.4 465.5 82.3 468.0 81.0 469.9 78.4 M464.5 145.8 466.2 146.8 469.4 147.5 470.3 147.5 472.1 149.0 M469.6 235.1 467.8 232.8 466.5 229.1 465.7 226.8 465.6 226.1 465.4 224.2 M476.2 231.6 474.2 232.1 473.6 230.9 472.3 228.5 473.5 224.6 472.8 222.5 472.8 222.4 472.8 222.3 472.6 222.2 472.3 222.2 471.9 222.2 471.6 222.2 471.1 222.2 470.7 222.2 470.2 222.1 469.8 222.0 469.4 221.9 467.1 221.4 465.4 224.2 M470.9 116.6 469.0 116.0 468.5 114.1 466.1 113.5 M466.4 112.7 466.1 113.5 M466.9 90.0 469.4 90.2 472.9 91.2 M473.2 106.6 471.5 107.9 470.6 107.8 467.8 110.0 466.4 112.7 M468.6 253.5 467.7 250.7 467.9 249.3 466.4 246.2 M466.4 246.2 468.2 245.0 M472.1 184.7 469.5 185.3 468.6 185.7 M467.8 205.0 467.6 203.3 467.5 203.1 469.0 203.1 473.2 201.1 475.7 201.7 476.6 202.2 478.9 202.2 481.7 203.3 482.6 202.9 483.8 202.0 486.9 202.2 489.1 201.4 490.2 201.4 492.9 202.7 496.1 202.5 497.3 202.9 497.4 203.0 497.5 202.7 497.6 202.8 497.7 202.9 497.6 202.5 497.8 202.5 497.7 202.1 497.8 202.1 497.9 201.6 497.7 201.2 497.7 200.8 497.9 200.8 497.8 200.4 497.8 200.0 497.9 199.7 498.0 199.4 498.2 199.2 498.3 198.9 498.4 198.6 498.6 198.4 498.4 198.2 498.6 198.1 498.5 197.9 498.7 197.7 498.6 197.5 498.5 197.4 498.5 197.1 498.3 197.0 498.1 196.9 495.0 197.6 491.9 197.8 490.8 198.0 488.6 199.2 485.6 198.4 484.4 197.9 483.4 197.9 480.3 196.9 478.2 197.6 477.2 198.4 474.1 198.2 471.0 199.0 472.0 196.5 471.7 193.6 473.0 192.2 472.5 190.6 472.5 187.3 472.1 184.7 M468.6 253.5 469.3 252.9 473.7 253.9 475.3 254.5 477.0 255.8 M468.8 130.0 470.0 131.0 472.9 131.3 476.9 130.9 M470.4 236.2 469.6 235.1 M475.9 247.0 472.4 245.4 471.2 245.5 468.2 245.0 M468.2 245.0 469.3 243.5 468.7 242.4 469.9 239.4 469.6 237.0 470.4 236.2 M468.9 77.0 469.6 77.7 M468.9 77.0 470.5 75.4 470.7 72.3 472.6 70.9 472.9 69.7 M469.9 78.4 470.6 79.2 471.0 81.3 473.2 83.7 475.0 84.9 475.8 86.5 M469.6 77.7 469.9 78.4 M468.1 154.7 471.4 157.9 472.2 159.5 472.4 161.5 475.7 163.4 M472.1 149.0 470.7 152.3 469.6 153.3 468.1 154.7 M479.3 76.1 478.6 75.9 476.3 77.6 472.6 78.2 470.8 77.4 469.6 77.7 M472.9 69.7 470.4 67.0 469.7 63.1 M469.7 63.1 470.3 62.5 472.2 61.7 472.9 58.7 473.3 57.0 473.2 55.5 472.7 53.4 M473.3 95.4 471.3 97.7 470.7 99.7 468.7 100.4 M473.2 106.6 471.4 102.6 468.6 100.5 M476.2 231.6 475.2 234.9 470.4 236.2 M477.9 125.9 474.7 124.8 473.3 123.8 470.9 121.8 471.4 119.1 470.9 116.6 M475.8 108.1 477.3 110.6 477.2 111.7 476.9 113.6 476.2 115.8 473.3 116.2 470.9 116.6 M470.9 116.6 473.4 116.3 476.4 115.8 476.9 113.5 477.4 111.8 477.4 110.6 475.8 108.1 M472.9 91.2 471.9 93.3 473.3 95.4 M475.8 86.5 474.0 86.9 473.4 88.1 472.9 91.2 M472.1 184.7 471.1 183.6 471.7 181.7 471.1 178.6 472.5 177.2 472.2 176.2 473.0 173.3 472.4 170.4 471.8 169.1 471.6 166.9 M471.6 166.9 471.3 166.1 475.5 165.2 M481.4 51.6 480.1 51.6 476.9 51.4 474.7 52.8 472.7 53.4 M480.7 67.9 476.7 68.9 474.4 69.2 472.9 69.7 M475.8 108.1 473.4 106.9 473.2 106.6 M472.1 149.0 474.4 148.2 476.4 148.6 476.7 150.5 479.4 151.1 M473.3 95.4 476.6 96.1 478.0 95.8 479.0 96.6 481.7 96.9 483.8 95.6 M475.7 163.4 475.5 165.2 M475.7 163.4 476.6 161.3 478.9 157.7 479.5 156.7 481.5 154.2 479.4 151.1 M475.5 165.2 476.7 164.5 478.9 165.8 482.5 165.8 484.4 165.6 485.2 165.7 487.8 164.2 490.2 164.0 491.0 164.7 493.1 164.4 496.6 165.4 498.5 165.5 498.6 165.3 498.8 164.8 498.9 164.7 499.1 164.1 499.2 163.9 499.3 163.5 M489.1 232.8 485.0 232.6 483.3 230.8 482.9 230.4 482.5 230.5 482.2 230.7 481.8 230.8 481.4 231.0 479.1 232.6 478.0 232.0 476.2 231.6 M477.9 255.5 476.2 253.2 477.2 250.2 476.5 248.0 475.9 247.0 M475.9 247.0 478.6 244.9 M487.3 140.2 486.7 140.7 484.3 140.3 481.5 141.3 480.4 141.7 478.5 140.8 475.1 141.0 M475.1 141.0 475.3 139.6 474.9 136.6 476.2 134.2 476.0 133.1 476.9 130.9 M475.8 86.5 478.8 86.4 481.2 84.5 M476.9 130.9 477.8 127.9 M480.3 105.9 475.8 108.1 M477.8 127.9 477.9 125.9 M485.0 116.2 483.3 116.5 481.6 118.0 480.4 120.1 479.8 120.9 478.4 124.0 477.9 125.9 M477.0 255.8 480.1 257.0 480.7 257.4 483.3 259.2 483.8 259.2 486.7 259.0 488.0 260.2 M477.9 255.5 477.0 255.8 M477.8 127.9 478.9 127.9 482.3 128.9 M478.6 244.9 479.3 244.8 481.6 245.1 484.6 244.3 486.4 248.2 M489.1 232.8 486.2 235.6 484.2 236.7 482.8 236.6 481.1 237.2 477.1 238.9 478.0 240.5 478.6 241.8 478.6 244.9 M486.4 252.1 484.3 252.0 482.6 252.4 480.7 254.9 478.3 255.6 477.9 255.5 M480.3 105.9 481.1 106.2 484.2 107.8 486.3 107.9 487.3 109.5 486.5 111.9 485.2 115.1 485.0 116.2 M484.3 96.9 483.2 98.4 482.3 99.6 481.8 102.9 480.3 104.9 480.3 105.9 M479.4 151.1 482.2 150.4 483.1 149.8 483.9 147.7 485.6 146.3 486.2 145.4 M481.2 84.1 481.7 82.6 480.3 81.8 479.4 79.2 479.3 76.1 M479.3 76.1 480.2 75.3 482.0 72.5 M480.7 67.9 480.7 70.4 482.0 72.5 M481.8 60.2 480.2 60.5 480.8 63.8 480.8 66.5 480.7 67.9 M483.9 53.9 481.8 53.0 481.4 51.6 M492.3 50.9 491.2 50.4 489.6 49.0 487.9 48.6 485.2 46.5 484.9 46.4 485.1 46.2 484.9 46.2 484.5 46.3 484.3 46.3 483.4 48.0 481.4 51.6 M481.2 84.1 482.5 84.3 485.0 84.5 487.7 82.8 489.4 81.5 M484.7 92.9 483.8 91.8 481.5 90.9 481.7 88.0 481.2 84.5 M490.7 64.0 489.4 63.8 485.6 62.2 484.2 62.1 481.8 60.2 M483.9 53.9 482.7 56.0 483.1 59.1 481.8 60.2 M488.0 139.1 488.5 138.2 485.9 135.1 484.1 132.1 484.3 130.7 482.3 128.9 M482.3 128.9 484.7 128.9 486.1 126.6 486.3 124.1 488.0 124.0 490.1 123.7 M482.0 72.5 485.2 71.4 486.9 72.2 M483.8 95.6 484.3 96.9 M484.7 92.9 483.8 95.6 M489.9 54.7 488.1 54.9 487.2 55.3 483.9 53.9 M497.3 99.7 496.3 101.3 493.9 102.8 492.0 103.5 489.2 102.8 488.7 101.0 487.2 100.3 485.0 99.2 484.3 96.9 M494.1 90.2 492.3 90.5 489.2 92.2 487.1 93.7 486.2 93.0 484.7 92.9 M485.0 116.2 487.6 118.8 488.0 120.5 490.1 123.7 M491.3 160.1 489.4 157.4 488.4 156.1 487.6 154.5 486.0 152.8 M491.3 160.1 488.5 156.5 487.7 154.7 486.0 152.8 M486.0 152.8 486.7 151.2 485.8 148.1 486.7 146.2 486.2 145.4 M486.0 152.8 486.5 150.6 486.1 147.1 486.6 145.9 486.6 143.7 M486.4 248.2 486.4 252.1 M488.6 245.8 486.4 248.2 M489.7 253.1 486.4 252.1 M486.4 252.1 489.6 253.1 489.7 253.1 M486.9 72.2 488.1 73.2 490.7 74.9 491.8 77.6 M486.9 72.2 488.0 71.4 488.9 69.8 489.2 66.7 490.8 65.0 490.7 64.0 M486.2 145.4 486.6 143.7 M487.4 140.9 488.9 142.3 M488.9 142.3 487.4 141.2 487.4 140.9 M488.7 138.8 487.4 140.9 M486.6 143.7 487.8 143.6 488.3 143.1 488.8 143.1 488.9 142.3 M486.6 143.7 490.9 145.0 M487.3 140.2 488.0 139.1 M494.8 235.5 492.0 234.1 491.7 234.3 490.8 234.3 489.1 232.8 M488.0 260.2 488.2 256.5 489.6 253.4 M488.0 260.2 491.4 259.7 494.3 258.8 495.2 258.7 495.3 258.5 498.3 257.7 501.3 258.5 502.8 257.2 503.9 254.9 506.6 255.1 M488.0 139.1 488.7 138.8 M488.9 142.3 490.9 145.0 M488.6 245.8 491.3 246.6 492.3 247.7 494.3 247.2 497.7 247.6 M494.8 235.5 493.0 238.6 492.6 239.5 490.8 241.5 490.5 244.7 488.6 245.8 M489.4 137.1 488.7 138.8 M488.7 138.8 489.4 137.3 489.4 137.1 M489.4 81.5 490.1 84.7 490.9 86.6 492.8 88.1 494.2 90.0 M491.8 77.6 491.3 80.1 489.4 81.5 M489.4 137.1 489.3 133.9 490.8 132.6 490.6 131.4 492.0 128.3 491.7 126.2 M498.1 146.2 499.5 144.5 499.4 143.6 500.0 141.1 500.2 138.4 499.6 137.5 500.0 136.0 497.3 134.5 495.5 134.2 491.5 132.7 490.2 133.5 489.4 137.1 M490.5 123.7 489.6 122.5 M490.3 123.7 489.6 122.5 M489.6 122.5 490.3 119.7 491.4 118.7 491.4 117.4 493.0 114.3 492.9 112.6 M491.7 126.2 490.3 123.7 M493.5 60.3 492.3 58.3 492.6 57.6 489.9 54.7 M489.9 54.7 492.3 50.9 M491.7 126.2 491.6 126.2 490.5 123.7 M490.9 145.0 492.0 145.0 493.7 145.4 497.0 146.5 498.1 146.2 M490.9 145.0 491.4 146.0 492.6 145.5 496.4 146.7 498.1 146.2 M497.4 159.1 497.4 159.1 494.2 158.6 492.8 159.8 491.3 160.1 M497.4 159.1 494.1 158.6 492.7 159.8 491.3 160.1 M503.2 101.6 504.0 101.6 506.8 102.7 509.4 103.6 510.2 103.4 512.7 104.6 515.6 104.3 516.4 104.2 518.5 104.9 521.6 104.2 522.5 105.0 524.3 105.5 523.2 108.3 521.1 110.4 520.8 110.4 519.0 112.5 518.7 115.2 517.2 116.2 515.8 118.5 514.4 121.0 513.6 122.2 513.4 125.4 512.8 128.3 513.2 129.4 513.3 130.1 516.2 132.9 512.7 134.6 510.0 135.6 508.7 134.8 505.0 134.9 503.3 134.0 501.3 133.6 497.7 133.5 496.7 132.5 494.1 132.8 491.1 131.5 492.3 128.1 491.7 126.2 M490.7 64.0 492.5 62.2 M496.4 75.7 493.2 75.9 491.8 77.6 M499.0 49.4 496.3 50.2 495.2 50.9 492.3 50.9 M492.4 171.0 492.6 172.0 492.3 174.9 492.6 177.8 491.4 178.9 491.6 181.2 490.1 184.7 490.5 186.3 494.5 187.1 496.4 188.9 498.5 188.3 M492.4 171.0 489.2 170.8 487.9 168.8 484.0 168.7 482.4 168.7 482.1 169.3 479.2 172.5 478.5 174.2 477.8 175.8 478.8 179.0 477.3 180.1 478.6 181.8 481.9 185.3 482.8 185.9 486.9 186.5 489.8 185.5 490.3 186.1 490.3 184.1 491.7 180.7 491.4 178.8 492.7 177.6 492.2 174.7 492.7 171.9 492.4 171.0 M506.1 178.3 506.9 176.1 503.5 171.5 503.0 169.9 499.7 168.0 498.5 167.6 496.4 169.5 494.7 171.0 492.4 171.0 M492.5 62.2 495.3 65.5 497.1 66.7 498.5 68.8 498.9 69.1 M492.5 62.2 493.5 60.3 M494.2 90.0 494.7 89.7 497.0 88.1 500.8 86.6 M494.1 90.2 493.3 92.2 494.7 94.4 496.8 96.6 496.8 98.4 497.3 99.7 M500.7 56.7 499.0 59.3 495.7 60.4 493.5 60.3 M492.9 112.6 495.0 111.8 496.5 109.1 497.6 106.5 499.9 106.1 500.5 104.9 502.1 102.5 503.2 101.6 M492.9 112.6 494.4 112.3 496.6 109.9 497.4 106.9 499.8 106.2 500.5 105.2 502.0 102.6 503.2 101.6 M496.6 236.6 494.8 235.5 M500.2 79.7 498.5 77.9 498.5 77.4 496.4 75.7 M496.4 75.7 496.3 75.1 497.7 72.9 497.9 70.0 498.9 69.1 M497.1 159.8 497.4 159.1 M499.3 163.5 499.3 163.4 498.5 161.9 497.1 159.8 M499.3 163.5 498.5 162.0 497.1 159.8 M497.1 159.8 497.6 159.2 M497.7 247.6 497.7 249.9 497.8 251.1 496.7 253.4 496.9 253.6 M500.9 243.2 498.9 244.1 497.7 247.6 M497.6 159.2 497.1 158.0 497.4 154.6 497.2 151.9 497.8 150.8 498.2 147.7 M498.2 147.7 498.1 150.9 498.0 152.3 499.1 154.7 499.0 158.3 499.9 160.1 497.6 159.2 M509.8 234.8 508.3 233.5 505.4 234.4 503.6 235.7 503.2 236.9 501.5 237.2 498.1 237.5 496.6 236.6 M500.9 243.2 498.1 240.0 496.6 236.6 M497.3 99.7 501.6 100.3 501.9 100.5 503.2 101.6 M505.2 252.0 504.1 253.0 500.9 252.3 497.1 253.4 496.9 253.6 M496.9 253.6 499.4 252.1 502.7 252.7 504.4 252.8 505.2 252.0 M498.5 188.3 498.8 189.5 500.7 192.0 502.2 194.0 505.5 195.7 507.6 195.4 512.4 196.5 513.4 195.2 515.5 191.6 M498.5 188.3 499.2 185.2 501.7 183.5 502.6 183.3 504.2 181.2 505.7 179.0 506.1 178.3 M498.1 146.2 498.2 147.7 M498.2 147.7 500.4 148.7 503.6 148.6 504.5 148.8 506.5 150.0 509.7 149.7 510.8 151.0 512.5 151.9 515.8 152.1 517.1 153.7 518.6 153.7 521.9 154.4 522.4 156.4 521.7 158.1 522.3 161.1 523.0 163.4 521.1 163.9 519.0 165.4 517.7 167.0 516.7 167.6 513.6 168.4 510.4 168.8 509.5 170.1 507.4 171.2 504.1 170.0 503.5 169.3 502.2 168.4 500.4 165.9 499.3 163.5 M504.0 67.0 503.4 67.4 502.2 68.8 498.9 69.0 498.9 69.1 M498.9 69.1 502.2 68.9 503.4 67.5 504.0 67.0 M499.0 49.4 499.8 52.1 501.1 53.7 500.4 54.5 500.7 56.7 M505.6 58.3 504.9 56.5 505.8 55.0 505.7 54.6 505.6 54.3 503.1 51.7 503.9 48.9 504.0 48.7 503.9 48.6 504.0 48.4 503.8 48.2 503.7 48.1 503.4 48.0 499.0 49.4 M509.9 90.1 507.3 89.6 504.6 92.0 501.8 89.4 501.6 88.1 500.8 86.6 M500.8 86.6 500.1 85.0 501.0 83.3 500.2 79.7 M505.0 250.9 505.8 247.7 505.0 246.3 503.6 244.4 501.6 243.1 500.9 243.2 M505.6 58.3 502.3 58.3 500.7 56.7 M509.9 90.1 509.2 88.6 509.7 85.6 510.5 82.6 509.8 81.5 505.9 80.7 504.9 79.1 500.2 79.7 M503.2 101.6 504.2 101.6 504.6 101.5 504.0 101.2 505.3 100.5 508.1 98.2 509.4 97.3 511.6 96.4 512.6 93.2 513.2 91.0 M506.8 61.0 505.6 58.6 505.6 58.3 M513.3 71.2 509.4 72.2 508.0 71.3 506.8 69.5 504.0 67.0 M504.0 67.0 505.2 65.4 505.8 64.3 506.8 61.0 M506.6 255.1 505.2 252.0 M505.2 252.0 505.0 250.9 M511.2 178.2 507.7 177.2 506.1 178.3 M514.1 250.4 512.6 249.3 511.0 249.5 507.6 250.4 505.0 250.9 M506.6 255.1 509.8 255.2 510.9 254.9 513.5 255.5 516.5 254.3 517.4 254.0 M513.3 71.2 512.9 68.8 511.9 68.0 512.4 66.6 511.8 63.7 511.8 63.4 511.7 63.5 511.7 63.1 511.6 63.2 511.7 62.8 510.2 61.0 506.8 61.0 M508.8 240.5 509.0 240.4 509.9 238.3 509.8 234.8 M509.8 234.8 509.9 238.5 508.8 240.5 M518.8 229.8 517.0 226.0 515.7 225.8 514.6 225.4 510.6 226.0 507.6 226.0 507.2 228.0 506.3 230.1 506.1 230.3 506.0 232.2 508.6 233.5 509.8 234.8 M517.6 235.5 514.5 235.4 511.5 235.1 509.8 234.8 M508.8 240.5 510.8 242.2 513.9 242.4 514.9 244.3 M513.2 91.0 509.9 90.1 M515.5 191.6 515.3 190.4 514.9 189.8 514.6 188.0 512.4 184.7 511.9 182.1 512.6 181.1 511.7 180.4 511.2 178.2 M521.7 173.4 518.7 174.3 515.2 174.7 513.3 174.9 511.2 178.2 M513.2 91.0 514.3 90.6 514.7 90.7 514.8 90.8 514.9 90.9 515.0 90.7 515.1 90.8 515.2 90.6 515.5 86.7 516.7 84.7 516.7 84.7 517.4 82.3 517.0 78.9 515.9 77.8 515.4 76.9 513.6 74.7 513.3 71.2 M514.1 250.4 516.0 251.3 516.7 251.9 517.4 254.0 M514.9 244.3 514.1 246.8 514.1 250.4 M519.5 241.9 516.2 244.1 514.9 244.3 M515.5 191.6 519.3 193.1 519.7 193.1 519.8 193.0 M519.5 241.9 517.3 239.2 517.3 237.6 517.6 235.5 M517.6 235.5 518.6 231.5 518.8 229.8 M517.4 254.0 521.1 254.1 523.5 255.1 525.7 254.9 M520.2 231.4 518.8 233.0 517.9 235.9 517.9 235.2 M517.9 235.2 517.9 235.3 519.2 232.2 519.8 231.0 518.8 229.8 M517.9 235.2 519.3 232.2 519.8 231.1 520.9 229.4 521.8 225.9 522.5 224.5 M520.2 231.4 519.1 232.6 517.9 235.2 M519.8 193.0 520.0 194.2 521.4 197.7 525.8 198.2 526.6 198.9 M525.0 185.5 523.1 186.4 522.7 188.2 520.4 191.8 519.7 193.0 519.8 193.0 M519.8 193.0 520.5 191.9 522.7 188.2 523.1 186.4 525.0 185.5 M520.3 241.6 521.9 239.6 523.7 239.7 524.7 236.5 M524.7 236.5 524.8 236.9 523.6 239.8 521.9 239.6 520.3 241.6 M521.7 173.4 521.0 176.9 521.5 179.1 522.6 180.0 524.0 182.1 525.0 185.5 M533.7 176.0 531.4 170.8 530.9 170.8 528.5 170.3 524.3 172.0 522.2 171.5 521.7 173.4 M522.5 224.5 521.9 226.0 520.8 229.6 520.1 231.3 M525.5 234.1 523.6 232.1 520.2 231.3 M522.5 224.5 522.0 226.0 520.8 229.6 520.2 231.3 M527.7 230.4 527.6 227.3 524.3 225.7 522.5 224.5 M522.5 224.5 524.8 224.6 528.2 224.9 M525.0 185.5 527.4 184.8 M525.5 234.1 524.7 236.5 M527.7 230.4 526.6 233.1 525.5 234.1 M525.7 254.9 525.8 251.5 526.1 249.5 526.6 247.6 527.3 245.7 529.1 243.4 530.0 242.9 531.9 241.9 M525.7 254.9 530.3 253.8 532.0 253.1 M526.6 198.9 526.2 200.5 526.5 204.1 529.3 205.0 529.4 207.9 533.8 208.5 535.5 209.7 539.0 209.4 543.1 208.9 543.7 205.7 544.4 205.4 545.2 204.2 545.2 201.2 546.2 198.7 545.3 197.7 M526.6 198.9 527.3 197.9 530.2 197.2 532.4 194.6 533.9 192.8 536.0 193.1 M528.2 224.9 528.3 225.0 529.9 223.1 530.7 222.7 533.9 223.0 536.7 222.8 M553.5 216.8 552.5 218.3 552.2 221.8 551.1 222.5 548.3 221.3 545.2 221.1 544.2 220.5 541.8 219.4 538.7 220.2 537.8 219.8 537.8 219.8 537.6 219.8 535.2 221.5 532.1 221.4 530.5 220.5 527.7 221.1 524.4 221.1 528.2 224.9 M528.2 224.9 529.9 223.0 530.7 222.6 533.8 223.0 536.7 222.8 M527.4 184.8 530.5 185.4 531.3 187.2 532.4 187.5 535.1 188.5 M527.4 184.8 528.0 182.2 530.3 181.3 530.9 178.3 533.2 176.5 533.7 176.0 M531.8 235.9 529.9 233.9 527.7 230.4 M533.7 247.0 534.5 245.7 534.0 244.7 532.1 241.9 531.7 238.3 530.8 236.5 531.8 235.9 M531.9 241.9 531.8 240.6 530.9 236.8 531.8 235.9 M532.0 253.1 532.6 252.2 535.4 251.5 M532.0 253.1 534.5 253.1 537.2 255.0 536.9 256.3 536.8 256.4 537.0 256.3 537.1 256.2 540.5 256.5 543.9 256.9 544.1 256.8 544.1 256.6 544.6 254.6 547.0 253.3 549.7 252.9 549.9 252.7 551.5 250.6 553.7 247.9 551.1 250.2 548.3 252.4 547.1 252.5 545.5 252.8 M533.7 247.0 534.5 245.7 533.9 244.7 531.9 241.9 M533.7 176.0 535.4 177.5 536.7 178.5 539.1 180.7 M548.8 177.1 549.8 175.6 550.2 172.0 550.9 169.7 548.6 168.9 547.0 166.7 544.7 165.6 541.0 164.6 538.8 164.6 534.4 165.7 532.5 168.3 531.2 170.1 531.3 170.4 532.4 173.0 533.7 176.0 M534.8 120.8 536.7 121.5 538.0 121.0 541.4 121.1 543.5 122.1 544.7 121.9 548.0 123.4 550.2 123.9 551.3 124.2 554.5 125.2 556.8 124.5 557.7 125.0 556.6 127.9 557.2 128.9 556.9 131.2 557.2 134.5 557.3 135.8 556.9 137.2 557.1 140.4 555.9 142.3 556.0 143.2 554.5 146.0 554.8 148.6 553.9 148.2 550.9 146.1 548.4 145.3 548.1 144.0 545.7 142.0 543.7 141.4 M534.8 120.8 535.4 123.4 535.6 124.9 534.4 126.7 535.1 129.7 534.8 131.9 535.9 132.6 537.0 133.9 536.5 136.8 537.3 138.6 539.9 139.0 542.9 139.9 543.7 141.4 M543.7 141.4 541.8 143.7 541.6 144.5 539.7 147.7 538.0 147.7 534.7 147.8 533.4 146.2 532.1 146.3 528.9 145.7 527.2 145.4 527.2 143.5 528.8 142.2 528.7 138.7 530.3 136.8 530.1 135.5 530.8 132.4 529.3 130.3 529.6 129.4 528.6 126.5 529.6 123.2 531.5 123.1 534.8 120.8 M538.0 255.0 536.5 254.0 535.3 250.7 533.7 247.0 M535.4 251.5 533.7 247.0 M536.0 193.1 535.1 188.5 M535.1 188.5 536.8 186.2 537.1 185.8 538.9 183.5 539.1 180.7 M536.0 193.1 536.8 193.4 539.8 194.4 541.4 195.8 542.2 196.0 545.3 197.7 M538.0 255.0 536.7 254.1 535.4 251.5 M536.7 222.8 538.0 224.6 542.1 224.3 543.3 225.4 544.7 225.3 547.9 225.2 M536.7 222.8 537.6 224.4 541.0 224.3 543.2 225.1 544.4 225.5 547.9 225.2 M545.5 252.8 543.9 254.4 541.2 255.8 538.8 254.9 538.0 255.0 M545.5 252.8 542.6 255.5 539.3 255.2 538.0 255.0 M539.1 180.7 540.4 180.3 543.6 181.7 M548.1 195.8 546.8 192.9 545.6 190.9 545.2 189.4 544.5 186.9 545.7 184.2 544.6 182.8 543.6 181.7 M543.6 181.7 546.6 180.2 547.6 177.5 548.8 177.1 M545.3 197.7 548.1 195.8 M562.4 230.4 565.0 232.9 562.3 235.1 560.9 235.7 559.9 236.2 558.1 239.0 558.2 241.7 556.4 242.6 556.3 245.5 554.7 248.0 553.9 247.5 552.1 249.1 548.7 252.1 547.2 252.5 545.5 252.8 M548.1 195.8 549.1 193.5 550.1 193.6 553.3 194.1 555.7 191.6 556.3 188.6 556.0 187.7 554.2 186.9 553.4 184.3 554.4 180.9 M547.9 225.2 549.7 226.1 551.8 225.5 555.4 226.8 556.5 226.6 M547.9 225.2 549.5 226.1 550.5 225.6 553.5 226.0 555.7 227.0 556.5 226.7 M554.4 180.9 552.8 179.3 549.7 178.8 548.8 177.1 M555.5 195.7 554.7 197.3 553.4 197.9 553.2 198.1 552.9 198.3 552.6 198.5 552.6 198.8 552.3 199.0 551.9 199.2 551.9 199.5 551.6 199.6 551.3 199.9 551.5 200.2 551.3 200.4 551.5 200.6 551.7 200.7 551.9 200.8 552.0 200.9 552.1 201.0 552.2 201.3 551.4 202.9 551.7 205.8 550.5 207.7 551.3 208.9 M559.7 201.4 558.7 203.3 556.6 204.2 555.5 207.0 552.6 208.9 551.3 208.9 M551.9 209.4 552.1 212.2 553.0 215.4 553.5 216.8 M564.6 208.6 563.4 208.2 560.5 209.8 557.2 210.5 556.1 210.0 554.9 210.3 551.9 209.4 M553.5 216.8 553.6 217.4 M558.8 171.9 558.0 171.2 555.8 169.0 555.3 169.1 552.4 171.3 551.7 171.7 550.0 174.1 550.3 177.3 549.7 178.6 550.6 178.9 554.4 180.9 M554.4 180.9 554.8 181.0 556.9 180.6 560.5 179.5 562.4 178.5 562.7 177.2 M553.6 217.4 556.9 220.3 557.5 223.5 557.3 225.8 556.5 226.6 M553.6 217.4 557.0 218.0 559.6 216.5 560.6 214.0 562.2 214.2 564.7 214.4 M555.5 195.7 556.3 197.9 558.1 199.5 559.7 201.4 M556.9 188.7 557.1 191.7 555.5 194.6 555.5 195.7 M561.7 161.4 560.6 162.0 557.5 161.7 555.5 163.0 M555.5 163.0 555.6 163.3 555.6 163.7 555.6 163.9 555.6 164.2 555.5 164.4 555.4 164.5 555.5 164.6 555.3 164.7 555.6 164.7 555.5 164.8 555.9 164.7 555.8 164.9 556.2 164.9 556.6 164.9 559.4 166.4 560.2 167.1 560.2 168.2 558.8 171.9 M555.5 163.0 554.6 163.0 551.3 162.4 548.6 162.4 547.3 161.1 543.8 162.0 541.0 162.3 542.2 158.8 541.2 157.6 540.1 156.7 538.9 153.8 538.4 150.3 539.4 148.5 540.1 149.8 542.0 149.9 545.0 149.0 546.1 149.2 547.6 148.2 551.1 148.1 553.4 149.2 554.6 149.0 555.5 150.3 558.0 152.5 558.5 154.5 558.1 156.7 560.7 159.2 562.4 160.8 561.7 161.4 M562.7 177.2 562.2 178.7 558.9 180.0 558.8 181.2 558.9 182.6 557.9 185.8 558.3 187.8 556.9 188.7 M567.4 195.1 565.0 193.8 563.7 193.1 562.7 191.2 560.0 190.3 558.2 189.9 556.9 188.7 M556.5 226.7 560.0 228.3 M556.5 226.6 560.0 228.3 M559.7 201.4 560.8 202.2 564.4 201.3 M560.0 228.3 561.4 229.2 562.4 230.4 M563.8 174.4 558.8 171.9 M558.8 171.9 558.9 171.9 563.8 174.4 M568.0 168.8 567.7 168.4 567.7 165.7 567.0 164.3 564.0 162.4 563.1 160.8 563.0 160.8 562.8 160.8 562.4 161.0 561.9 161.2 561.7 161.4 M562.6 186.2 565.0 186.8 565.9 186.5 569.0 187.0 M562.6 186.2 562.5 185.8 563.5 183.9 563.1 183.0 563.6 180.4 564.0 177.6 M564.0 177.6 563.6 180.5 563.2 183.1 563.5 184.0 562.6 186.2 M562.7 177.2 563.5 176.5 563.8 174.4 M568.0 168.8 566.7 170.1 564.8 171.2 563.8 174.4 M562.4 230.4 562.9 229.7 565.0 228.7 565.6 225.7 568.0 224.4 567.9 224.3 568.0 224.1 M562.7 177.2 564.0 177.6 M564.4 201.3 566.0 203.5 M567.4 195.1 566.4 198.4 565.6 199.6 564.4 201.3 M564.7 214.4 563.6 211.5 564.6 208.6 M564.9 207.7 564.6 208.6 M564.7 214.4 567.5 215.5 M566.0 203.5 564.9 207.7 M566.0 203.5 566.4 202.8 568.3 202.0 572.0 202.3 574.2 202.0 574.8 199.7 M568.0 224.1 565.1 221.5 565.0 221.5 M565.0 221.5 568.0 224.1 M565.0 221.5 566.5 218.9 566.8 216.3 567.5 215.5 M574.1 208.1 571.3 208.6 570.4 208.2 567.7 207.4 564.9 207.7 M569.8 195.1 567.4 195.1 M567.5 215.5 568.4 216.8 570.9 216.6 M568.0 224.1 568.3 221.0 568.9 218.0 570.9 216.6 M573.6 174.0 572.6 172.0 571.2 171.1 568.0 168.8 M575.6 197.2 571.7 195.3 569.8 195.2 569.8 195.1 M569.0 187.0 570.1 189.6 569.4 193.6 569.8 195.1 M569.0 187.0 571.0 187.4 573.1 187.8 574.1 187.1 577.0 187.5 M570.9 216.6 572.0 211.9 572.4 211.7 574.1 210.8 574.1 208.1 M583.5 178.7 581.9 176.9 581.6 177.0 577.9 176.4 577.1 174.8 573.8 174.5 573.6 174.0 M575.3 180.8 574.8 179.8 572.7 178.2 572.8 175.0 573.6 174.0 M575.6 197.2 574.8 198.0 574.8 199.7 M577.6 188.3 576.3 190.6 576.8 191.6 575.4 194.8 575.6 197.2 M574.1 208.1 576.1 205.6 576.3 205.1 577.7 203.9 M574.8 199.7 577.7 203.9 M577.0 187.5 575.4 184.2 575.9 182.5 575.3 180.8 M575.3 180.8 577.9 180.2 582.3 178.3 583.6 179.1 M580.3 186.6 580.1 186.6 577.6 188.3 M577.7 203.9 579.2 201.1 580.1 200.1 582.0 198.7 582.2 195.3 583.5 193.8 M583.4 193.8 582.6 193.2 580.9 190.7 580.3 186.6 M580.3 186.6 580.4 187.0 580.9 191.0 582.7 193.2 583.4 193.8 M582.2 186.7 585.9 187.0 587.4 188.9 M582.2 186.7 582.2 186.6 582.8 184.6 582.5 180.8 583.6 179.1 M583.6 179.1 582.5 180.9 582.9 184.8 582.2 186.7 M583.5 193.8 584.4 193.4 585.0 191.4 586.8 189.4 587.4 188.9 M583.5 178.7 583.6 179.1 M587.4 188.9 589.1 187.5 590.1 183.8 591.4 182.4 592.5 180.2 592.3 179.8 591.7 179.5 591.6 179.2 591.2 179.3 590.8 179.2 590.6 179.4 590.3 179.2 590.2 181.0 587.8 179.5 583.5 178.7 M56.2 160.6 58.8 162.2 59.4 162.2 61.7 163.5 64.5 164.5 65.3 164.6 67.3 166.1 70.4 166.4 71.3 166.8 73.1 168.1 76.2 166.7 78.2 166.1 79.6 166.2 82.6 165.7 85.3 166.7 86.0 167.2 87.4 166.1 85.9 166.8 85.0 166.1 82.0 165.3 79.8 165.4 79.1 163.9 76.7 163.5 73.9 163.6 73.0 162.6 71.2 163.2 68.0 163.4 66.6 162.8 65.3 163.5 62.1 162.8 60.0 162.0 59.1 162.1 56.2 160.6 M86.7 145.6 88.0 145.5 90.7 144.7 92.6 142.6 94.5 141.3 96.4 141.1 96.3 137.8 97.7 135.1 98.6 136.0 99.2 135.7 101.9 133.7 105.2 132.8 106.7 132.9 107.2 132.5 109.0 133.8 110.1 136.9 111.3 136.4 113.8 137.1 113.7 140.2 111.9 142.5 110.0 142.4 109.0 144.0 106.8 145.0 103.7 145.8 101.9 146.3 100.4 147.6 99.3 149.9 99.0 150.6 96.9 151.7 96.1 154.9 93.9 156.6 91.2 154.5 90.1 154.1 87.9 151.3 87.5 147.5 86.7 145.6 M90.4 105.2 91.1 103.4 93.7 103.2 97.1 103.8 98.5 101.8 99.1 99.9 101.9 100.5 104.5 101.1 105.6 102.5 109.5 103.7 111.0 104.4 111.4 106.7 114.0 107.8 115.6 109.5 117.0 112.1 114.9 114.2 114.2 114.3 113.3 116.0 111.9 118.6 111.7 119.6 110.2 121.4 110.4 124.7 108.9 126.1 107.9 126.6 105.5 126.4 102.9 127.6 101.6 129.0 99.2 128.1 95.5 128.1 93.9 128.3 93.2 128.7 90.2 130.6 88.8 127.1 89.6 124.8 89.3 123.3 90.6 119.9 90.2 116.9 90.4 115.9 89.8 113.9 89.2 110.8 89.4 109.5 89.0 108.3 90.4 105.2 M119.9 117.5 122.0 116.2 125.7 117.3 127.0 119.0 126.5 120.2 125.8 121.5 124.6 121.0 122.0 120.7 119.9 117.5 M128.6 113.2 130.5 111.5 133.4 109.9 133.6 114.1 134.6 116.0 133.2 117.2 132.5 118.9 130.6 119.3 129.0 116.0 129.4 113.8 128.6 113.2 M136.3 142.0 138.1 141.4 139.9 140.8 142.4 140.2 144.5 140.9 145.3 140.5 148.0 141.6 150.3 145.0 149.4 146.0 148.9 147.2 145.9 149.1 142.5 150.1 141.3 149.8 140.4 147.9 137.7 146.9 136.8 145.2 136.3 142.0 M138.6 111.1 142.3 111.7 143.4 112.4 144.6 114.0 144.7 115.4 146.3 118.1 145.9 120.4 146.0 121.8 148.5 123.5 151.1 123.9 152.0 125.4 155.1 126.1 155.3 128.0 155.6 131.5 152.6 132.3 149.3 131.5 148.2 130.6 146.5 131.4 143.6 131.5 142.1 132.5 140.8 133.4 137.2 131.5 135.7 131.3 134.1 131.6 133.2 133.0 132.3 135.3 128.9 131.7 131.6 129.6 133.1 128.8 135.1 126.4 136.9 125.0 137.3 123.8 138.1 120.3 138.6 118.3 138.7 117.0 138.1 113.6 138.6 111.1 M258.4 68.8 259.7 68.8 262.9 67.1 265.2 67.8 266.1 68.2 269.0 68.8 271.5 70.4 272.3 70.5 274.8 72.1 276.4 73.8 277.3 74.9 276.3 78.0 274.4 79.6 273.6 80.2 270.7 82.0 267.7 83.6 266.7 84.1 265.2 85.1 262.6 86.8 259.5 87.5 257.9 86.6 256.7 85.5 255.0 83.5 254.6 79.5 255.8 77.7 255.6 75.4 257.2 72.0 257.1 70.4 258.4 68.8 M267.3 30.1 269.8 31.9 273.3 32.0 274.1 33.6 276.6 33.8 279.4 34.2 278.9 36.6 280.1 37.4 283.1 39.3 282.0 42.9 282.3 44.6 280.8 46.2 280.9 49.8 279.2 51.6 278.5 50.3 275.9 50.2 274.1 48.7 272.7 48.1 268.8 47.4 266.7 46.9 264.8 48.0 261.2 47.9 259.9 47.3 257.3 44.9 255.5 44.1 254.8 42.1 255.2 40.5 256.8 40.2 257.6 38.3 258.4 35.4 261.6 35.0 263.6 34.9 265.7 32.0 267.3 30.1 M283.6 24.1 285.0 24.9 287.1 27.5 287.9 29.8 288.9 31.2 292.3 30.5 295.0 29.0 294.8 31.4 295.2 34.9 295.6 37.0 298.8 37.7 300.0 39.0 303.5 40.3 304.1 40.8 304.3 42.8 303.6 43.7 302.0 46.1 298.1 46.0 295.5 44.8 294.0 44.9 290.2 44.1 288.9 45.0 287.3 44.4 284.0 44.7 283.6 41.9 284.4 39.2 283.3 37.5 285.6 36.7 286.1 34.1 287.2 32.8 286.7 31.2 282.8 28.2 283.6 24.1 M294.2 68.0 295.7 69.2 298.4 71.8 298.8 74.4 298.7 75.6 300.4 76.6 300.7 79.3 301.6 83.4 300.1 84.9 300.1 87.2 298.5 90.8 298.7 92.0 298.2 90.6 299.3 87.7 298.3 84.5 297.4 83.1 296.7 82.3 295.9 79.8 297.2 76.5 296.4 74.6 296.4 73.1 294.8 70.4 294.2 68.0" fill="none" stroke="#6b6b6b" stroke-width="1.3" stroke-linejoin="round" stroke-linecap="round"/>
<g fill="#0f7b40" fill-opacity="0.92" stroke="#fff" stroke-width="1.05">
<circle cx="220.4" cy="268.3" r="2.85"/>
<circle cx="262.3" cy="161.9" r="3.05"/>
<circle cx="392.3" cy="111.8" r="3.05"/>
<circle cx="379.5" cy="127.5" r="3.45"/>
<circle cx="349.7" cy="254.2" r="6.05"/>
<circle cx="411.4" cy="202.8" r="27.45"/>
<circle cx="195.4" cy="178.0" r="26.25"/>
<circle cx="337.7" cy="252.7" r="19.95"/>
<circle cx="309.9" cy="127.5" r="18.65"/>
<circle cx="396.5" cy="130.0" r="16.35"/>
<circle cx="274.5" cy="160.4" r="15.85"/>
<circle cx="407.2" cy="98.0" r="15.65"/>
<circle cx="211.0" cy="268.5" r="13.55"/>
<circle cx="521.0" cy="248.6" r="12.25"/>
<circle cx="294.0" cy="280.8" r="12.05"/>
<circle cx="211.6" cy="214.0" r="11.95"/>
<circle cx="241.6" cy="326.2" r="10.20"/>
<circle cx="209.7" cy="192.5" r="9.85"/>
<circle cx="483.5" cy="257.4" r="9.45"/>
<circle cx="421.0" cy="256.1" r="9.25"/>
<circle cx="197.5" cy="200.3" r="8.85"/>
<circle cx="233.2" cy="200.3" r="8.85"/>
<circle cx="323.5" cy="269.6" r="8.85"/>
<circle cx="108.8" cy="196.7" r="8.45"/>
<circle cx="167.5" cy="281.2" r="8.35"/>
<circle cx="188.1" cy="196.6" r="8.35"/>
<circle cx="271.5" cy="287.1" r="8.15"/>
<circle cx="408.2" cy="206.0" r="7.55"/>
<circle cx="336.0" cy="192.8" r="7.55"/>
<circle cx="500.9" cy="248.4" r="7.55"/>
<circle cx="115.4" cy="184.0" r="7.45"/>
<circle cx="296.0" cy="179.0" r="7.45"/>
<circle cx="317.2" cy="275.0" r="7.35"/>
<circle cx="405.4" cy="191.0" r="7.35"/>
<circle cx="169.1" cy="266.8" r="7.25"/>
<circle cx="364.5" cy="89.5" r="7.05"/>
<circle cx="281.4" cy="128.8" r="7.05"/>
<circle cx="419.4" cy="115.7" r="7.05"/>
<circle cx="358.5" cy="199.8" r="7.05"/>
<circle cx="324.1" cy="183.5" r="7.05"/>
<circle cx="557.9" cy="176.3" r="6.85"/>
<circle cx="311.5" cy="276.8" r="6.75"/>
<circle cx="199.8" cy="170.0" r="6.75"/>
<circle cx="245.9" cy="212.5" r="6.65"/>
<circle cx="324.1" cy="196.6" r="6.65"/>
<circle cx="461.9" cy="252.3" r="6.65"/>
<circle cx="162.8" cy="248.0" r="6.45"/>
<circle cx="180.4" cy="291.5" r="6.45"/>
<circle cx="410.6" cy="72.6" r="6.45"/>
<circle cx="253.4" cy="148.2" r="6.45"/>
<circle cx="84.4" cy="196.5" r="6.05"/>
<circle cx="246.3" cy="188.1" r="6.05"/>
<circle cx="304.5" cy="188.5" r="6.05"/>
<circle cx="295.5" cy="207.5" r="6.05"/>
<circle cx="454.8" cy="178.6" r="6.05"/>
<circle cx="401.0" cy="216.3" r="6.05"/>
<circle cx="368.4" cy="202.8" r="6.05"/>
<circle cx="399.8" cy="253.6" r="6.05"/>
<circle cx="171.0" cy="290.3" r="5.85"/>
<circle cx="234.0" cy="224.5" r="5.75"/>
<circle cx="204.1" cy="161.3" r="5.75"/>
<circle cx="456.0" cy="138.4" r="5.75"/>
<circle cx="416.6" cy="206.0" r="5.75"/>
<circle cx="322.5" cy="261.7" r="5.75"/>
<circle cx="313.1" cy="253.3" r="5.75"/>
<circle cx="378.7" cy="170.7" r="5.65"/>
<circle cx="189.2" cy="233.0" r="5.55"/>
<circle cx="315.2" cy="168.6" r="5.55"/>
<circle cx="293.6" cy="188.5" r="5.55"/>
<circle cx="586.9" cy="183.5" r="5.55"/>
<circle cx="548.2" cy="246.4" r="5.55"/>
<circle cx="303.8" cy="261.2" r="5.55"/>
<circle cx="140.7" cy="185.8" r="5.45"/>
<circle cx="188.1" cy="176.9" r="5.35"/>
<circle cx="369.3" cy="133.5" r="5.35"/>
<circle cx="373.5" cy="147.6" r="5.35"/>
<circle cx="396.0" cy="158.5" r="5.35"/>
<circle cx="323.6" cy="223.0" r="5.35"/>
<circle cx="570.4" cy="200.3" r="5.35"/>
<circle cx="153.2" cy="254.0" r="5.15"/>
<circle cx="227.5" cy="168.4" r="5.15"/>
<circle cx="328.4" cy="167.0" r="5.15"/>
<circle cx="398.8" cy="196.6" r="5.15"/>
<circle cx="448.4" cy="250.8" r="5.15"/>
<circle cx="140.1" cy="176.4" r="4.95"/>
<circle cx="266.3" cy="244.8" r="4.95"/>
<circle cx="393.5" cy="100.3" r="4.95"/>
<circle cx="347.2" cy="112.0" r="4.95"/>
<circle cx="439.1" cy="109.3" r="4.95"/>
<circle cx="362.6" cy="251.2" r="4.95"/>
<circle cx="217.6" cy="252.0" r="4.75"/>
<circle cx="219.7" cy="206.3" r="4.75"/>
<circle cx="310.0" cy="242.7" r="4.65"/>
<circle cx="541.0" cy="174.0" r="4.65"/>
<circle cx="178.5" cy="277.5" r="4.55"/>
<circle cx="184.0" cy="304.2" r="4.55"/>
<circle cx="222.5" cy="328.6" r="4.55"/>
<circle cx="196.6" cy="315.8" r="4.55"/>
<circle cx="236.9" cy="152.9" r="4.55"/>
<circle cx="194.7" cy="161.7" r="4.55"/>
<circle cx="215.7" cy="183.5" r="4.55"/>
<circle cx="468.6" cy="143.5" r="4.55"/>
<circle cx="412.0" cy="213.5" r="4.55"/>
<circle cx="460.3" cy="199.4" r="4.55"/>
<circle cx="578.9" cy="192.3" r="4.55"/>
<circle cx="493.8" cy="244.3" r="4.35"/>
<circle cx="441.6" cy="71.3" r="4.20"/>
<circle cx="183.5" cy="182.5" r="4.20"/>
<circle cx="272.6" cy="199.4" r="4.20"/>
<circle cx="291.9" cy="201.3" r="4.20"/>
<circle cx="341.6" cy="95.0" r="4.20"/>
<circle cx="409.1" cy="160.9" r="4.20"/>
<circle cx="459.4" cy="146.8" r="4.20"/>
<circle cx="419.8" cy="221.0" r="4.20"/>
<circle cx="358.8" cy="169.6" r="4.15"/>
<circle cx="306.0" cy="177.7" r="4.05"/>
<circle cx="167.5" cy="206.3" r="4.05"/>
<circle cx="200.3" cy="227.0" r="3.85"/>
<circle cx="178.2" cy="160.7" r="3.85"/>
<circle cx="471.4" cy="112.9" r="3.85"/>
<circle cx="394.1" cy="203.7" r="3.85"/>
<circle cx="379.3" cy="224.5" r="3.85"/>
<circle cx="486.6" cy="177.3" r="3.75"/>
<circle cx="218.1" cy="243.6" r="3.65"/>
<circle cx="485.6" cy="65.7" r="3.65"/>
<circle cx="466.9" cy="118.5" r="3.65"/>
<circle cx="465.4" cy="107.3" r="3.65"/>
<circle cx="560.1" cy="211.6" r="3.65"/>
<circle cx="310.9" cy="264.9" r="3.65"/>
<circle cx="100.7" cy="179.8" r="3.45"/>
<circle cx="251.9" cy="315.8" r="3.45"/>
<circle cx="264.1" cy="78.4" r="3.45"/>
<circle cx="311.0" cy="189.5" r="3.45"/>
<circle cx="342.9" cy="185.9" r="3.45"/>
<circle cx="228.8" cy="241.2" r="3.25"/>
<circle cx="261.3" cy="73.5" r="3.25"/>
<circle cx="191.9" cy="141.0" r="3.25"/>
<circle cx="252.9" cy="164.3" r="3.25"/>
<circle cx="355.3" cy="156.2" r="3.25"/>
<circle cx="425.0" cy="99.4" r="3.25"/>
<circle cx="527.8" cy="180.2" r="3.25"/>
<circle cx="414.7" cy="195.6" r="3.25"/>
<circle cx="295.8" cy="223.1" r="3.15"/>
<circle cx="240.3" cy="262.5" r="3.05"/>
<circle cx="240.3" cy="58.5" r="3.05"/>
<circle cx="426.6" cy="85.4" r="3.05"/>
<circle cx="279.5" cy="107.8" r="3.05"/>
<circle cx="206.9" cy="153.2" r="3.05"/>
<circle cx="177.8" cy="174.2" r="3.05"/>
<circle cx="228.9" cy="241.0" r="3.05"/>
<circle cx="328.8" cy="115.7" r="3.05"/>
<circle cx="462.6" cy="99.0" r="3.05"/>
<circle cx="417.6" cy="103.5" r="3.05"/>
<circle cx="414.7" cy="173.3" r="3.05"/>
<circle cx="465.4" cy="238.7" r="3.05"/>
<circle cx="190.0" cy="168.0" r="2.95"/>
<circle cx="260.0" cy="298.4" r="2.85"/>
<circle cx="235.4" cy="311.2" r="2.85"/>
<circle cx="252.3" cy="308.7" r="2.85"/>
<circle cx="247.2" cy="158.5" r="2.85"/>
<circle cx="163.2" cy="188.5" r="2.85"/>
<circle cx="396.0" cy="107.8" r="2.85"/>
<circle cx="396.5" cy="92.8" r="2.85"/>
<circle cx="391.3" cy="167.4" r="2.85"/>
<circle cx="410.3" cy="253.1" r="2.85"/>
<circle cx="429.8" cy="256.5" r="2.85"/>
<circle cx="493.4" cy="249.3" r="2.85"/>
<circle cx="344.0" cy="125.6" r="2.70"/>
<circle cx="384.2" cy="94.1" r="2.70"/>
<circle cx="412.9" cy="149.1" r="2.70"/>
<circle cx="336.9" cy="215.7" r="2.70"/>
<circle cx="416.6" cy="230.9" r="2.70"/>
<circle cx="377.5" cy="252.1" r="2.70"/>
<circle cx="476.1" cy="80.3" r="2.65"/>
<circle cx="195.6" cy="155.7" r="2.65"/>
<circle cx="83.9" cy="173.0" r="2.45"/>
<circle cx="118.8" cy="192.8" r="2.45"/>
<circle cx="500.3" cy="62.8" r="2.45"/>
<circle cx="217.2" cy="155.7" r="2.45"/>
<circle cx="274.4" cy="215.3" r="2.45"/>
<circle cx="281.0" cy="211.0" r="2.45"/>
<circle cx="286.3" cy="209.2" r="2.45"/>
<circle cx="305.8" cy="210.1" r="2.45"/>
<circle cx="457.3" cy="123.8" r="2.45"/>
<circle cx="417.0" cy="158.9" r="2.45"/>
<circle cx="385.8" cy="231.6" r="2.45"/>
<circle cx="244.8" cy="237.6" r="2.35"/>
<circle cx="259.7" cy="229.7" r="2.35"/>
<circle cx="278.7" cy="273.5" r="2.35"/>
<circle cx="293.6" cy="39.4" r="2.35"/>
<circle cx="487.5" cy="58.5" r="2.35"/>
<circle cx="184.0" cy="158.0" r="2.35"/>
<circle cx="169.6" cy="170.9" r="2.35"/>
<circle cx="262.3" cy="156.2" r="2.35"/>
<circle cx="290.0" cy="148.5" r="2.35"/>
<circle cx="172.8" cy="184.4" r="2.35"/>
<circle cx="179.3" cy="208.2" r="2.35"/>
<circle cx="258.9" cy="206.0" r="2.35"/>
<circle cx="237.9" cy="191.0" r="2.35"/>
<circle cx="410.6" cy="184.0" r="2.35"/>
<circle cx="429.9" cy="239.6" r="2.35"/>
<circle cx="357.0" cy="193.8" r="2.35"/>
<circle cx="440.1" cy="183.1" r="2.35"/>
<circle cx="377.8" cy="202.8" r="2.35"/>
<circle cx="513.8" cy="237.5" r="2.35"/>
<circle cx="297.2" cy="261.5" r="2.35"/>
<circle cx="211.2" cy="218.4" r="2.25"/>
<circle cx="144.4" cy="223.0" r="2.15"/>
<circle cx="139.4" cy="126.2" r="2.15"/>
<circle cx="178.8" cy="189.0" r="2.15"/>
<circle cx="262.8" cy="183.5" r="2.15"/>
<circle cx="443.8" cy="105.6" r="2.15"/>
<circle cx="496.5" cy="178.2" r="2.15"/>
<circle cx="402.0" cy="179.7" r="2.15"/>
<circle cx="422.8" cy="197.0" r="2.15"/>
<circle cx="569.5" cy="211.6" r="2.15"/>
<circle cx="531.6" cy="182.5" r="2.15"/>
<circle cx="324.8" cy="242.8" r="2.15"/>
<circle cx="144.5" cy="223.3" r="2.05"/>
<circle cx="134.7" cy="180.2" r="2.05"/>
<circle cx="420.6" cy="103.2" r="2.05"/>
<circle cx="300.1" cy="82.6" r="1.95"/>
<circle cx="295.5" cy="151.9" r="1.95"/>
<circle cx="272.0" cy="129.8" r="1.95"/>
<circle cx="282.5" cy="185.3" r="1.95"/>
<circle cx="428.8" cy="147.8" r="1.95"/>
<circle cx="322.3" cy="148.5" r="1.95"/>
<circle cx="462.0" cy="110.6" r="1.95"/>
<circle cx="507.8" cy="158.5" r="1.95"/>
<circle cx="389.8" cy="204.1" r="1.95"/>
<circle cx="393.2" cy="198.5" r="1.95"/>
<circle cx="128.5" cy="190.5" r="1.75"/>
<circle cx="182.5" cy="173.5" r="1.75"/>
<circle cx="178.8" cy="182.1" r="1.75"/>
<circle cx="178.8" cy="185.7" r="1.75"/>
<circle cx="433.5" cy="128.5" r="1.75"/>
<circle cx="400.3" cy="138.4" r="1.75"/>
<circle cx="321.5" cy="99.0" r="1.75"/>
<circle cx="389.4" cy="210.3" r="1.75"/>
<circle cx="297.2" cy="267.2" r="1.75"/>
<circle cx="439.2" cy="240.9" r="1.75"/>
<circle cx="124.4" cy="119.5" r="1.65"/>
<circle cx="451.9" cy="75.0" r="1.55"/>
<circle cx="223.8" cy="153.2" r="1.55"/>
<circle cx="315.4" cy="160.4" r="1.55"/>
<circle cx="527.8" cy="189.6" r="1.55"/>
<circle cx="496.9" cy="141.0" r="1.45"/>
</g>
<g fill="#1c8148" stroke="#fff" stroke-width="1.2">
<circle cx="70.9" cy="189.9" r="1.85"/>
<circle cx="74.1" cy="201.0" r="1.85"/>
<circle cx="85.9" cy="189.0" r="1.85"/>
<circle cx="98.9" cy="192.9" r="1.85"/>
<circle cx="115.9" cy="207.8" r="1.85"/>
<circle cx="125.1" cy="195.9" r="1.85"/>
<circle cx="153.8" cy="178.3" r="1.85"/>
<circle cx="155.1" cy="201.0" r="1.85"/>
<circle cx="130.7" cy="171.8" r="1.85"/>
<circle cx="91.3" cy="172.1" r="1.85"/>
<circle cx="67.5" cy="196.5" r="1.85"/>
<circle cx="210.6" cy="239.2" r="1.85"/>
<circle cx="173.5" cy="238.3" r="1.85"/>
<circle cx="190.3" cy="239.2" r="1.85"/>
<circle cx="232.2" cy="247.4" r="1.85"/>
<circle cx="224.7" cy="263.4" r="1.85"/>
<circle cx="241.4" cy="257.4" r="1.85"/>
<circle cx="257.5" cy="264.3" r="1.85"/>
<circle cx="270.1" cy="247.4" r="1.85"/>
<circle cx="288.2" cy="246.5" r="1.85"/>
<circle cx="269.1" cy="233.0" r="1.85"/>
<circle cx="269.5" cy="221.8" r="1.85"/>
<circle cx="281.3" cy="221.2" r="1.85"/>
<circle cx="290.3" cy="229.3" r="1.85"/>
<circle cx="251.3" cy="279.5" r="1.85"/>
<circle cx="240.0" cy="289.7" r="1.85"/>
<circle cx="258.4" cy="289.3" r="1.85"/>
<circle cx="218.8" cy="293.0" r="1.85"/>
<circle cx="211.9" cy="296.8" r="1.85"/>
<circle cx="249.4" cy="297.7" r="1.85"/>
<circle cx="160.7" cy="264.0" r="1.85"/>
<circle cx="219.1" cy="292.8" r="1.85"/>
<circle cx="212.0" cy="297.1" r="1.85"/>
<circle cx="240.1" cy="289.9" r="1.85"/>
<circle cx="251.3" cy="279.6" r="1.85"/>
<circle cx="258.5" cy="289.6" r="1.85"/>
<circle cx="249.5" cy="297.4" r="1.85"/>
<circle cx="267.9" cy="40.7" r="1.85"/>
<circle cx="314.7" cy="55.0" r="1.85"/>
<circle cx="248.5" cy="54.4" r="1.85"/>
<circle cx="293.9" cy="68.8" r="1.85"/>
<circle cx="341.2" cy="78.4" r="1.85"/>
<circle cx="431.6" cy="63.4" r="1.85"/>
<circle cx="467.2" cy="69.4" r="1.85"/>
<circle cx="475.3" cy="73.5" r="1.85"/>
<circle cx="432.9" cy="82.5" r="1.85"/>
<circle cx="422.2" cy="85.3" r="1.85"/>
<circle cx="494.6" cy="83.8" r="1.85"/>
<circle cx="103.2" cy="113.4" r="1.85"/>
<circle cx="99.4" cy="142.5" r="1.85"/>
<circle cx="66.2" cy="158.5" r="1.85"/>
<circle cx="91.3" cy="172.5" r="1.85"/>
<circle cx="131.3" cy="116.3" r="1.85"/>
<circle cx="152.3" cy="129.4" r="1.85"/>
<circle cx="140.3" cy="145.3" r="1.85"/>
<circle cx="144.4" cy="144.8" r="1.85"/>
<circle cx="126.0" cy="163.7" r="1.85"/>
<circle cx="117.2" cy="167.3" r="1.85"/>
<circle cx="131.3" cy="172.0" r="1.85"/>
<circle cx="146.3" cy="170.7" r="1.85"/>
<circle cx="158.5" cy="166.5" r="1.85"/>
<circle cx="208.4" cy="98.4" r="1.85"/>
<circle cx="206.0" cy="118.1" r="1.85"/>
<circle cx="211.2" cy="130.9" r="1.85"/>
<circle cx="228.5" cy="127.5" r="1.85"/>
<circle cx="245.3" cy="131.3" r="1.85"/>
<circle cx="250.0" cy="141.0" r="1.85"/>
<circle cx="292.2" cy="93.4" r="1.85"/>
<circle cx="176.9" cy="152.5" r="1.85"/>
<circle cx="160.0" cy="145.7" r="1.85"/>
<circle cx="218.5" cy="151.5" r="1.85"/>
<circle cx="296.9" cy="147.2" r="1.85"/>
<circle cx="300.7" cy="148.1" r="1.85"/>
<circle cx="290.4" cy="229.4" r="1.85"/>
<circle cx="299.2" cy="242.0" r="1.85"/>
<circle cx="296.4" cy="235.0" r="1.85"/>
<circle cx="312.9" cy="231.8" r="1.85"/>
<circle cx="210.6" cy="239.2" r="1.85"/>
<circle cx="173.5" cy="238.8" r="1.85"/>
<circle cx="190.4" cy="239.2" r="1.85"/>
<circle cx="269.2" cy="221.9" r="1.85"/>
<circle cx="281.0" cy="221.5" r="1.85"/>
<circle cx="269.4" cy="233.2" r="1.85"/>
<circle cx="287.5" cy="246.3" r="1.85"/>
<circle cx="163.2" cy="197.0" r="1.85"/>
<circle cx="358.5" cy="101.6" r="1.85"/>
<circle cx="356.6" cy="126.2" r="1.85"/>
<circle cx="346.3" cy="149.5" r="1.85"/>
<circle cx="360.3" cy="132.8" r="1.85"/>
<circle cx="371.6" cy="123.4" r="1.85"/>
<circle cx="369.1" cy="117.6" r="1.85"/>
<circle cx="381.9" cy="119.6" r="1.85"/>
<circle cx="388.5" cy="145.7" r="1.85"/>
<circle cx="403.8" cy="157.2" r="1.85"/>
<circle cx="417.5" cy="128.5" r="1.85"/>
<circle cx="431.6" cy="140.3" r="1.85"/>
<circle cx="444.4" cy="144.4" r="1.85"/>
<circle cx="430.7" cy="164.7" r="1.85"/>
<circle cx="437.2" cy="173.1" r="1.85"/>
<circle cx="368.4" cy="173.1" r="1.85"/>
<circle cx="345.3" cy="175.7" r="1.85"/>
<circle cx="474.7" cy="155.7" r="1.85"/>
<circle cx="353.8" cy="114.4" r="1.85"/>
<circle cx="381.9" cy="139.7" r="1.85"/>
<circle cx="360.3" cy="155.7" r="1.85"/>
<circle cx="501.9" cy="116.8" r="1.85"/>
<circle cx="491.3" cy="152.3" r="1.85"/>
<circle cx="535.3" cy="140.3" r="1.85"/>
<circle cx="548.5" cy="134.5" r="1.85"/>
<circle cx="548.5" cy="156.2" r="1.85"/>
<circle cx="345.3" cy="175.0" r="1.85"/>
<circle cx="368.4" cy="173.1" r="1.85"/>
<circle cx="370.3" cy="185.3" r="1.85"/>
<circle cx="382.3" cy="193.8" r="1.85"/>
<circle cx="344.4" cy="190.0" r="1.85"/>
<circle cx="344.4" cy="219.5" r="1.85"/>
<circle cx="358.8" cy="225.7" r="1.85"/>
<circle cx="356.2" cy="232.2" r="1.85"/>
<circle cx="376.3" cy="215.7" r="1.85"/>
<circle cx="392.8" cy="231.7" r="1.85"/>
<circle cx="402.5" cy="233.2" r="1.85"/>
<circle cx="441.5" cy="217.6" r="1.85"/>
<circle cx="432.5" cy="224.3" r="1.85"/>
<circle cx="449.4" cy="198.8" r="1.85"/>
<circle cx="447.5" cy="205.0" r="1.85"/>
<circle cx="457.9" cy="204.6" r="1.85"/>
<circle cx="437.2" cy="173.5" r="1.85"/>
<circle cx="424.5" cy="175.0" r="1.85"/>
<circle cx="417.0" cy="169.4" r="1.85"/>
<circle cx="430.7" cy="164.1" r="1.85"/>
<circle cx="448.9" cy="177.8" r="1.85"/>
<circle cx="446.0" cy="184.4" r="1.85"/>
<circle cx="450.4" cy="183.4" r="1.85"/>
<circle cx="439.1" cy="241.0" r="1.85"/>
<circle cx="449.4" cy="232.2" r="1.85"/>
<circle cx="463.5" cy="232.2" r="1.85"/>
<circle cx="420.0" cy="243.8" r="1.85"/>
<circle cx="324.3" cy="242.5" r="1.85"/>
<circle cx="382.5" cy="230.9" r="1.85"/>
<circle cx="424.1" cy="228.5" r="1.85"/>
<circle cx="427.9" cy="229.4" r="1.85"/>
<circle cx="508.1" cy="186.8" r="1.85"/>
<circle cx="518.5" cy="183.4" r="1.85"/>
<circle cx="541.9" cy="187.8" r="1.85"/>
<circle cx="548.5" cy="186.3" r="1.85"/>
<circle cx="561.2" cy="196.2" r="1.85"/>
<circle cx="536.3" cy="200.3" r="1.85"/>
<circle cx="565.0" cy="225.1" r="1.85"/>
<circle cx="513.4" cy="233.2" r="1.85"/>
<circle cx="520.7" cy="235.4" r="1.85"/>
<circle cx="571.3" cy="203.5" r="1.85"/>
<circle cx="559.7" cy="207.3" r="1.85"/>
<circle cx="312.8" cy="231.7" r="1.85"/>
<circle cx="299.1" cy="242.0" r="1.85"/>
<circle cx="290.3" cy="229.3" r="1.85"/>
<circle cx="288.4" cy="246.1" r="1.85"/>
<circle cx="296.3" cy="235.4" r="1.85"/>
<circle cx="298.1" cy="247.4" r="1.85"/>
<circle cx="294.8" cy="253.6" r="1.85"/>
<circle cx="359.1" cy="225.9" r="1.85"/>
<circle cx="356.7" cy="232.4" r="1.85"/>
<circle cx="344.6" cy="219.5" r="1.85"/>
<circle cx="369.8" cy="251.8" r="1.85"/>
<circle cx="388.5" cy="251.4" r="1.85"/>
<circle cx="382.0" cy="231.5" r="1.85"/>
<circle cx="392.9" cy="231.5" r="1.85"/>
<circle cx="398.5" cy="242.4" r="1.85"/>
<circle cx="402.8" cy="233.4" r="1.85"/>
<circle cx="420.1" cy="243.9" r="1.85"/>
<circle cx="433.2" cy="224.0" r="1.85"/>
<circle cx="324.0" cy="231.5" r="1.85"/>
<circle cx="359.7" cy="248.4" r="1.85"/>
<circle cx="450.6" cy="232.1" r="1.85"/>
<circle cx="463.4" cy="232.1" r="1.85"/>
<circle cx="481.2" cy="240.9" r="1.85"/>
<circle cx="513.5" cy="233.4" r="1.85"/>
<circle cx="565.0" cy="224.9" r="1.85"/>
<circle cx="473.1" cy="251.8" r="1.85"/>
<circle cx="520.0" cy="235.8" r="1.85"/>
</g>
<rect x="462" y="344" width="1.6" height="1.2" fill="#444"/>
<rect x="634" y="0.3" width="3" height="1" fill="#666"/>
</svg>
<div class="abs" style="left:1.6px;top:338px;height:14px;width:187px;background:rgba(255,255,255,0.66);font-size:11.6px;line-height:14px;color:#7b7b7b;white-space:nowrap;"><span style="position:absolute;left:2.8px;top:-0.3px;">© 2020 Mapbox &nbsp;© OpenStreetMap</span></div>
<div id="mapb" class="abs"></div>
</div>
</body>
</html>
